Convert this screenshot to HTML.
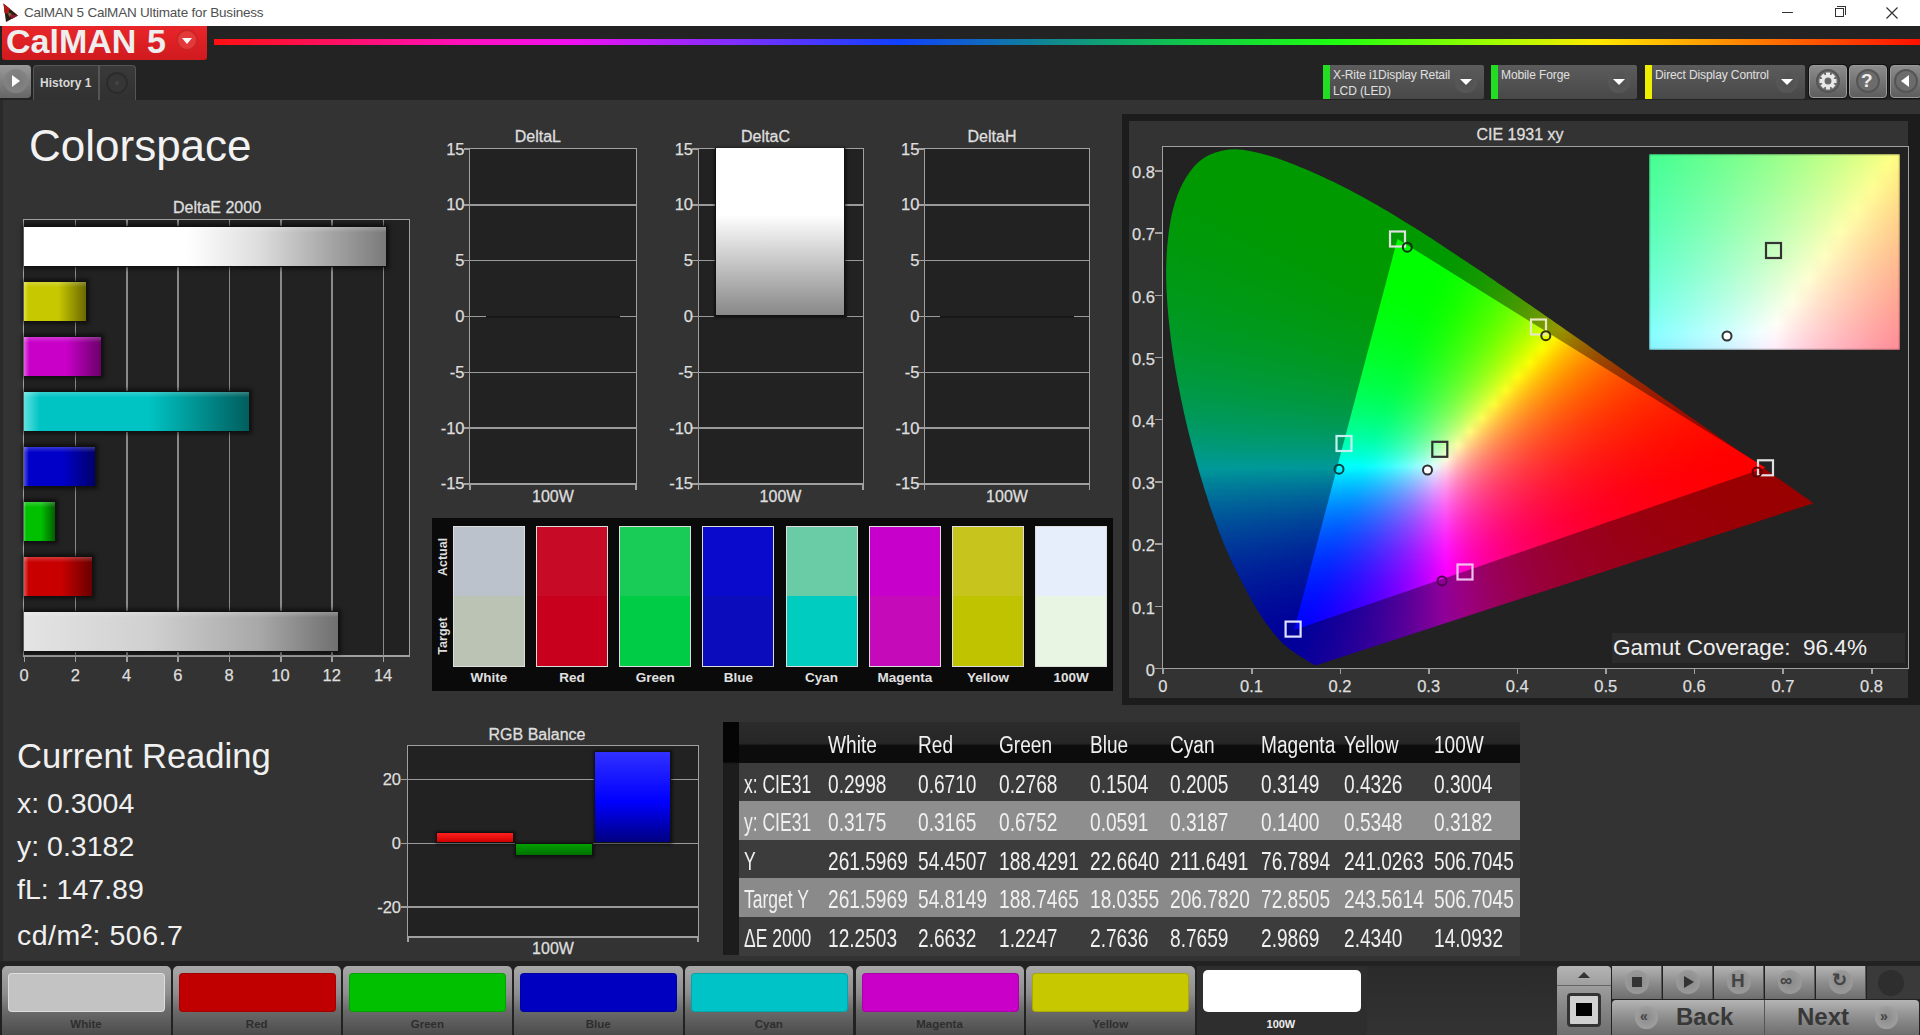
<!DOCTYPE html><html><head><meta charset="utf-8"><style>
*{margin:0;padding:0;box-sizing:border-box}
html,body{width:1920px;height:1035px;overflow:hidden;background:#333;font-family:"Liberation Sans", sans-serif}
.ab{position:absolute}
.t{position:absolute;white-space:nowrap;line-height:1}
.lb{font-size:16.5px;color:#dedede;-webkit-text-stroke:0.25px #dedede}
.tt{font-size:16px;color:#dedede;-webkit-text-stroke:0.3px #dedede}
#cie div,.cier div{position:absolute;left:0}
</style></head><body>

<div class="ab" style="left:0;top:0;width:1920px;height:26px;background:#fff"></div>
<svg class="ab" style="left:0;top:0" width="22" height="26"><path d="M3.5 3.5 L18 15.5 L6 22 Z" fill="#2a1c10"/><path d="M3.5 3.5 L10 9 L7.5 14 L4.5 13 Z" fill="#b01818"/><path d="M7.5 14 L18 15.5 L12 19 Z" fill="#8a1830"/><path d="M8 12 L12 14 L9 17 Z" fill="#7a6a40"/></svg>
<div class="t" style="left:24px;top:6px;font-size:13.5px;color:#505050;letter-spacing:-0.2px">CalMAN 5 CalMAN Ultimate for Business</div>
<div class="ab" style="left:1782px;top:12px;width:11px;height:1px;background:#333"></div>
<div class="ab" style="left:1835px;top:8px;width:9px;height:9px;border:1px solid #333"></div><div class="ab" style="left:1837px;top:6px;width:9px;height:9px;border-top:1px solid #333;border-right:1px solid #333"></div>
<svg class="ab" style="left:1886px;top:7px" width="12" height="12"><path d="M0.5 0.5 L11.5 11.5 M11.5 0.5 L0.5 11.5" stroke="#333" stroke-width="1.2"/></svg>
<div class="ab" style="left:0;top:26px;width:1920px;height:74px;background:#232323"></div>
<div class="ab" style="left:2px;top:26px;width:205px;height:34px;background:linear-gradient(#e8262a,#d01a1e);border-radius:0 0 3px 3px"></div>
<div class="t" style="left:6px;top:23.5px;font-size:34px;font-weight:bold;color:#eee;letter-spacing:0px">CalMAN</div><div class="t" style="left:147px;top:23.5px;font-size:34px;font-weight:bold;color:#eee">5</div>
<div class="ab" style="left:176px;top:29px;width:22px;height:22px;border-radius:50%;background:#e23a3a;border:2px solid #cf2424"></div>
<svg class="ab" style="left:182px;top:38px" width="10" height="7"><path d="M0 0 H10 L5 6 Z" fill="#fff"/></svg>
<div class="ab" style="left:214px;top:39px;width:1706px;height:6px;background:linear-gradient(90deg,#ff1010 0%,#ff10c0 15%,#f010f0 21%,#7a30ff 31%,#1040ff 40%,#108890 49%,#10d040 58%,#20ff10 66%,#a0ff00 75%,#ffe800 81%,#ff8000 90%,#ff1000 100%)"></div>
<div class="ab" style="left:0;top:65px;width:31px;height:33px;border-radius:0 4px 4px 0;background:linear-gradient(#9a9a9a,#666);"></div>
<div class="ab" style="left:4px;top:69px;width:24px;height:24px;border-radius:50%;background:radial-gradient(#777,#888)"></div>
<svg class="ab" style="left:11px;top:74px" width="10" height="14"><path d="M1 1 L9 7 L1 13 Z" fill="#fff"/></svg>
<div class="ab" style="left:33px;top:65px;width:103px;height:36px;border:1.5px solid #555;border-bottom:none;border-radius:4px 4px 0 0;background:linear-gradient(#3a3a3a,#303030)"></div>
<div class="ab" style="left:98px;top:66px;width:1.5px;height:34px;background:#555"></div>
<div class="t" style="left:40px;top:77px;font-size:12px;font-weight:bold;color:#d8d8d8">History 1</div>
<div class="ab" style="left:106px;top:72px;width:22px;height:22px;border-radius:50%;background:#363636;border:2px solid #2c2c2c"></div><div class="ab" style="left:115px;top:81px;width:4px;height:4px;border-radius:50%;background:#444"></div>
<div class="ab" style="left:1323px;top:65px;width:161px;height:34px;background:linear-gradient(#5c5c5c,#484848);border-radius:2px"></div>
<div class="ab" style="left:1323px;top:65px;width:7px;height:34px;background:#22dd22"></div>
<div class="t" style="left:1333px;top:69px;font-size:12px;color:#e0e0e0;letter-spacing:-0.1px">X-Rite i1Display Retail</div>
<div class="t" style="left:1333px;top:85px;font-size:12px;color:#e0e0e0;letter-spacing:-0.1px">LCD (LED)</div>
<div class="ab" style="left:1455px;top:71px;width:22px;height:22px;border-radius:50%;background:radial-gradient(#505050,#5a5a5a)"></div>
<svg class="ab" style="left:1460px;top:79px" width="12" height="8"><path d="M0 0 H12 L6 6 Z" fill="#fff"/></svg>
<div class="ab" style="left:1491px;top:65px;width:146px;height:34px;background:linear-gradient(#5c5c5c,#484848);border-radius:2px"></div>
<div class="ab" style="left:1491px;top:65px;width:7px;height:34px;background:#22dd22"></div>
<div class="t" style="left:1501px;top:69px;font-size:12px;color:#e0e0e0;letter-spacing:-0.1px">Mobile Forge</div>
<div class="ab" style="left:1608px;top:71px;width:22px;height:22px;border-radius:50%;background:radial-gradient(#505050,#5a5a5a)"></div>
<svg class="ab" style="left:1613px;top:79px" width="12" height="8"><path d="M0 0 H12 L6 6 Z" fill="#fff"/></svg>
<div class="ab" style="left:1645px;top:65px;width:160px;height:34px;background:linear-gradient(#5c5c5c,#484848);border-radius:2px"></div>
<div class="ab" style="left:1645px;top:65px;width:7px;height:34px;background:#eeee00"></div>
<div class="t" style="left:1655px;top:69px;font-size:12px;color:#e0e0e0;letter-spacing:-0.1px">Direct Display Control</div>
<div class="ab" style="left:1776px;top:71px;width:22px;height:22px;border-radius:50%;background:radial-gradient(#505050,#5a5a5a)"></div>
<svg class="ab" style="left:1781px;top:79px" width="12" height="8"><path d="M0 0 H12 L6 6 Z" fill="#fff"/></svg>
<div class="ab" style="left:1809px;top:65px;width:38px;height:33px;background:linear-gradient(#8c8c8c,#5e5e5e);border-radius:4px;border:1.5px solid #9a9a9a;box-shadow:0 0 0 1px #111"></div>
<div class="ab" style="left:1816px;top:69px;width:24px;height:24px;border-radius:50%;background:#6c6c6c;border:2px solid #555"></div>
<svg class="ab" style="left:1819px;top:72px" width="18" height="18" viewBox="-9 -9 18 18"><rect x="-2" y="-8.5" width="4" height="4" fill="#e8e8e8" transform="rotate(0)"/><rect x="-2" y="-8.5" width="4" height="4" fill="#e8e8e8" transform="rotate(45)"/><rect x="-2" y="-8.5" width="4" height="4" fill="#e8e8e8" transform="rotate(90)"/><rect x="-2" y="-8.5" width="4" height="4" fill="#e8e8e8" transform="rotate(135)"/><rect x="-2" y="-8.5" width="4" height="4" fill="#e8e8e8" transform="rotate(180)"/><rect x="-2" y="-8.5" width="4" height="4" fill="#e8e8e8" transform="rotate(225)"/><rect x="-2" y="-8.5" width="4" height="4" fill="#e8e8e8" transform="rotate(270)"/><rect x="-2" y="-8.5" width="4" height="4" fill="#e8e8e8" transform="rotate(315)"/><circle r="5" fill="none" stroke="#e8e8e8" stroke-width="3"/><circle r="2.2" fill="#666"/></svg>
<div class="ab" style="left:1849px;top:65px;width:38px;height:33px;background:linear-gradient(#8c8c8c,#5e5e5e);border-radius:4px;border:1.5px solid #9a9a9a;box-shadow:0 0 0 1px #111"></div>
<div class="ab" style="left:1856px;top:69px;width:24px;height:24px;border-radius:50%;background:#6c6c6c;border:2px solid #555"></div>
<div class="t" style="left:1861px;top:71px;font-size:19px;font-weight:bold;color:#eee">?</div>
<div class="ab" style="left:1890px;top:65px;width:32px;height:33px;background:linear-gradient(#8c8c8c,#5e5e5e);border-radius:4px;border:1.5px solid #9a9a9a;box-shadow:0 0 0 1px #111"></div>
<div class="ab" style="left:1894px;top:69px;width:24px;height:24px;border-radius:50%;background:#6c6c6c;border:2px solid #555"></div>
<svg class="ab" style="left:1900px;top:74px" width="10" height="14"><path d="M9 1 L1 7 L9 13 Z" fill="#fff"/></svg>
<div class="ab" style="left:0;top:100px;width:1920px;height:861px;background:#333"></div>
<div class="ab" style="left:0;top:100px;width:3px;height:861px;background:#2a2a2a"></div>
<div class="t" style="left:29px;top:124px;font-size:44px;color:#f2f2f2">Colorspace</div>
<div class="ab" style="left:1122px;top:114px;width:798px;height:591px;background:#1c1c1c"></div>
<div class="ab" style="left:1129px;top:121px;width:779px;height:577px;background:#333"></div>
<div class="t tt" style="left:1520px;top:127px;transform:translateX(-50%)">CIE 1931 xy</div>
<div class="ab" style="left:1162px;top:146px;width:747px;height:523px;border:1.5px solid #a0a0a0;border-right-width:1.5px;background:#222"></div>
<div class="ab" style="left:1163px;top:147px;width:745px;height:521px;clip-path:polygon(154.1px 518.1px,152.8px 518.2px,151.7px 518.0px,150.7px 517.6px,149.5px 516.9px,147.7px 515.9px,145.5px 514.4px,142.6px 512.6px,138.6px 510.2px,133.6px 507.1px,127.4px 502.7px,119.9px 496.4px,115.2px 491.5px,109.8px 485.2px,105.9px 480.1px,101.6px 474.3px,97.0px 467.2px,94.0px 462.4px,90.9px 457.2px,87.7px 451.6px,84.3px 445.4px,80.8px 438.7px,78.1px 433.5px,75.3px 428.1px,72.5px 422.4px,69.6px 416.4px,66.6px 410.0px,63.7px 403.4px,60.7px 396.4px,58.7px 391.2px,56.6px 385.9px,54.6px 380.4px,52.5px 374.8px,50.4px 369.0px,48.3px 363.0px,46.2px 356.9px,44.2px 350.6px,42.1px 344.2px,40.1px 337.7px,38.4px 332.1px,36.7px 326.4px,35.0px 320.5px,33.3px 314.6px,31.6px 308.5px,30.0px 302.3px,28.3px 296.1px,26.7px 289.8px,25.1px 283.5px,23.6px 277.2px,22.1px 270.8px,20.7px 264.5px,19.5px 258.6px,18.2px 252.7px,17.0px 246.7px,15.8px 240.6px,14.6px 234.5px,13.5px 228.4px,12.4px 222.3px,11.4px 216.2px,10.4px 210.1px,9.5px 204.1px,8.7px 198.1px,7.9px 192.2px,7.2px 186.3px,6.5px 180.0px,5.8px 173.8px,5.2px 167.5px,4.7px 161.3px,4.2px 155.1px,3.9px 148.9px,3.5px 142.9px,3.3px 136.9px,3.2px 131.0px,3.1px 125.2px,3.2px 119.5px,3.4px 113.9px,3.7px 106.6px,4.2px 99.4px,4.9px 92.4px,5.7px 85.5px,6.7px 78.8px,7.8px 72.3px,9.1px 66.1px,10.6px 60.2px,12.2px 54.6px,14.6px 47.8px,17.3px 41.3px,20.3px 35.3px,23.5px 29.8px,27.0px 24.7px,30.6px 20.1px,34.4px 16.1px,40.0px 11.5px,46.0px 8.0px,52.4px 5.5px,59.0px 3.7px,65.7px 2.6px,72.5px 2.2px,79.5px 2.8px,86.7px 4.0px,93.9px 5.6px,101.0px 7.3px,107.0px 8.9px,113.0px 10.8px,119.1px 13.0px,125.1px 15.2px,131.1px 17.6px,136.9px 19.9px,142.7px 22.3px,148.4px 24.7px,154.0px 27.2px,159.6px 29.8px,165.2px 32.4px,170.8px 35.0px,176.3px 37.7px,181.7px 40.5px,187.1px 43.3px,192.5px 46.2px,197.9px 49.1px,203.3px 52.0px,208.6px 55.0px,214.0px 58.1px,219.3px 61.2px,224.7px 64.3px,230.0px 67.5px,235.3px 70.7px,240.6px 73.9px,245.9px 77.2px,251.2px 80.5px,256.5px 83.8px,261.8px 87.2px,267.0px 90.6px,272.3px 94.0px,277.6px 97.4px,282.8px 100.9px,288.1px 104.4px,293.4px 107.9px,298.6px 111.4px,303.9px 114.9px,309.2px 118.4px,314.5px 122.0px,319.8px 125.6px,325.1px 129.2px,330.4px 132.8px,335.6px 136.4px,340.9px 140.0px,346.1px 143.6px,351.4px 147.2px,356.6px 150.8px,361.9px 154.5px,367.1px 158.1px,372.4px 161.7px,377.6px 165.3px,382.8px 169.0px,388.1px 172.6px,393.2px 176.2px,398.4px 179.8px,403.6px 183.4px,408.7px 187.0px,413.8px 190.5px,418.9px 194.1px,424.0px 197.6px,429.0px 201.2px,434.0px 204.7px,439.0px 208.2px,444.0px 211.7px,448.9px 215.1px,453.8px 218.5px,459.6px 222.6px,465.4px 226.7px,471.2px 230.7px,476.8px 234.7px,482.4px 238.6px,488.0px 242.4px,493.4px 246.2px,498.8px 250.0px,504.1px 253.7px,509.4px 257.3px,515.7px 261.8px,522.0px 266.2px,528.0px 270.5px,533.9px 274.6px,539.5px 278.5px,544.9px 282.3px,550.2px 286.0px,555.2px 289.5px,561.8px 294.1px,568.1px 298.5px,574.0px 302.6px,579.6px 306.5px,584.7px 310.1px,589.6px 313.5px,596.3px 318.1px,602.3px 322.3px,607.6px 326.1px,612.4px 329.4px,620.4px 335.0px,626.9px 339.6px,632.3px 343.4px,636.7px 346.5px,640.3px 348.9px,642.9px 350.8px,645.0px 352.2px,646.5px 353.3px,647.4px 353.9px,649.5px 355.4px,650.6px 356.2px)"><div id="cie" class="ab" style="left:0;top:0;width:745px;height:521px;filter:blur(1.5px)"><div style="top:0px;height:6px;width:660px;background:linear-gradient(90deg,#009900 0px,#009900 20px,#009900 40px,#009900 60px,#009900 80px,#009900 100px,#009900 120px,#009900 140px,#009900 160px,#009900 180px,#009900 200px,#009900 220px,#009900 240px,#009900 260px,#009900 280px,#009900 300px,#009900 320px,#049900 340px,#0b9900 360px,#139900 380px,#1e9900 400px,#299900 420px,#369900 440px,#449900 460px,#539900 480px,#649900 500px,#779900 520px,#8b9900 540px,#999200 560px,#997f00 580px,#996f00 600px,#996200 620px,#995700 640px,#994e00 660px)"></div><div style="top:6px;height:6px;width:660px;background:linear-gradient(90deg,#009900 0px,#009900 20px,#009900 40px,#009900 60px,#009900 80px,#009900 100px,#009900 120px,#009900 140px,#009900 160px,#009900 180px,#009900 200px,#009900 220px,#009900 240px,#009900 260px,#009900 280px,#009900 300px,#009900 320px,#059900 340px,#0c9900 360px,#159900 380px,#1f9900 400px,#2b9900 420px,#389900 440px,#479900 460px,#579900 480px,#689900 500px,#7c9900 520px,#909900 540px,#998c00 560px,#997a00 580px,#996b00 600px,#995f00 620px,#995400 640px,#994b00 660px)"></div><div style="top:12px;height:6px;width:660px;background:linear-gradient(90deg,#009901 0px,#009900 20px,#009900 40px,#009900 60px,#009900 80px,#009900 100px,#009900 120px,#009900 140px,#009900 160px,#009900 180px,#009900 200px,#009900 220px,#009900 240px,#009900 260px,#009900 280px,#009900 300px,#009900 320px,#069900 340px,#0d9900 360px,#179900 380px,#219900 400px,#2e9900 420px,#3b9900 440px,#4a9900 460px,#5b9900 480px,#6d9900 500px,#819900 520px,#969900 540px,#998700 560px,#997600 580px,#996700 600px,#995b00 620px,#995100 640px,#994800 660px)"></div><div style="top:18px;height:6px;width:660px;background:linear-gradient(90deg,#009901 0px,#009901 20px,#009900 40px,#009900 60px,#009900 80px,#009900 100px,#009900 120px,#009900 140px,#009900 160px,#009900 180px,#009900 200px,#009900 220px,#009900 240px,#009900 260px,#009900 280px,#009900 300px,#019900 320px,#069900 340px,#0e9900 360px,#189900 380px,#239900 400px,#309900 420px,#3e9900 440px,#4e9900 460px,#5f9900 480px,#719900 500px,#869900 520px,#999600 540px,#998200 560px,#997100 580px,#996300 600px,#995800 620px,#994e00 640px,#994500 660px)"></div><div style="top:24px;height:6px;width:660px;background:linear-gradient(90deg,#009902 0px,#009901 20px,#009900 40px,#009900 60px,#009900 80px,#009900 100px,#009900 120px,#009900 140px,#009900 160px,#009900 180px,#009900 200px,#009900 220px,#009900 240px,#009900 260px,#009900 280px,#009900 300px,#019900 320px,#079900 340px,#109900 360px,#1a9900 380px,#259900 400px,#329900 420px,#419900 440px,#519900 460px,#639900 480px,#769900 500px,#8b9900 520px,#999000 540px,#997d00 560px,#996d00 580px,#996000 600px,#995400 620px,#994b00 640px,#994300 660px)"></div><div style="top:30px;height:6px;width:660px;background:linear-gradient(90deg,#009903 0px,#009902 20px,#009901 40px,#009900 60px,#009900 80px,#009900 100px,#009900 120px,#009900 140px,#009900 160px,#009900 180px,#009900 200px,#009900 220px,#009900 240px,#009900 260px,#009900 280px,#009900 300px,#029900 320px,#089900 340px,#119900 360px,#1c9900 380px,#289900 400px,#359900 420px,#449900 440px,#559900 460px,#679900 480px,#7b9900 500px,#919900 520px,#998b00 540px,#997800 560px,#996900 580px,#995c00 600px,#995100 620px,#994800 640px,#994000 660px)"></div><div style="top:36px;height:6px;width:660px;background:linear-gradient(90deg,#009903 0px,#009902 20px,#009901 40px,#009900 60px,#009900 80px,#009900 100px,#009900 120px,#009900 140px,#009900 160px,#009900 180px,#009900 200px,#009900 220px,#009900 240px,#009900 260px,#009900 280px,#009900 300px,#029900 320px,#0a9900 340px,#139900 360px,#1e9900 380px,#2a9900 400px,#389900 420px,#479900 440px,#599900 460px,#6c9900 480px,#809900 500px,#979900 520px,#998500 540px,#997300 560px,#996500 580px,#995800 600px,#994e00 620px,#994500 640px,#993d00 660px)"></div><div style="top:42px;height:6px;width:660px;background:linear-gradient(90deg,#009904 0px,#009903 20px,#009902 40px,#009901 60px,#009900 80px,#009900 100px,#009900 120px,#009900 140px,#009900 160px,#009900 180px,#009900 200px,#009900 220px,#009900 240px,#009900 260px,#009900 280px,#009900 300px,#039900 320px,#0b9900 340px,#149900 360px,#209900 380px,#2c9900 400px,#3b9900 420px,#4b9900 440px,#5d9900 460px,#709900 480px,#869900 500px,#999500 520px,#998000 540px,#996f00 560px,#996100 580px,#995500 600px,#994b00 620px,#994200 640px,#993b00 660px)"></div><div style="top:48px;height:6px;width:660px;background:linear-gradient(90deg,#009905 0px,#009904 20px,#009902 40px,#009901 60px,#009900 80px,#009900 100px,#009900 120px,#009900 140px,#009900 160px,#009900 180px,#009900 200px,#009900 220px,#009900 240px,#009900 260px,#009900 280px,#009900 300px,#049900 320px,#0c9900 340px,#169900 360px,#229900 380px,#2f9900 400px,#3e9900 420px,#4f9900 440px,#619900 460px,#759900 480px,#8c9900 500px,#998f00 520px,#997b00 540px,#996a00 560px,#995d00 580px,#995100 600px,#994800 620px,#994000 640px,#993900 660px)"></div><div style="top:54px;height:6px;width:660px;background:linear-gradient(90deg,#009906 0px,#009904 20px,#009903 40px,#009902 60px,#009901 80px,#009900 100px,#009900 120px,#009900 140px,#009900 160px,#009900 180px,#009900 200px,#009900 220px,#009900 240px,#009900 260px,#009900 280px,#009900 300px,#059900 320px,#0d9900 340px,#189900 360px,#249900 380px,#329900 400px,#419900 420px,#529900 440px,#669900 460px,#7b9900 480px,#929900 500px,#998900 520px,#997600 540px,#996600 560px,#995900 580px,#994e00 600px,#994500 620px,#993d00 640px,#993600 660px)"></div><div style="top:60px;height:6px;width:660px;background:linear-gradient(90deg,#009907 0px,#009905 20px,#009904 40px,#009903 60px,#009901 80px,#009900 100px,#009900 120px,#009900 140px,#009900 160px,#009900 180px,#009900 200px,#009900 220px,#009900 240px,#009900 260px,#009900 280px,#009900 300px,#069900 320px,#0f9900 340px,#1a9900 360px,#269900 380px,#349900 400px,#459900 420px,#569900 440px,#6a9900 460px,#809900 480px,#989900 500px,#998300 520px,#997100 540px,#996200 560px,#995500 580px,#994b00 600px,#994200 620px,#993a00 640px,#993400 660px)"></div><div style="top:66px;height:6px;width:660px;background:linear-gradient(90deg,#009908 0px,#009906 20px,#009905 40px,#009903 60px,#009902 80px,#009901 100px,#009900 120px,#009900 140px,#009900 160px,#009900 180px,#009900 200px,#009900 220px,#009900 240px,#009900 260px,#009900 280px,#019900 300px,#079900 320px,#109900 340px,#1c9900 360px,#299900 380px,#379900 400px,#489900 420px,#5b9900 440px,#6f9900 460px,#869900 480px,#999300 500px,#997e00 520px,#996c00 540px,#995e00 560px,#995200 580px,#994800 600px,#993f00 620px,#993800 640px,#993200 660px)"></div><div style="top:72px;height:6px;width:660px;background:linear-gradient(90deg,#009909 0px,#009907 20px,#009906 40px,#009904 60px,#009903 80px,#009902 100px,#009901 120px,#009900 140px,#009900 160px,#009900 180px,#009900 200px,#009900 220px,#009900 240px,#009900 260px,#009900 280px,#019900 300px,#089900 320px,#129900 340px,#1e9900 360px,#2b9900 380px,#3b9900 400px,#4c9900 420px,#5f9900 440px,#759900 460px,#8c9900 480px,#998d00 500px,#997800 520px,#996700 540px,#995a00 560px,#994e00 580px,#994500 600px,#993c00 620px,#993500 640px,#992f00 660px)"></div><div style="top:78px;height:6px;width:660px;background:linear-gradient(90deg,#00990a 0px,#009908 20px,#009907 40px,#009905 60px,#009904 80px,#009902 100px,#009901 120px,#009900 140px,#009900 160px,#009900 180px,#009900 200px,#009900 220px,#009900 240px,#009900 260px,#009900 280px,#029900 300px,#099900 320px,#149900 340px,#209900 360px,#2e9900 380px,#3e9900 400px,#509900 420px,#649900 440px,#7a9900 460px,#939900 480px,#998700 500px,#997300 520px,#996300 540px,#995600 560px,#994b00 580px,#994200 600px,#993a00 620px,#993300 640px,#992d00 660px)"></div><div style="top:84px;height:6px;width:660px;background:linear-gradient(90deg,#00990b 0px,#009909 20px,#009908 40px,#009906 60px,#009905 80px,#009903 100px,#009902 120px,#009901 140px,#009900 160px,#009900 180px,#009900 200px,#009900 220px,#009900 240px,#009900 260px,#009900 280px,#039900 300px,#0b9900 320px,#159900 340px,#229900 360px,#319900 380px,#419900 400px,#549900 420px,#699900 440px,#809900 460px,#999900 480px,#998100 500px,#996e00 520px,#995f00 540px,#995200 560px,#994800 580px,#993f00 600px,#993700 620px,#993100 640px,#992b00 660px)"></div><div style="top:90px;height:6px;width:660px;background:linear-gradient(90deg,#00990c 0px,#00990a 20px,#009909 40px,#009907 60px,#009906 80px,#009904 100px,#009903 120px,#009901 140px,#009900 160px,#009900 180px,#009900 200px,#009900 220px,#009900 240px,#009900 260px,#009900 280px,#039900 300px,#0c9900 320px,#179900 340px,#249900 360px,#349900 380px,#459900 400px,#589900 420px,#6e9900 440px,#869900 460px,#999200 480px,#997b00 500px,#996900 520px,#995b00 540px,#994e00 560px,#994400 580px,#993c00 600px,#993500 620px,#992e00 640px,#992900 660px)"></div><div style="top:96px;height:6px;width:660px;background:linear-gradient(90deg,#00990d 0px,#00990b 20px,#00990a 40px,#009908 60px,#009907 80px,#009905 100px,#009904 120px,#009902 140px,#009901 160px,#009900 180px,#009900 200px,#009900 220px,#009900 240px,#009900 260px,#009900 280px,#049900 300px,#0e9900 320px,#199900 340px,#279900 360px,#379900 380px,#499900 400px,#5d9900 420px,#749900 440px,#8d9900 460px,#998b00 480px,#997600 500px,#996400 520px,#995600 540px,#994b00 560px,#994100 580px,#993900 600px,#993200 620px,#992c00 640px,#992700 660px)"></div><div style="top:102px;height:6px;width:660px;background:linear-gradient(90deg,#00990e 0px,#00990d 20px,#00990b 40px,#009909 60px,#009908 80px,#009906 100px,#009904 120px,#009903 140px,#009902 160px,#009900 180px,#009900 200px,#009900 220px,#009900 240px,#009900 260px,#009900 280px,#059900 300px,#0f9900 320px,#1b9900 340px,#2a9900 360px,#3a9900 380px,#4d9900 400px,#629900 420px,#799900 440px,#949900 460px,#998500 480px,#997000 500px,#996000 520px,#995200 540px,#994700 560px,#993e00 580px,#993600 600px,#993000 620px,#992a00 640px,#992500 660px)"></div><div style="top:108px;height:6px;width:660px;background:linear-gradient(90deg,#009910 0px,#00990e 20px,#00990c 40px,#00990b 60px,#009909 80px,#009907 100px,#009906 120px,#009904 140px,#009902 160px,#009901 180px,#009900 200px,#009900 220px,#009900 240px,#009900 260px,#009900 280px,#079900 300px,#119900 320px,#1e9900 340px,#2d9900 360px,#3e9900 380px,#519900 400px,#679900 420px,#809900 440px,#999700 460px,#997e00 480px,#996b00 500px,#995b00 520px,#994f00 540px,#994400 560px,#993b00 580px,#993400 600px,#992d00 620px,#992800 640px,#992300 660px)"></div><div style="top:114px;height:6px;width:660px;background:linear-gradient(90deg,#009911 0px,#00990f 20px,#00990e 40px,#00990c 60px,#00990a 80px,#009908 100px,#009907 120px,#009905 140px,#009903 160px,#009902 180px,#009900 200px,#009900 220px,#009900 240px,#009900 260px,#009900 280px,#089900 300px,#139900 320px,#209900 340px,#309900 360px,#429900 380px,#569900 400px,#6d9900 420px,#869900 440px,#999000 460px,#997800 480px,#996600 500px,#995700 520px,#994b00 540px,#994100 560px,#993800 580px,#993100 600px,#992b00 620px,#992600 640px,#992100 660px)"></div><div style="top:120px;height:6px;width:660px;background:linear-gradient(90deg,#009913 0px,#009911 20px,#00990f 40px,#00990d 60px,#00990c 80px,#00990a 100px,#009908 120px,#009906 140px,#009904 160px,#009903 180px,#009901 200px,#009900 220px,#009900 240px,#009900 260px,#019900 280px,#099900 300px,#159900 320px,#229900 340px,#339900 360px,#459900 380px,#5b9900 400px,#739900 420px,#8d9900 440px,#998900 460px,#997300 480px,#996100 500px,#995300 520px,#994700 540px,#993e00 560px,#993600 580px,#992f00 600px,#992900 620px,#992400 640px,#991f00 660px)"></div><div style="top:126px;height:6px;width:660px;background:linear-gradient(90deg,#009914 0px,#009912 20px,#009911 40px,#00990f 60px,#00990d 80px,#00990b 100px,#009909 120px,#009907 140px,#009905 160px,#009904 180px,#009902 200px,#009901 220px,#009900 240px,#009900 260px,#029900 280px,#0b9900 300px,#179900 320px,#259900 340px,#369900 360px,#4a9900 380px,#609900 400px,#799900 420px,#959900 440px,#998200 460px,#996d00 480px,#995c00 500px,#994f00 520px,#994400 540px,#993b00 560px,#993300 580px,#992c00 600px,#992700 620px,#992200 640px,#991e00 660px)"></div><div style="top:132px;height:6px;width:660px;background:linear-gradient(90deg,#009916 0px,#009914 20px,#009912 40px,#009910 60px,#00990e 80px,#00990d 100px,#00990b 120px,#009909 140px,#009907 160px,#009905 180px,#009903 200px,#009901 220px,#009900 240px,#009900 260px,#039900 280px,#0c9900 300px,#199900 320px,#289900 340px,#3a9900 360px,#4e9900 380px,#659900 400px,#7f9900 420px,#999600 440px,#997c00 460px,#996800 480px,#995800 500px,#994b00 520px,#994000 540px,#993800 560px,#993000 580px,#992a00 600px,#992400 620px,#992000 640px,#991c00 660px)"></div><div style="top:138px;height:6px;width:660px;background:linear-gradient(90deg,#009918 0px,#009916 20px,#009914 40px,#009912 60px,#009910 80px,#00990e 100px,#00990c 120px,#00990a 140px,#009908 160px,#009906 180px,#009904 200px,#009902 220px,#009901 240px,#009900 260px,#049900 280px,#0e9900 300px,#1b9900 320px,#2b9900 340px,#3e9900 360px,#539900 380px,#6b9900 400px,#869900 420px,#998e00 440px,#997500 460px,#996200 480px,#995300 500px,#994700 520px,#993d00 540px,#993500 560px,#992e00 580px,#992800 600px,#992200 620px,#991e00 640px,#991a00 660px)"></div><div style="top:144px;height:6px;width:660px;background:linear-gradient(90deg,#009919 0px,#009918 20px,#009916 40px,#009914 60px,#009912 80px,#009910 100px,#00990e 120px,#00990c 140px,#009909 160px,#009907 180px,#009905 200px,#009903 220px,#009902 240px,#009900 260px,#059900 280px,#109900 300px,#1e9900 320px,#2e9900 340px,#429900 360px,#589900 380px,#719900 400px,#8e9900 420px,#998700 440px,#996f00 460px,#995d00 480px,#994f00 500px,#994300 520px,#993a00 540px,#993200 560px,#992b00 580px,#992500 600px,#992000 620px,#991c00 640px,#991800 660px)"></div><div style="top:150px;height:6px;width:660px;background:linear-gradient(90deg,#00991b 0px,#009919 20px,#009918 40px,#009916 60px,#009914 80px,#009911 100px,#00990f 120px,#00990d 140px,#00990b 160px,#009909 180px,#009907 200px,#009905 220px,#009903 240px,#009901 260px,#069900 280px,#129900 300px,#209900 320px,#329900 340px,#469900 360px,#5d9900 380px,#789900 400px,#969900 420px,#998000 440px,#996a00 460px,#995900 480px,#994b00 500px,#994000 520px,#993700 540px,#992f00 560px,#992900 580px,#992300 600px,#991e00 620px,#991a00 640px,#991700 660px)"></div><div style="top:156px;height:6px;width:660px;background:linear-gradient(90deg,#00991d 0px,#00991b 20px,#009919 40px,#009917 60px,#009915 80px,#009913 100px,#009911 120px,#00990f 140px,#00990d 160px,#00990a 180px,#009908 200px,#009906 220px,#009904 240px,#009902 260px,#079900 280px,#149900 300px,#239900 320px,#359900 340px,#4b9900 360px,#639900 380px,#7f9900 400px,#999400 420px,#997900 440px,#996400 460px,#995400 480px,#994700 500px,#993c00 520px,#993400 540px,#992c00 560px,#992600 580px,#992100 600px,#991d00 620px,#991900 640px,#991500 660px)"></div><div style="top:162px;height:6px;width:660px;background:linear-gradient(90deg,#00991f 0px,#00991e 20px,#00991c 40px,#009919 60px,#009917 80px,#009915 100px,#009913 120px,#009911 140px,#00990f 160px,#00990c 180px,#00990a 200px,#009908 220px,#009905 240px,#009903 260px,#099901 280px,#169900 300px,#269900 320px,#399900 340px,#509900 360px,#699900 380px,#879900 400px,#998c00 420px,#997200 440px,#995f00 460px,#994f00 480px,#994300 500px,#993900 520px,#993100 540px,#992a00 560px,#992400 580px,#991f00 600px,#991b00 620px,#991700 640px,#991400 660px)"></div><div style="top:168px;height:6px;width:660px;background:linear-gradient(90deg,#009922 0px,#009920 20px,#00991e 40px,#00991c 60px,#00991a 80px,#009917 100px,#009915 120px,#009913 140px,#009910 160px,#00990e 180px,#00990c 200px,#009909 220px,#009907 240px,#019904 260px,#0a9902 280px,#189900 300px,#299900 320px,#3e9900 340px,#559900 360px,#709900 380px,#8f9900 400px,#998400 420px,#996c00 440px,#995900 460px,#994b00 480px,#993f00 500px,#993600 520px,#992e00 540px,#992700 560px,#992200 580px,#991d00 600px,#991900 620px,#991500 640px,#991200 660px)"></div><div style="top:174px;height:6px;width:660px;background:linear-gradient(90deg,#009924 0px,#009922 20px,#009920 40px,#00991e 60px,#00991c 80px,#00991a 100px,#009917 120px,#009915 140px,#009913 160px,#009910 180px,#00990e 200px,#00990b 220px,#009909 240px,#029906 260px,#0c9904 280px,#1b9901 300px,#2d9900 320px,#429900 340px,#5b9900 360px,#779900 380px,#979900 400px,#997c00 420px,#996600 440px,#995400 460px,#994700 480px,#993c00 500px,#993300 520px,#992b00 540px,#992500 560px,#992000 580px,#991b00 600px,#991700 620px,#991400 640px,#991100 660px)"></div><div style="top:180px;height:6px;width:660px;background:linear-gradient(90deg,#009926 0px,#009924 20px,#009922 40px,#009920 60px,#00991e 80px,#00991c 100px,#00991a 120px,#009917 140px,#009915 160px,#009912 180px,#009910 200px,#00990d 220px,#00990a 240px,#039908 260px,#0e9905 280px,#1e9903 300px,#309901 320px,#479900 340px,#619900 360px,#7f9900 380px,#999200 400px,#997500 420px,#996000 440px,#995000 460px,#994300 480px,#993800 500px,#993000 520px,#992800 540px,#992300 560px,#991d00 580px,#991900 600px,#991500 620px,#991200 640px,#990f00 660px)"></div><div style="top:186px;height:6px;width:660px;background:linear-gradient(90deg,#009929 0px,#009927 20px,#009925 40px,#009923 60px,#009921 80px,#00991e 100px,#00991c 120px,#00991a 140px,#009917 160px,#009915 180px,#009912 200px,#00990f 220px,#00990c 240px,#04990a 260px,#109907 280px,#219904 300px,#349902 320px,#4c9900 340px,#679900 360px,#879900 380px,#998900 400px,#996f00 420px,#995a00 440px,#994b00 460px,#993f00 480px,#993500 500px,#992d00 520px,#992600 540px,#992000 560px,#991b00 580px,#991700 600px,#991400 620px,#991100 640px,#990e00 660px)"></div><div style="top:192px;height:6px;width:660px;background:linear-gradient(90deg,#00992c 0px,#00992a 20px,#009928 40px,#009925 60px,#009923 80px,#009921 100px,#00991f 120px,#00991c 140px,#00991a 160px,#009917 180px,#009914 200px,#009911 220px,#00990f 240px,#05990c 260px,#129909 280px,#249906 300px,#399903 320px,#529901 340px,#6e9900 360px,#8f9900 380px,#998100 400px,#996800 420px,#995500 440px,#994600 460px,#993b00 480px,#993100 500px,#992a00 520px,#992300 540px,#991e00 560px,#991900 580px,#991600 600px,#991200 620px,#990f00 640px,#990d00 660px)"></div><div style="top:198px;height:6px;width:660px;background:linear-gradient(90deg,#00992e 0px,#00992c 20px,#00992a 40px,#009928 60px,#009926 80px,#009924 100px,#009921 120px,#00991f 140px,#00991c 160px,#00991a 180px,#009917 200px,#009914 220px,#009911 240px,#07990e 260px,#15990b 280px,#279908 300px,#3d9905 320px,#589902 340px,#769900 360px,#999900 380px,#997900 400px,#996200 420px,#995000 440px,#994200 460px,#993700 480px,#992e00 500px,#992700 520px,#992100 540px,#991c00 560px,#991800 580px,#991400 600px,#991100 620px,#990e00 640px,#990c00 660px)"></div><div style="top:204px;height:6px;width:660px;background:linear-gradient(90deg,#009931 0px,#00992f 20px,#00992d 40px,#00992b 60px,#009929 80px,#009927 100px,#009924 120px,#009922 140px,#00991f 160px,#00991c 180px,#00991a 200px,#009917 220px,#009914 240px,#089911 260px,#18990d 280px,#2b990a 300px,#429907 320px,#5e9904 340px,#7e9901 360px,#998f00 380px,#997200 400px,#995c00 420px,#994b00 440px,#993e00 460px,#993400 480px,#992b00 500px,#992400 520px,#991f00 540px,#991a00 560px,#991600 580px,#991200 600px,#990f00 620px,#990d00 640px,#990a00 660px)"></div><div style="top:210px;height:6px;width:660px;background:linear-gradient(90deg,#009935 0px,#009933 20px,#009930 40px,#00992e 60px,#00992c 80px,#00992a 100px,#009927 120px,#009925 140px,#009922 160px,#00991f 180px,#00991d 200px,#00991a 220px,#009917 240px,#0a9913 260px,#1a9910 280px,#2f990d 300px,#489909 320px,#659906 340px,#879903 360px,#998600 380px,#996a00 400px,#995600 420px,#994600 440px,#993a00 460px,#993000 480px,#992800 500px,#992200 520px,#991c00 540px,#991800 560px,#991400 580px,#991100 600px,#990e00 620px,#990b00 640px,#990900 660px)"></div><div style="top:216px;height:6px;width:660px;background:linear-gradient(90deg,#009938 0px,#009936 20px,#009934 40px,#009932 60px,#00992f 80px,#00992d 100px,#00992b 120px,#009928 140px,#009926 160px,#009923 180px,#009920 200px,#00991d 220px,#01991a 240px,#0c9916 260px,#1e9913 280px,#339910 300px,#4e990c 320px,#6c9908 340px,#919905 360px,#997e01 380px,#996400 400px,#995000 420px,#994200 440px,#993600 460px,#992d00 480px,#992500 500px,#991f00 520px,#991a00 540px,#991600 560px,#991200 580px,#990f00 600px,#990c00 620px,#990a00 640px,#990800 660px)"></div><div style="top:222px;height:6px;width:660px;background:linear-gradient(90deg,#00993b 0px,#009939 20px,#009937 40px,#009935 60px,#009933 80px,#009931 100px,#00992e 120px,#00992c 140px,#009929 160px,#009926 180px,#009923 200px,#009920 220px,#02991d 240px,#0f991a 260px,#219916 280px,#389913 300px,#54990f 320px,#75990b 340px,#999707 360px,#997503 380px,#995d00 400px,#994b00 420px,#993d00 440px,#993200 460px,#992a00 480px,#992300 500px,#991d00 520px,#991800 540px,#991400 560px,#991000 580px,#990e00 600px,#990b00 620px,#990900 640px,#990700 660px)"></div><div style="top:228px;height:6px;width:660px;background:linear-gradient(90deg,#00993f 0px,#00993d 20px,#00993b 40px,#009939 60px,#009937 80px,#009934 100px,#009932 120px,#00992f 140px,#00992d 160px,#00992a 180px,#009927 200px,#009924 220px,#039921 240px,#11991d 260px,#25991a 280px,#3d9916 300px,#5b9912 320px,#7e990e 340px,#998d09 360px,#996d04 380px,#995701 400px,#994600 420px,#993900 440px,#992f00 460px,#992700 480px,#992000 500px,#991a00 520px,#991600 540px,#991200 560px,#990f00 580px,#990c00 600px,#990a00 620px,#990800 640px,#990600 660px)"></div><div style="top:234px;height:6px;width:660px;background:linear-gradient(90deg,#009943 0px,#009941 20px,#00993f 40px,#00993d 60px,#00993b 80px,#009938 100px,#009936 120px,#009934 140px,#009931 160px,#00992e 180px,#00992b 200px,#009928 220px,#049925 240px,#149921 260px,#29991e 280px,#43991a 300px,#629916 320px,#879912 340px,#99830b 360px,#996606 380px,#995102 400px,#994100 420px,#993500 440px,#992b00 460px,#992400 480px,#991d00 500px,#991800 520px,#991400 540px,#991000 560px,#990d00 580px,#990b00 600px,#990900 620px,#990700 640px,#990500 660px)"></div><div style="top:240px;height:6px;width:660px;background:linear-gradient(90deg,#009947 0px,#009945 20px,#009943 40px,#009941 60px,#00993f 80px,#00993d 100px,#00993a 120px,#009938 140px,#009935 160px,#009932 180px,#009930 200px,#00992c 220px,#069929 240px,#179926 260px,#2d9922 280px,#49991e 300px,#6a991a 320px,#929916 340px,#997a0d 360px,#995f08 380px,#994b04 400px,#993c01 420px,#993100 440px,#992800 460px,#992100 480px,#991b00 500px,#991600 520px,#991200 540px,#990f00 560px,#990c00 580px,#990900 600px,#990700 620px,#990600 640px,#990400 660px)"></div><div style="top:246px;height:6px;width:660px;background:linear-gradient(90deg,#00994b 0px,#009949 20px,#009947 40px,#009945 60px,#009943 80px,#009941 100px,#00993f 120px,#00993c 140px,#00993a 160px,#009937 180px,#009934 200px,#009931 220px,#08992e 240px,#1a992a 260px,#329927 280px,#4f9923 300px,#73991e 320px,#999519 340px,#997110 360px,#995809 380px,#994605 400px,#993802 420px,#992d00 440px,#992500 460px,#991e00 480px,#991900 500px,#991400 520px,#991000 540px,#990d00 560px,#990a00 580px,#990800 600px,#990600 620px,#990500 640px,#990300 660px)"></div><div style="top:252px;height:6px;width:660px;background:linear-gradient(90deg,#009950 0px,#00994e 20px,#00994c 40px,#00994a 60px,#009948 80px,#009946 100px,#009944 120px,#009941 140px,#00993f 160px,#00993c 180px,#009939 200px,#009936 220px,#0a9933 240px,#1e9930 260px,#37992c 280px,#579928 300px,#7d9924 320px,#998a1c 340px,#996812 360px,#99510b 380px,#994006 400px,#993403 420px,#992a01 440px,#992200 460px,#991b00 480px,#991600 500px,#991200 520px,#990e00 540px,#990b00 560px,#990900 580px,#990700 600px,#990500 620px,#990400 640px,#990200 660px)"></div><div style="top:258px;height:6px;width:660px;background:linear-gradient(90deg,#009954 0px,#009953 20px,#009951 40px,#00994f 60px,#00994d 80px,#00994b 100px,#009949 120px,#009947 140px,#009944 160px,#009942 180px,#00993f 200px,#00993c 220px,#0c9939 240px,#229935 260px,#3d9932 280px,#5f992e 300px,#889929 320px,#997f1e 340px,#996114 360px,#994b0d 380px,#993b08 400px,#992f04 420px,#992602 440px,#991f00 460px,#991900 480px,#991400 500px,#991000 520px,#990d00 540px,#990a00 560px,#990800 580px,#990600 600px,#990400 620px,#990300 640px,#990200 660px)"></div><div style="top:264px;height:6px;width:660px;background:linear-gradient(90deg,#009959 0px,#009958 20px,#009956 40px,#009955 60px,#009953 80px,#009951 100px,#00994f 120px,#00994c 140px,#00994a 160px,#009948 180px,#009945 200px,#009942 220px,#0f993f 240px,#26993c 260px,#439938 280px,#689934 300px,#939930 320px,#997521 340px,#995916 360px,#99450f 380px,#993709 400px,#992b06 420px,#992303 440px,#991c01 460px,#991600 480px,#991200 500px,#990e00 520px,#990b00 540px,#990900 560px,#990600 580px,#990500 600px,#990300 620px,#990200 640px,#990100 660px)"></div><div style="top:270px;height:6px;width:660px;background:linear-gradient(90deg,#00995f 0px,#00995d 20px,#00995c 40px,#00995a 60px,#009958 80px,#009957 100px,#009955 120px,#009953 140px,#009950 160px,#00994e 180px,#00994b 200px,#029949 220px,#129946 240px,#2b9942 260px,#4a993f 280px,#71993b 300px,#999234 320px,#996c23 340px,#995218 360px,#994010 380px,#99320b 400px,#992807 420px,#992004 440px,#991902 460px,#991400 480px,#991000 500px,#990c00 520px,#990a00 540px,#990700 560px,#990500 580px,#990400 600px,#990200 620px,#990100 640px,#990000 660px)"></div><div style="top:276px;height:6px;width:660px;background:linear-gradient(90deg,#009964 0px,#009963 20px,#009962 40px,#009960 60px,#00995f 80px,#00995d 100px,#00995b 120px,#009959 140px,#009957 160px,#009955 180px,#009953 200px,#039950 220px,#16994d 240px,#30994a 260px,#529947 280px,#7c9943 300px,#998637 320px,#996326 340px,#994b1a 360px,#993a12 380px,#992e0c 400px,#992408 420px,#991d05 440px,#991703 460px,#991201 480px,#990e00 500px,#990b00 520px,#990800 540px,#990600 560px,#990400 580px,#990300 600px,#990200 620px,#990100 640px,#990000 660px)"></div><div style="top:282px;height:6px;width:660px;background:linear-gradient(90deg,#00996b 0px,#009969 20px,#009968 40px,#009967 60px,#009965 80px,#009964 100px,#009962 120px,#009960 140px,#00995f 160px,#00995d 180px,#00995a 200px,#059958 220px,#199955 240px,#369953 260px,#5b994f 280px,#88994c 300px,#997a3a 320px,#995a28 340px,#99451c 360px,#993514 380px,#99290e 400px,#992109 420px,#991a06 440px,#991404 460px,#991002 480px,#990c00 500px,#990900 520px,#990700 540px,#990500 560px,#990300 580px,#990200 600px,#990100 620px,#990000 640px,#990000 660px)"></div><div style="top:288px;height:6px;width:660px;background:linear-gradient(90deg,#009971 0px,#009970 20px,#00996f 40px,#00996e 60px,#00996c 80px,#00996b 100px,#00996a 120px,#009968 140px,#009967 160px,#009965 180px,#009963 200px,#079961 220px,#1e995e 240px,#3d995c 260px,#649959 280px,#959956 300px,#99703c 320px,#99532a 340px,#993f1e 360px,#993016 380px,#99250f 400px,#991d0b 420px,#991707 440px,#991204 460px,#990e02 480px,#990a01 500px,#990800 520px,#990500 540px,#990400 560px,#990200 580px,#990100 600px,#990000 620px,#990000 640px,#990000 660px)"></div><div style="top:294px;height:6px;width:660px;background:linear-gradient(90deg,#009978 0px,#009977 20px,#009976 40px,#009975 60px,#009974 80px,#009973 100px,#009972 120px,#009971 140px,#00996f 160px,#00996e 180px,#00996c 200px,#0a996a 220px,#229969 240px,#449966 260px,#6f9964 280px,#998e5b 300px,#99663f 320px,#994b2d 340px,#993920 360px,#992c17 380px,#992211 400px,#991a0c 420px,#991408 440px,#991005 460px,#990c03 480px,#990902 500px,#990600 520px,#990400 540px,#990300 560px,#990100 580px,#990000 600px,#990000 620px,#990000 640px,#990000 660px)"></div><div style="top:300px;height:6px;width:660px;background:linear-gradient(90deg,#00997f 0px,#00997e 20px,#00997e 40px,#00997d 60px,#00997c 80px,#00997c 100px,#00997b 120px,#00997a 140px,#009979 160px,#009978 180px,#009977 200px,#0d9975 220px,#289974 240px,#4c9972 260px,#7b9970 280px,#99815d 300px,#995c41 320px,#99442f 340px,#993322 360px,#992719 380px,#991e12 400px,#99170d 420px,#991209 440px,#990d06 460px,#990a04 480px,#990702 500px,#990501 520px,#990300 540px,#990200 560px,#990100 580px,#990000 600px,#990000 620px,#990000 640px,#990000 660px)"></div><div style="top:306px;height:6px;width:660px;background:linear-gradient(90deg,#009987 0px,#009987 20px,#009986 40px,#009986 60px,#009985 80px,#009985 100px,#009984 120px,#009984 140px,#009983 160px,#009983 180px,#009982 200px,#109981 220px,#2e9980 240px,#56997f 260px,#88997e 280px,#99755f 300px,#995343 320px,#993d31 340px,#992e24 360px,#99231b 380px,#991b14 400px,#99140f 420px,#990f0b 440px,#990b07 460px,#990805 480px,#990603 500px,#990402 520px,#990200 540px,#990100 560px,#990000 580px,#990000 600px,#990000 620px,#990000 640px,#990000 660px)"></div><div style="top:312px;height:6px;width:660px;background:linear-gradient(90deg,#00998f 0px,#00998f 20px,#00998f 40px,#00998f 60px,#00998f 80px,#00998f 100px,#00998f 120px,#00998f 140px,#00998f 160px,#00998f 180px,#00998e 200px,#14998e 220px,#34998e 240px,#60998e 260px,#98998e 280px,#996961 300px,#994b45 320px,#993733 340px,#992926 360px,#991f1d 380px,#991715 400px,#991210 420px,#990d0c 440px,#990908 460px,#990706 480px,#990404 500px,#990302 520px,#990101 540px,#990000 560px,#990000 580px,#990000 600px,#990000 620px,#990000 640px,#990000 660px)"></div><div style="top:318px;height:6px;width:660px;background:linear-gradient(90deg,#009998 0px,#009998 20px,#009999 40px,#009999 60px,#009999 80px,#009899 100px,#009899 120px,#009799 140px,#009799 160px,#009699 180px,#019699 200px,#189599 220px,#3a9499 240px,#689399 260px,#998a90 280px,#995f64 300px,#994348 320px,#993135 340px,#992528 360px,#991b1e 380px,#991417 400px,#990f11 420px,#990b0d 440px,#99080a 460px,#990507 480px,#990305 500px,#990203 520px,#990001 540px,#990000 560px,#990000 580px,#990000 600px,#990000 620px,#990000 640px,#990000 660px)"></div><div style="top:324px;height:6px;width:660px;background:linear-gradient(90deg,#009199 0px,#009099 20px,#009099 40px,#008f99 60px,#008e99 80px,#008d99 100px,#008c99 120px,#008c99 140px,#008a99 160px,#008999 180px,#038899 200px,#1a8799 220px,#3c8599 240px,#688399 260px,#997b92 280px,#995566 300px,#993c4a 320px,#992c37 340px,#99202a 360px,#991820 380px,#991118 400px,#990d13 420px,#99090e 440px,#99060b 460px,#990408 480px,#990205 500px,#990104 520px,#990002 540px,#990001 560px,#990000 580px,#990000 600px,#990000 620px,#990000 640px,#990000 660px)"></div><div style="top:330px;height:6px;width:660px;background:linear-gradient(90deg,#008899 0px,#008799 20px,#008699 40px,#008599 60px,#008499 80px,#008399 100px,#008299 120px,#008099 140px,#007f99 160px,#007d99 180px,#057c99 200px,#1c7a99 220px,#3e7799 240px,#697599 260px,#996e93 280px,#994b68 300px,#99354c 320px,#992739 340px,#991c2b 360px,#991421 380px,#990f1a 400px,#990a14 420px,#99070f 440px,#99040c 460px,#990209 480px,#990106 500px,#990004 520px,#990003 540px,#990001 560px,#990000 580px,#990000 600px,#990000 620px,#990000 640px,#990000 660px)"></div><div style="top:336px;height:6px;width:660px;background:linear-gradient(90deg,#008099 0px,#007f99 20px,#007e99 40px,#007c99 60px,#007b99 80px,#007999 100px,#007899 120px,#007699 140px,#007499 160px,#007299 180px,#077099 200px,#1e6d99 220px,#3f6b99 240px,#696899 260px,#996194 280px,#994369 300px,#992f4e 320px,#99223b 340px,#99182d 360px,#991123 380px,#990c1b 400px,#990815 420px,#990510 440px,#99030d 460px,#99010a 480px,#990007 500px,#990005 520px,#990003 540px,#990002 560px,#990001 580px,#990000 600px,#990000 620px,#990000 640px,#990000 660px)"></div><div style="top:342px;height:6px;width:660px;background:linear-gradient(90deg,#007899 0px,#007799 20px,#007599 40px,#007499 60px,#007299 80px,#007099 100px,#006e99 120px,#006c99 140px,#006a99 160px,#006899 180px,#096599 200px,#206299 220px,#415f99 240px,#6a5c99 260px,#995696 280px,#993b6b 300px,#992950 320px,#991d3d 340px,#99152f 360px,#990e25 380px,#990a1d 400px,#990617 420px,#990412 440px,#99020e 460px,#99000a 480px,#990008 500px,#990006 520px,#990004 540px,#990003 560px,#990001 580px,#990001 600px,#990000 620px,#990000 640px,#990000 660px)"></div><div style="top:348px;height:6px;width:660px;background:linear-gradient(90deg,#007199 0px,#006f99 20px,#006d99 40px,#006c99 60px,#006a99 80px,#006899 100px,#006699 120px,#006399 140px,#006199 160px,#005e99 180px,#0b5b99 200px,#225899 220px,#425499 240px,#6a5199 260px,#994b97 280px,#99336d 300px,#992351 320px,#99193e 340px,#991131 360px,#990c26 380px,#99081e 400px,#990518 420px,#990213 440px,#99010f 460px,#99000b 480px,#990009 500px,#990006 520px,#990005 540px,#990003 560px,#990002 580px,#990001 600px,#990000 620px,#990000 640px,#990000 660px)"></div><div style="top:354px;height:6px;width:660px;background:linear-gradient(90deg,#006a99 0px,#006899 20px,#006699 40px,#006499 60px,#006299 80px,#006099 100px,#005d99 120px,#005b99 140px,#005899 160px,#005599 180px,#0c5299 200px,#244e99 220px,#434b99 240px,#6a4799 260px,#994298 280px,#992c6f 300px,#991e53 320px,#991540 340px,#990e32 360px,#990928 380px,#990620 400px,#990319 420px,#990114 440px,#990010 460px,#99000c 480px,#99000a 500px,#990007 520px,#990005 540px,#990004 560px,#990002 580px,#990001 600px,#990001 620px,#990000 640px,#990000 660px)"></div><div style="top:360px;height:6px;width:660px;background:linear-gradient(90deg,#006399 0px,#006199 20px,#005f99 40px,#005d99 60px,#005b99 80px,#005899 100px,#005699 120px,#005399 140px,#005099 160px,#004d99 180px,#0e4999 200px,#264699 220px,#454299 240px,#6b3d99 260px,#993999 280px,#992670 300px,#991955 320px,#991142 340px,#990b34 360px,#990729 380px,#990421 400px,#99021a 420px,#990015 440px,#990011 460px,#99000d 480px,#99000a 500px,#990008 520px,#990006 540px,#990004 560px,#990003 580px,#990002 600px,#990001 620px,#990000 640px,#990000 660px)"></div><div style="top:366px;height:6px;width:660px;background:linear-gradient(90deg,#005c99 0px,#005a99 20px,#005899 40px,#005699 60px,#005499 80px,#005199 100px,#004e99 120px,#004b99 140px,#004899 160px,#014599 180px,#104199 200px,#283d99 220px,#463999 240px,#6b3599 260px,#983099 280px,#992072 300px,#991557 320px,#990e43 340px,#990835 360px,#99052b 380px,#990222 400px,#99001c 420px,#990016 440px,#990012 460px,#99000e 480px,#99000b 500px,#990009 520px,#990007 540px,#990005 560px,#990003 580px,#990002 600px,#990001 620px,#990001 640px,#990000 660px)"></div><div style="top:372px;height:6px;width:660px;background:linear-gradient(90deg,#005699 0px,#005499 20px,#005299 40px,#004f99 60px,#004d99 80px,#004a99 100px,#004799 120px,#004499 140px,#004199 160px,#023e99 180px,#123a99 200px,#293699 220px,#473299 240px,#6b2d99 260px,#972899 280px,#991a73 300px,#991158 320px,#990a45 340px,#990637 360px,#99032c 380px,#990124 400px,#99001d 420px,#990017 440px,#990013 460px,#99000f 480px,#99000c 500px,#99000a 520px,#990007 540px,#990006 560px,#990004 580px,#990003 600px,#990002 620px,#990001 640px,#990000 660px)"></div><div style="top:378px;height:6px;width:660px;background:linear-gradient(90deg,#005099 0px,#004e99 20px,#004c99 40px,#004999 60px,#004799 80px,#004499 100px,#004199 120px,#003e99 140px,#003a99 160px,#033799 180px,#143399 200px,#2b2f99 220px,#482b99 240px,#6c2699 260px,#962199 280px,#991575 300px,#990d5a 320px,#990847 340px,#990438 360px,#99012d 380px,#990025 400px,#99001e 420px,#990019 440px,#990014 460px,#990010 480px,#99000d 500px,#99000a 520px,#990008 540px,#990006 560px,#990005 580px,#990003 600px,#990002 620px,#990001 640px,#990001 660px)"></div><div style="top:384px;height:6px;width:660px;background:linear-gradient(90deg,#004b99 0px,#004899 20px,#004699 40px,#004399 60px,#004199 80px,#003e99 100px,#003b99 120px,#003799 140px,#003499 160px,#043099 180px,#152d99 200px,#2c2899 220px,#492499 240px,#6c1f99 260px,#951b99 280px,#991176 300px,#990a5b 320px,#990548 340px,#99023a 360px,#99002f 380px,#990026 400px,#99001f 420px,#99001a 440px,#990015 460px,#990011 480px,#99000e 500px,#99000b 520px,#990009 540px,#990007 560px,#990005 580px,#990004 600px,#990003 620px,#990002 640px,#990001 660px)"></div><div style="top:390px;height:6px;width:660px;background:linear-gradient(90deg,#004599 0px,#004399 20px,#004199 40px,#003e99 60px,#003b99 80px,#003899 100px,#003599 120px,#003299 140px,#002e99 160px,#062b99 180px,#172799 200px,#2e2399 220px,#4a1e99 240px,#6c1a99 260px,#951599 280px,#990c77 300px,#99075d 320px,#99034a 340px,#99003b 360px,#990030 380px,#990028 400px,#990020 420px,#99001b 440px,#990016 460px,#990012 480px,#99000f 500px,#99000c 520px,#99000a 540px,#990008 560px,#990006 580px,#990004 600px,#990003 620px,#990002 640px,#990001 660px)"></div><div style="top:396px;height:6px;width:660px;background:linear-gradient(90deg,#004099 0px,#003e99 20px,#003b99 40px,#003999 60px,#003699 80px,#003399 100px,#003099 120px,#002c99 140px,#002999 160px,#072599 180px,#182199 200px,#2f1d99 220px,#4b1999 240px,#6c1499 260px,#941099 280px,#990979 300px,#99045e 320px,#99014b 340px,#99003d 360px,#990032 380px,#990029 400px,#990022 420px,#99001c 440px,#990017 460px,#990013 480px,#990010 500px,#99000d 520px,#99000a 540px,#990008 560px,#990006 580px,#990005 600px,#990004 620px,#990003 640px,#990002 660px)"></div><div style="top:402px;height:6px;width:660px;background:linear-gradient(90deg,#003c99 0px,#003999 20px,#003699 40px,#003499 60px,#003199 80px,#002e99 100px,#002a99 120px,#002799 140px,#002499 160px,#092099 180px,#1a1c99 200px,#301899 220px,#4c1499 240px,#6d0f99 260px,#930b99 280px,#99057a 300px,#990260 320px,#99004d 340px,#99003e 360px,#990033 380px,#99002a 400px,#990023 420px,#99001d 440px,#990018 460px,#990014 480px,#990011 500px,#99000e 520px,#99000b 540px,#990009 560px,#990007 580px,#990006 600px,#990004 620px,#990003 640px,#990002 660px)"></div><div style="top:408px;height:6px;width:660px;background:linear-gradient(90deg,#003799 0px,#003499 20px,#003299 40px,#002f99 60px,#002c99 80px,#002999 100px,#002699 120px,#002299 140px,#001f99 160px,#0a1b99 180px,#1b1799 200px,#321399 220px,#4d0f99 240px,#6d0b99 260px,#920799 280px,#99037b 300px,#990061 320px,#99004e 340px,#990040 360px,#990034 380px,#99002b 400px,#990024 420px,#99001e 440px,#990019 460px,#990015 480px,#990011 500px,#99000e 520px,#99000c 540px,#99000a 560px,#990008 580px,#990006 600px,#990005 620px,#990003 640px,#990002 660px)"></div><div style="top:414px;height:6px;width:660px;background:linear-gradient(90deg,#003399 0px,#003099 20px,#002d99 40px,#002a99 60px,#002799 80px,#002499 100px,#002199 120px,#001e99 140px,#001a99 160px,#0c1799 180px,#1d1399 200px,#330f99 220px,#4e0b99 240px,#6d0799 260px,#920499 280px,#99007c 300px,#990063 320px,#990050 340px,#990041 360px,#990036 380px,#99002d 400px,#990025 420px,#99001f 440px,#99001a 460px,#990016 480px,#990012 500px,#99000f 520px,#99000d 540px,#99000a 560px,#990008 580px,#990007 600px,#990005 620px,#990004 640px,#990003 660px)"></div><div style="top:420px;height:6px;width:660px;background:linear-gradient(90deg,#002e99 0px,#002c99 20px,#002999 40px,#002699 60px,#002399 80px,#002099 100px,#001d99 120px,#001a99 140px,#011699 160px,#0d1399 180px,#1e0f99 200px,#340b99 220px,#4f0899 240px,#6d0499 260px,#910199 280px,#99007d 300px,#990064 320px,#990051 340px,#990042 360px,#990037 380px,#99002e 400px,#990026 420px,#990020 440px,#99001b 460px,#990017 480px,#990013 500px,#990010 520px,#99000d 540px,#99000b 560px,#990009 580px,#990007 600px,#990006 620px,#990004 640px,#990003 660px)"></div><div style="top:426px;height:6px;width:660px;background:linear-gradient(90deg,#002a99 0px,#002899 20px,#002599 40px,#002299 60px,#001f99 80px,#001c99 100px,#001999 120px,#001699 140px,#021299 160px,#0e0f99 180px,#200c99 200px,#350899 220px,#4f0599 240px,#6e0299 260px,#910099 280px,#99007f 300px,#990065 320px,#990052 340px,#990044 360px,#990038 380px,#99002f 400px,#990027 420px,#990021 440px,#99001c 460px,#990018 480px,#990014 500px,#990011 520px,#99000e 540px,#99000c 560px,#99000a 580px,#990008 600px,#990006 620px,#990005 640px,#990004 660px)"></div><div style="top:432px;height:6px;width:660px;background:linear-gradient(90deg,#002799 0px,#002499 20px,#002199 40px,#001e99 60px,#001c99 80px,#001899 100px,#001599 120px,#001299 140px,#030f99 160px,#100c99 180px,#210899 200px,#370599 220px,#500299 240px,#6e0099 260px,#900099 280px,#990080 300px,#990066 320px,#990053 340px,#990045 360px,#990039 380px,#990030 400px,#990029 420px,#990022 440px,#99001d 460px,#990019 480px,#990015 500px,#990012 520px,#99000f 540px,#99000c 560px,#99000a 580px,#990008 600px,#990007 620px,#990005 640px,#990004 660px)"></div><div style="top:438px;height:6px;width:660px;background:linear-gradient(90deg,#002399 0px,#002099 20px,#001e99 40px,#001b99 60px,#001899 80px,#001599 100px,#001299 120px,#000f99 140px,#040c99 160px,#110999 180px,#220599 200px,#380399 220px,#510099 240px,#6e0099 260px,#900099 280px,#990081 300px,#990068 320px,#990055 340px,#990046 360px,#99003b 380px,#990031 400px,#99002a 420px,#990023 440px,#99001e 460px,#99001a 480px,#990016 500px,#990012 520px,#990010 540px,#99000d 560px,#99000b 580px,#990009 600px,#990007 620px,#990006 640px,#990005 660px)"></div><div style="top:444px;height:6px;width:660px;background:linear-gradient(90deg,#002099 0px,#001d99 20px,#001a99 40px,#001799 60px,#001599 80px,#001299 100px,#000f99 120px,#000c99 140px,#050999 160px,#120699 180px,#240399 200px,#390199 220px,#510099 240px,#6e0099 260px,#8f0099 280px,#990082 300px,#990069 320px,#990056 340px,#990047 360px,#99003c 380px,#990032 400px,#99002b 420px,#990024 440px,#99001f 460px,#99001a 480px,#990017 500px,#990013 520px,#990010 540px,#99000e 560px,#99000c 580px,#99000a 600px,#990008 620px,#990006 640px,#990005 660px)"></div><div style="top:450px;height:6px;width:660px;background:linear-gradient(90deg,#001c99 0px,#001a99 20px,#001799 40px,#001499 60px,#001299 80px,#000f99 100px,#000c99 120px,#000999 140px,#060699 160px,#140399 180px,#250199 200px,#3a0099 220px,#520099 240px,#6e0099 260px,#8e0099 280px,#990083 300px,#99006a 320px,#990057 340px,#990049 360px,#99003d 380px,#990034 400px,#99002c 420px,#990025 440px,#990020 460px,#99001b 480px,#990017 500px,#990014 520px,#990011 540px,#99000e 560px,#99000c 580px,#99000a 600px,#990009 620px,#990007 640px,#990006 660px)"></div><div style="top:456px;height:6px;width:660px;background:linear-gradient(90deg,#001999 0px,#001799 20px,#001499 40px,#001199 60px,#000f99 80px,#000c99 100px,#000999 120px,#000699 140px,#070499 160px,#150199 180px,#260099 200px,#3b0099 220px,#530099 240px,#6e0099 260px,#8e0099 280px,#990084 300px,#99006b 320px,#990058 340px,#99004a 360px,#99003e 380px,#990035 400px,#99002d 420px,#990026 440px,#990021 460px,#99001c 480px,#990018 500px,#990015 520px,#990012 540px,#99000f 560px,#99000d 580px,#99000b 600px,#990009 620px,#990008 640px,#990006 660px)"></div><div style="top:462px;height:6px;width:660px;background:linear-gradient(90deg,#001699 0px,#001499 20px,#001199 40px,#000f99 60px,#000c99 80px,#000999 100px,#000799 120px,#000499 140px,#090299 160px,#160099 180px,#270099 200px,#3c0099 220px,#530099 240px,#6f0099 260px,#8e0099 280px,#990084 300px,#99006c 320px,#99005a 340px,#99004b 360px,#99003f 380px,#990036 400px,#99002e 420px,#990027 440px,#990022 460px,#99001d 480px,#990019 500px,#990016 520px,#990013 540px,#990010 560px,#99000e 580px,#99000b 600px,#99000a 620px,#990008 640px,#990007 660px)"></div><div style="top:468px;height:6px;width:660px;background:linear-gradient(90deg,#001499 0px,#001199 20px,#000f99 40px,#000c99 60px,#000999 80px,#000799 100px,#000499 120px,#000299 140px,#0a0099 160px,#180099 180px,#290099 200px,#3d0099 220px,#540099 240px,#6f0099 260px,#8d0099 280px,#990085 300px,#99006d 320px,#99005b 340px,#99004c 360px,#990040 380px,#990037 400px,#99002f 420px,#990028 440px,#990023 460px,#99001e 480px,#99001a 500px,#990016 520px,#990013 540px,#990011 560px,#99000e 580px,#99000c 600px,#99000a 620px,#990009 640px,#990007 660px)"></div><div style="top:474px;height:6px;width:660px;background:linear-gradient(90deg,#001199 0px,#000e99 20px,#000c99 40px,#000a99 60px,#000799 80px,#000599 100px,#000399 120px,#010199 140px,#0b0099 160px,#190099 180px,#2a0099 200px,#3e0099 220px,#550099 240px,#6f0099 260px,#8d0099 280px,#990086 300px,#99006e 320px,#99005c 340px,#99004d 360px,#990042 380px,#990038 400px,#990030 420px,#990029 440px,#990024 460px,#99001f 480px,#99001b 500px,#990017 520px,#990014 540px,#990011 560px,#99000f 580px,#99000d 600px,#99000b 620px,#990009 640px,#990008 660px)"></div><div style="top:480px;height:6px;width:660px;background:linear-gradient(90deg,#000e99 0px,#000c99 20px,#000a99 40px,#000799 60px,#000599 80px,#000399 100px,#000199 120px,#020099 140px,#0c0099 160px,#1a0099 180px,#2b0099 200px,#3e0099 220px,#550099 240px,#6f0099 260px,#8c0099 280px,#990087 300px,#99006f 320px,#99005d 340px,#99004e 360px,#990043 380px,#990039 400px,#990031 420px,#99002a 440px,#990025 460px,#990020 480px,#99001c 500px,#990018 520px,#990015 540px,#990012 560px,#99000f 580px,#99000d 600px,#99000b 620px,#99000a 640px,#990008 660px)"></div><div style="top:486px;height:6px;width:660px;background:linear-gradient(90deg,#000c99 0px,#000a99 20px,#000899 40px,#000599 60px,#000399 80px,#000199 100px,#000099 120px,#030099 140px,#0d0099 160px,#1b0099 180px,#2c0099 200px,#3f0099 220px,#560099 240px,#6f0099 260px,#8c0099 280px,#990088 300px,#990070 320px,#99005e 340px,#99004f 360px,#990044 380px,#99003a 400px,#990032 420px,#99002b 440px,#990026 460px,#990021 480px,#99001c 500px,#990019 520px,#990015 540px,#990013 560px,#990010 580px,#99000e 600px,#99000c 620px,#99000a 640px,#990009 660px)"></div><div style="top:492px;height:6px;width:660px;background:linear-gradient(90deg,#000a99 0px,#000899 20px,#000699 40px,#000499 60px,#000299 80px,#000099 100px,#000099 120px,#040099 140px,#0e0099 160px,#1c0099 180px,#2d0099 200px,#400099 220px,#560099 240px,#6f0099 260px,#8c0099 280px,#990089 300px,#990071 320px,#99005f 340px,#990051 360px,#990045 380px,#99003b 400px,#990033 420px,#99002c 440px,#990026 460px,#990021 480px,#99001d 500px,#990019 520px,#990016 540px,#990013 560px,#990011 580px,#99000f 600px,#99000d 620px,#99000b 640px,#990009 660px)"></div><div style="top:498px;height:6px;width:660px;background:linear-gradient(90deg,#000899 0px,#000699 20px,#000499 40px,#000299 60px,#000099 80px,#000099 100px,#000099 120px,#050099 140px,#100099 160px,#1d0099 180px,#2e0099 200px,#410099 220px,#570099 240px,#6f0099 260px,#8b0099 280px,#99008a 300px,#990072 320px,#990060 340px,#990052 360px,#990046 380px,#99003c 400px,#990034 420px,#99002d 440px,#990027 460px,#990022 480px,#99001e 500px,#99001a 520px,#990017 540px,#990014 560px,#990011 580px,#99000f 600px,#99000d 620px,#99000b 640px,#99000a 660px)"></div><div style="top:504px;height:6px;width:660px;background:linear-gradient(90deg,#000699 0px,#000499 20px,#000299 40px,#000199 60px,#000099 80px,#000099 100px,#000099 120px,#060099 140px,#110099 160px,#1e0099 180px,#2f0099 200px,#420099 220px,#570099 240px,#700099 260px,#8b0099 280px,#99008a 300px,#990073 320px,#990061 340px,#990053 360px,#990047 380px,#99003d 400px,#990035 420px,#99002e 440px,#990028 460px,#990023 480px,#99001f 500px,#99001b 520px,#990018 540px,#990015 560px,#990012 580px,#990010 600px,#99000e 620px,#99000c 640px,#99000a 660px)"></div><div style="top:510px;height:6px;width:660px;background:linear-gradient(90deg,#000499 0px,#000399 20px,#000199 40px,#000099 60px,#000099 80px,#000099 100px,#000099 120px,#070099 140px,#120099 160px,#1f0099 180px,#300099 200px,#420099 220px,#580099 240px,#700099 260px,#8a0099 280px,#99008b 300px,#990074 320px,#990062 340px,#990054 360px,#990048 380px,#99003e 400px,#990036 420px,#99002f 440px,#990029 460px,#990024 480px,#990020 500px,#99001c 520px,#990018 540px,#990015 560px,#990013 580px,#990010 600px,#99000e 620px,#99000c 640px,#99000b 660px)"></div><div style="top:516px;height:5px;width:660px;background:linear-gradient(90deg,#000399 0px,#000199 20px,#000099 40px,#000099 60px,#000099 80px,#000099 100px,#000099 120px,#080099 140px,#130099 160px,#200099 180px,#310099 200px,#430099 220px,#580099 240px,#700099 260px,#8a0099 280px,#99008c 300px,#990075 320px,#990063 340px,#990055 360px,#990049 380px,#99003f 400px,#990037 420px,#990030 440px,#99002a 460px,#990025 480px,#990020 500px,#99001c 520px,#990019 540px,#990016 560px,#990013 580px,#990011 600px,#99000f 620px,#99000d 640px,#99000b 660px)"></div></div></div>
<div class="ab" style="left:1290px;top:235px;width:480px;height:400px;clip-path:polygon(107.5px 4.0px,475.5px 232.8px,4.1px 395.1px)"><div class="ab cier" style="left:0;top:0;width:480px;height:400px;filter:blur(1px)"><div style="top:0px;height:3px;width:480px;background:linear-gradient(90deg,#00ff03 0px,#00ff02 12px,#00ff01 24px,#00ff00 36px,#00ff00 48px,#00ff00 60px,#00ff00 72px,#00ff00 84px,#00ff00 96px,#00ff00 108px,#00ff00 120px,#00ff00 132px,#00ff00 144px,#00ff00 156px,#02ff00 168px,#09ff00 180px,#12ff00 192px,#1cff00 204px,#28ff00 216px,#35ff00 228px,#43ff00 240px,#52ff00 252px,#62ff00 264px,#74ff00 276px,#87ff00 288px,#9bff00 300px,#b0ff00 312px,#c7ff00 324px,#e0ff00 336px,#f9ff00 348px,#ffeb00 360px,#ffd400 372px,#ffc100 384px,#ffb000 396px,#ffa100 408px,#ff9300 420px,#ff8700 432px,#ff7c00 444px,#ff7300 456px,#ff6a00 468px,#ff6200 480px)"></div><div style="top:3px;height:3px;width:480px;background:linear-gradient(90deg,#00ff03 0px,#00ff02 12px,#00ff01 24px,#00ff00 36px,#00ff00 48px,#00ff00 60px,#00ff00 72px,#00ff00 84px,#00ff00 96px,#00ff00 108px,#00ff00 120px,#00ff00 132px,#00ff00 144px,#00ff00 156px,#03ff00 168px,#0aff00 180px,#13ff00 192px,#1eff00 204px,#29ff00 216px,#37ff00 228px,#45ff00 240px,#54ff00 252px,#65ff00 264px,#77ff00 276px,#8aff00 288px,#9fff00 300px,#b5ff00 312px,#ccff00 324px,#e5ff00 336px,#ffff00 348px,#ffe500 360px,#ffd000 372px,#ffbd00 384px,#ffac00 396px,#ff9d00 408px,#ff9000 420px,#ff8400 432px,#ff7a00 444px,#ff7000 456px,#ff6800 468px,#ff6000 480px)"></div><div style="top:6px;height:3px;width:480px;background:linear-gradient(90deg,#00ff04 0px,#00ff03 12px,#00ff02 24px,#00ff01 36px,#00ff00 48px,#00ff00 60px,#00ff00 72px,#00ff00 84px,#00ff00 96px,#00ff00 108px,#00ff00 120px,#00ff00 132px,#00ff00 144px,#00ff00 156px,#03ff00 168px,#0bff00 180px,#14ff00 192px,#1fff00 204px,#2bff00 216px,#39ff00 228px,#47ff00 240px,#57ff00 252px,#68ff00 264px,#7aff00 276px,#8eff00 288px,#a3ff00 300px,#b9ff00 312px,#d1ff00 324px,#eaff00 336px,#fff900 348px,#ffe000 360px,#ffcb00 372px,#ffb800 384px,#ffa800 396px,#ff9a00 408px,#ff8d00 420px,#ff8100 432px,#ff7700 444px,#ff6e00 456px,#ff6500 468px,#ff5d00 480px)"></div><div style="top:9px;height:3px;width:480px;background:linear-gradient(90deg,#00ff05 0px,#00ff03 12px,#00ff02 24px,#00ff01 36px,#00ff00 48px,#00ff00 60px,#00ff00 72px,#00ff00 84px,#00ff00 96px,#00ff00 108px,#00ff00 120px,#00ff00 132px,#00ff00 144px,#00ff00 156px,#04ff00 168px,#0cff00 180px,#16ff00 192px,#21ff00 204px,#2dff00 216px,#3bff00 228px,#49ff00 240px,#5aff00 252px,#6bff00 264px,#7eff00 276px,#92ff00 288px,#a7ff00 300px,#beff00 312px,#d6ff00 324px,#f0ff00 336px,#fff300 348px,#ffdb00 360px,#ffc600 372px,#ffb400 384px,#ffa400 396px,#ff9600 408px,#ff8900 420px,#ff7e00 432px,#ff7400 444px,#ff6b00 456px,#ff6300 468px,#ff5b00 480px)"></div><div style="top:12px;height:3px;width:480px;background:linear-gradient(90deg,#00ff06 0px,#00ff04 12px,#00ff03 24px,#00ff01 36px,#00ff00 48px,#00ff00 60px,#00ff00 72px,#00ff00 84px,#00ff00 96px,#00ff00 108px,#00ff00 120px,#00ff00 132px,#00ff00 144px,#00ff00 156px,#05ff00 168px,#0dff00 180px,#17ff00 192px,#22ff00 204px,#2fff00 216px,#3dff00 228px,#4cff00 240px,#5cff00 252px,#6eff00 264px,#81ff00 276px,#96ff00 288px,#abff00 300px,#c3ff00 312px,#dbff00 324px,#f6ff00 336px,#ffed00 348px,#ffd600 360px,#ffc200 372px,#ffb000 384px,#ffa000 396px,#ff9300 408px,#ff8600 420px,#ff7b00 432px,#ff7100 444px,#ff6800 456px,#ff6000 468px,#ff5900 480px)"></div><div style="top:15px;height:3px;width:480px;background:linear-gradient(90deg,#00ff06 0px,#00ff05 12px,#00ff03 24px,#00ff02 36px,#00ff01 48px,#00ff00 60px,#00ff00 72px,#00ff00 84px,#00ff00 96px,#00ff00 108px,#00ff00 120px,#00ff00 132px,#00ff00 144px,#00ff00 156px,#06ff00 168px,#0eff00 180px,#18ff00 192px,#24ff00 204px,#31ff00 216px,#3fff00 228px,#4eff00 240px,#5fff00 252px,#71ff00 264px,#85ff00 276px,#99ff00 288px,#b0ff00 300px,#c8ff00 312px,#e1ff00 324px,#fcff00 336px,#ffe800 348px,#ffd100 360px,#ffbd00 372px,#ffac00 384px,#ff9d00 396px,#ff8f00 408px,#ff8300 420px,#ff7800 432px,#ff6f00 444px,#ff6600 456px,#ff5e00 468px,#ff5700 480px)"></div><div style="top:18px;height:3px;width:480px;background:linear-gradient(90deg,#00ff07 0px,#00ff06 12px,#00ff04 24px,#00ff03 36px,#00ff01 48px,#00ff00 60px,#00ff00 72px,#00ff00 84px,#00ff00 96px,#00ff00 108px,#00ff00 120px,#00ff00 132px,#00ff00 144px,#00ff00 156px,#06ff00 168px,#0fff00 180px,#19ff00 192px,#25ff00 204px,#32ff00 216px,#41ff00 228px,#51ff00 240px,#62ff00 252px,#74ff00 264px,#88ff00 276px,#9eff00 288px,#b4ff00 300px,#cdff00 312px,#e6ff00 324px,#fffc00 336px,#ffe200 348px,#ffcc00 360px,#ffb900 372px,#ffa800 384px,#ff9900 396px,#ff8c00 408px,#ff8000 420px,#ff7600 432px,#ff6c00 444px,#ff6400 456px,#ff5c00 468px,#ff5500 480px)"></div><div style="top:21px;height:3px;width:480px;background:linear-gradient(90deg,#00ff08 0px,#00ff06 12px,#00ff05 24px,#00ff03 36px,#00ff02 48px,#00ff01 60px,#00ff00 72px,#00ff00 84px,#00ff00 96px,#00ff00 108px,#00ff00 120px,#00ff00 132px,#00ff00 144px,#01ff00 156px,#07ff00 168px,#10ff00 180px,#1bff00 192px,#27ff00 204px,#34ff00 216px,#43ff00 228px,#53ff00 240px,#65ff00 252px,#78ff00 264px,#8cff00 276px,#a2ff00 288px,#b9ff00 300px,#d2ff00 312px,#ecff00 324px,#fff600 336px,#ffdd00 348px,#ffc700 360px,#ffb400 372px,#ffa400 384px,#ff9500 396px,#ff8900 408px,#ff7d00 420px,#ff7300 432px,#ff6a00 444px,#ff6100 456px,#ff5a00 468px,#ff5300 480px)"></div><div style="top:24px;height:3px;width:480px;background:linear-gradient(90deg,#00ff09 0px,#00ff07 12px,#00ff06 24px,#00ff04 36px,#00ff03 48px,#00ff01 60px,#00ff00 72px,#00ff00 84px,#00ff00 96px,#00ff00 108px,#00ff00 120px,#00ff00 132px,#00ff00 144px,#01ff00 156px,#08ff00 168px,#11ff00 180px,#1cff00 192px,#29ff00 204px,#36ff00 216px,#46ff00 228px,#56ff00 240px,#68ff00 252px,#7bff00 264px,#90ff00 276px,#a6ff00 288px,#beff00 300px,#d7ff00 312px,#f2ff00 324px,#fff000 336px,#ffd800 348px,#ffc300 360px,#ffb000 372px,#ffa000 384px,#ff9200 396px,#ff8500 408px,#ff7a00 420px,#ff7000 432px,#ff6700 444px,#ff5f00 456px,#ff5700 468px,#ff5100 480px)"></div><div style="top:27px;height:3px;width:480px;background:linear-gradient(90deg,#00ff0a 0px,#00ff08 12px,#00ff07 24px,#00ff05 36px,#00ff03 48px,#00ff02 60px,#00ff01 72px,#00ff00 84px,#00ff00 96px,#00ff00 108px,#00ff00 120px,#00ff00 132px,#00ff00 144px,#02ff00 156px,#09ff00 168px,#13ff00 180px,#1eff00 192px,#2aff00 204px,#39ff00 216px,#48ff00 228px,#59ff00 240px,#6bff00 252px,#7fff00 264px,#94ff00 276px,#aaff00 288px,#c3ff00 300px,#ddff00 312px,#f8ff00 324px,#ffea00 336px,#ffd200 348px,#ffbe00 360px,#ffac00 372px,#ff9c00 384px,#ff8e00 396px,#ff8200 408px,#ff7700 420px,#ff6d00 432px,#ff6400 444px,#ff5c00 456px,#ff5500 468px,#ff4f00 480px)"></div><div style="top:30px;height:3px;width:480px;background:linear-gradient(90deg,#00ff0b 0px,#00ff09 12px,#00ff07 24px,#00ff06 36px,#00ff04 48px,#00ff03 60px,#00ff01 72px,#00ff00 84px,#00ff00 96px,#00ff00 108px,#00ff00 120px,#00ff00 132px,#00ff00 144px,#02ff00 156px,#0aff00 168px,#14ff00 180px,#1fff00 192px,#2cff00 204px,#3bff00 216px,#4bff00 228px,#5cff00 240px,#6eff00 252px,#82ff00 264px,#98ff00 276px,#afff00 288px,#c8ff00 300px,#e2ff00 312px,#feff00 324px,#ffe500 336px,#ffcd00 348px,#ffb900 360px,#ffa800 372px,#ff9900 384px,#ff8b00 396px,#ff7f00 408px,#ff7400 420px,#ff6b00 432px,#ff6200 444px,#ff5a00 456px,#ff5300 468px,#ff4d00 480px)"></div><div style="top:33px;height:3px;width:480px;background:linear-gradient(90deg,#00ff0c 0px,#00ff0a 12px,#00ff08 24px,#00ff07 36px,#00ff05 48px,#00ff03 60px,#00ff02 72px,#00ff01 84px,#00ff00 96px,#00ff00 108px,#00ff00 120px,#00ff00 132px,#00ff00 144px,#03ff00 156px,#0bff00 168px,#15ff00 180px,#21ff00 192px,#2eff00 204px,#3dff00 216px,#4dff00 228px,#5fff00 240px,#72ff00 252px,#86ff00 264px,#9cff00 276px,#b4ff00 288px,#cdff00 300px,#e8ff00 312px,#fff900 324px,#ffdf00 336px,#ffc800 348px,#ffb500 360px,#ffa400 372px,#ff9500 384px,#ff8800 396px,#ff7c00 408px,#ff7100 420px,#ff6800 432px,#ff5f00 444px,#ff5800 456px,#ff5100 468px,#ff4b00 480px)"></div><div style="top:36px;height:3px;width:480px;background:linear-gradient(90deg,#00ff0d 0px,#00ff0b 12px,#00ff09 24px,#00ff08 36px,#00ff06 48px,#00ff04 60px,#00ff03 72px,#00ff01 84px,#00ff00 96px,#00ff00 108px,#00ff00 120px,#00ff00 132px,#00ff00 144px,#04ff00 156px,#0cff00 168px,#16ff00 180px,#23ff00 192px,#30ff00 204px,#3fff00 216px,#50ff00 228px,#62ff00 240px,#75ff00 252px,#8aff00 264px,#a0ff00 276px,#b9ff00 288px,#d2ff00 300px,#eeff00 312px,#fff300 324px,#ffd900 336px,#ffc300 348px,#ffb000 360px,#ffa000 372px,#ff9100 384px,#ff8400 396px,#ff7900 408px,#ff6f00 420px,#ff6500 432px,#ff5d00 444px,#ff5600 456px,#ff4f00 468px,#ff4900 480px)"></div><div style="top:39px;height:3px;width:480px;background:linear-gradient(90deg,#00ff0e 0px,#00ff0c 12px,#00ff0a 24px,#00ff08 36px,#00ff07 48px,#00ff05 60px,#00ff03 72px,#00ff02 84px,#00ff01 96px,#00ff00 108px,#00ff00 120px,#00ff00 132px,#00ff00 144px,#05ff00 156px,#0dff00 168px,#18ff00 180px,#24ff00 192px,#32ff00 204px,#42ff00 216px,#52ff00 228px,#65ff00 240px,#79ff00 252px,#8eff00 264px,#a5ff00 276px,#beff00 288px,#d8ff00 300px,#f4ff00 312px,#ffed00 324px,#ffd400 336px,#ffbf00 348px,#ffac00 360px,#ff9c00 372px,#ff8e00 384px,#ff8100 396px,#ff7600 408px,#ff6c00 420px,#ff6300 432px,#ff5b00 444px,#ff5300 456px,#ff4d00 468px,#ff4700 480px)"></div><div style="top:42px;height:3px;width:480px;background:linear-gradient(90deg,#00ff0f 0px,#00ff0d 12px,#00ff0b 24px,#00ff09 36px,#00ff08 48px,#00ff06 60px,#00ff04 72px,#00ff03 84px,#00ff01 96px,#00ff00 108px,#00ff00 120px,#00ff00 132px,#00ff00 144px,#05ff00 156px,#0eff00 168px,#19ff00 180px,#26ff00 192px,#34ff00 204px,#44ff00 216px,#55ff00 228px,#68ff00 240px,#7cff00 252px,#92ff00 264px,#a9ff00 276px,#c3ff00 288px,#deff00 300px,#fbff00 312px,#ffe700 324px,#ffcf00 336px,#ffba00 348px,#ffa800 360px,#ff9800 372px,#ff8a00 384px,#ff7e00 396px,#ff7300 408px,#ff6900 420px,#ff6000 432px,#ff5800 444px,#ff5100 456px,#ff4b00 468px,#ff4500 480px)"></div><div style="top:45px;height:3px;width:480px;background:linear-gradient(90deg,#00ff10 0px,#00ff0e 12px,#00ff0c 24px,#00ff0b 36px,#00ff09 48px,#00ff07 60px,#00ff05 72px,#00ff03 84px,#00ff02 96px,#00ff00 108px,#00ff00 120px,#00ff00 132px,#00ff00 144px,#06ff00 156px,#10ff00 168px,#1bff00 180px,#28ff00 192px,#36ff00 204px,#46ff00 216px,#58ff00 228px,#6bff00 240px,#80ff00 252px,#96ff00 264px,#aeff00 276px,#c8ff00 288px,#e4ff00 300px,#fffd00 312px,#ffe100 324px,#ffca00 336px,#ffb500 348px,#ffa400 360px,#ff9400 372px,#ff8700 384px,#ff7b00 396px,#ff7000 408px,#ff6600 420px,#ff5e00 432px,#ff5600 444px,#ff4f00 456px,#ff4900 468px,#ff4300 480px)"></div><div style="top:48px;height:3px;width:480px;background:linear-gradient(90deg,#00ff11 0px,#00ff10 12px,#00ff0e 24px,#00ff0c 36px,#00ff0a 48px,#00ff08 60px,#00ff06 72px,#00ff04 84px,#00ff02 96px,#00ff01 108px,#00ff00 120px,#00ff00 132px,#00ff00 144px,#07ff00 156px,#11ff00 168px,#1cff00 180px,#2aff00 192px,#39ff00 204px,#49ff00 216px,#5bff00 228px,#6fff00 240px,#84ff00 252px,#9bff00 264px,#b3ff00 276px,#cdff00 288px,#eaff00 300px,#fff600 312px,#ffdb00 324px,#ffc400 336px,#ffb100 348px,#ff9f00 360px,#ff9000 372px,#ff8300 384px,#ff7700 396px,#ff6d00 408px,#ff6400 420px,#ff5b00 432px,#ff5400 444px,#ff4d00 456px,#ff4700 468px,#ff4100 480px)"></div><div style="top:51px;height:3px;width:480px;background:linear-gradient(90deg,#00ff13 0px,#00ff11 12px,#00ff0f 24px,#00ff0d 36px,#00ff0b 48px,#00ff09 60px,#00ff07 72px,#00ff05 84px,#00ff03 96px,#00ff02 108px,#00ff00 120px,#00ff00 132px,#01ff00 144px,#08ff00 156px,#12ff00 168px,#1eff00 180px,#2cff00 192px,#3bff00 204px,#4cff00 216px,#5eff00 228px,#72ff00 240px,#88ff00 252px,#9fff00 264px,#b8ff00 276px,#d3ff00 288px,#f0ff00 300px,#fff000 312px,#ffd600 324px,#ffbf00 336px,#ffac00 348px,#ff9b00 360px,#ff8d00 372px,#ff8000 384px,#ff7400 396px,#ff6a00 408px,#ff6100 420px,#ff5900 432px,#ff5100 444px,#ff4b00 456px,#ff4500 468px,#ff3f00 480px)"></div><div style="top:54px;height:3px;width:480px;background:linear-gradient(90deg,#00ff14 0px,#00ff12 12px,#00ff10 24px,#00ff0e 36px,#00ff0c 48px,#00ff0a 60px,#00ff08 72px,#00ff06 84px,#00ff04 96px,#00ff02 108px,#00ff01 120px,#00ff00 132px,#01ff00 144px,#09ff00 156px,#13ff00 168px,#20ff00 180px,#2eff00 192px,#3dff00 204px,#4eff00 216px,#61ff00 228px,#76ff00 240px,#8cff00 252px,#a4ff00 264px,#bdff00 276px,#d9ff00 288px,#f7ff00 300px,#ffea00 312px,#ffd000 324px,#ffba00 336px,#ffa800 348px,#ff9700 360px,#ff8900 372px,#ff7c00 384px,#ff7100 396px,#ff6700 408px,#ff5e00 420px,#ff5600 432px,#ff4f00 444px,#ff4900 456px,#ff4300 468px,#ff3d00 480px)"></div><div style="top:57px;height:3px;width:480px;background:linear-gradient(90deg,#00ff15 0px,#00ff13 12px,#00ff11 24px,#00ff0f 36px,#00ff0d 48px,#00ff0b 60px,#00ff09 72px,#00ff07 84px,#00ff05 96px,#00ff03 108px,#00ff02 120px,#00ff00 132px,#02ff00 144px,#0aff00 156px,#15ff00 168px,#21ff00 180px,#30ff00 192px,#40ff00 204px,#51ff00 216px,#64ff00 228px,#79ff00 240px,#90ff00 252px,#a8ff00 264px,#c3ff00 276px,#dfff00 288px,#fdff00 300px,#ffe300 312px,#ffcb00 324px,#ffb600 336px,#ffa300 348px,#ff9300 360px,#ff8500 372px,#ff7900 384px,#ff6e00 396px,#ff6500 408px,#ff5c00 420px,#ff5400 432px,#ff4d00 444px,#ff4700 456px,#ff4100 468px,#ff3c00 480px)"></div><div style="top:60px;height:3px;width:480px;background:linear-gradient(90deg,#00ff17 0px,#00ff15 12px,#00ff12 24px,#00ff10 36px,#00ff0e 48px,#00ff0c 60px,#00ff0a 72px,#00ff08 84px,#00ff06 96px,#00ff04 108px,#00ff02 120px,#00ff01 132px,#03ff00 144px,#0bff00 156px,#16ff00 168px,#23ff00 180px,#32ff00 192px,#42ff00 204px,#54ff00 216px,#68ff00 228px,#7dff00 240px,#94ff00 252px,#adff00 264px,#c8ff00 276px,#e5ff00 288px,#fffa00 300px,#ffdd00 312px,#ffc500 324px,#ffb100 336px,#ff9f00 348px,#ff9000 360px,#ff8200 372px,#ff7600 384px,#ff6b00 396px,#ff6200 408px,#ff5900 420px,#ff5200 432px,#ff4b00 444px,#ff4500 456px,#ff3f00 468px,#ff3a00 480px)"></div><div style="top:63px;height:3px;width:480px;background:linear-gradient(90deg,#00ff18 0px,#00ff16 12px,#00ff14 24px,#00ff12 36px,#00ff10 48px,#00ff0d 60px,#00ff0b 72px,#00ff09 84px,#00ff07 96px,#00ff05 108px,#00ff03 120px,#00ff02 132px,#03ff00 144px,#0cff00 156px,#18ff00 168px,#25ff00 180px,#34ff00 192px,#45ff00 204px,#57ff00 216px,#6bff00 228px,#81ff00 240px,#99ff00 252px,#b2ff00 264px,#ceff00 276px,#ecff00 288px,#fff300 300px,#ffd800 312px,#ffc000 324px,#ffac00 336px,#ff9b00 348px,#ff8c00 360px,#ff7f00 372px,#ff7300 384px,#ff6800 396px,#ff5f00 408px,#ff5700 420px,#ff4f00 432px,#ff4900 444px,#ff4300 456px,#ff3d00 468px,#ff3800 480px)"></div><div style="top:66px;height:3px;width:480px;background:linear-gradient(90deg,#00ff1a 0px,#00ff17 12px,#00ff15 24px,#00ff13 36px,#00ff11 48px,#00ff0f 60px,#00ff0c 72px,#00ff0a 84px,#00ff08 96px,#00ff06 108px,#00ff04 120px,#00ff02 132px,#04ff01 144px,#0dff00 156px,#19ff00 168px,#27ff00 180px,#36ff00 192px,#47ff00 204px,#5aff00 216px,#6fff00 228px,#85ff00 240px,#9eff00 252px,#b8ff00 264px,#d4ff00 276px,#f2ff00 288px,#ffed00 300px,#ffd200 312px,#ffbb00 324px,#ffa800 336px,#ff9700 348px,#ff8800 360px,#ff7b00 372px,#ff7000 384px,#ff6600 396px,#ff5d00 408px,#ff5400 420px,#ff4d00 432px,#ff4700 444px,#ff4100 456px,#ff3b00 468px,#ff3600 480px)"></div><div style="top:69px;height:3px;width:480px;background:linear-gradient(90deg,#00ff1b 0px,#00ff19 12px,#00ff17 24px,#00ff14 36px,#00ff12 48px,#00ff10 60px,#00ff0e 72px,#00ff0b 84px,#00ff09 96px,#00ff07 108px,#00ff05 120px,#00ff03 132px,#05ff01 144px,#0fff00 156px,#1bff00 168px,#29ff00 180px,#39ff00 192px,#4aff00 204px,#5dff00 216px,#73ff00 228px,#8aff00 240px,#a2ff00 252px,#bdff00 264px,#daff00 276px,#f9ff00 288px,#ffe600 300px,#ffcc00 312px,#ffb600 324px,#ffa300 336px,#ff9300 348px,#ff8400 360px,#ff7800 372px,#ff6d00 384px,#ff6300 396px,#ff5a00 408px,#ff5200 420px,#ff4b00 432px,#ff4500 444px,#ff3f00 456px,#ff3900 468px,#ff3500 480px)"></div><div style="top:72px;height:3px;width:480px;background:linear-gradient(90deg,#00ff1d 0px,#00ff1a 12px,#00ff18 24px,#00ff16 36px,#00ff14 48px,#00ff11 60px,#00ff0f 72px,#00ff0d 84px,#00ff0b 96px,#00ff08 108px,#00ff06 120px,#00ff04 132px,#06ff02 144px,#10ff01 156px,#1cff00 168px,#2bff00 180px,#3bff00 192px,#4dff00 204px,#61ff00 216px,#76ff00 228px,#8eff00 240px,#a7ff00 252px,#c3ff00 264px,#e0ff00 276px,#fffe00 288px,#ffe000 300px,#ffc700 312px,#ffb100 324px,#ff9f00 336px,#ff8f00 348px,#ff8100 360px,#ff7400 372px,#ff6a00 384px,#ff6000 396px,#ff5700 408px,#ff5000 420px,#ff4900 432px,#ff4300 444px,#ff3d00 456px,#ff3800 468px,#ff3300 480px)"></div><div style="top:75px;height:3px;width:480px;background:linear-gradient(90deg,#00ff1e 0px,#00ff1c 12px,#00ff1a 24px,#00ff17 36px,#00ff15 48px,#00ff13 60px,#00ff10 72px,#00ff0e 84px,#00ff0c 96px,#00ff0a 108px,#00ff07 120px,#00ff05 132px,#07ff03 144px,#11ff01 156px,#1eff00 168px,#2dff00 180px,#3eff00 192px,#50ff00 204px,#64ff00 216px,#7aff00 228px,#92ff00 240px,#acff00 252px,#c9ff00 264px,#e7ff00 276px,#fff700 288px,#ffda00 300px,#ffc100 312px,#ffac00 324px,#ff9a00 336px,#ff8b00 348px,#ff7d00 360px,#ff7100 372px,#ff6700 384px,#ff5d00 396px,#ff5500 408px,#ff4d00 420px,#ff4700 432px,#ff4000 444px,#ff3b00 456px,#ff3600 468px,#ff3100 480px)"></div><div style="top:78px;height:3px;width:480px;background:linear-gradient(90deg,#00ff20 0px,#00ff1e 12px,#00ff1b 24px,#00ff19 36px,#00ff17 48px,#00ff14 60px,#00ff12 72px,#00ff0f 84px,#00ff0d 96px,#00ff0b 108px,#00ff08 120px,#00ff06 132px,#08ff04 144px,#13ff02 156px,#20ff00 168px,#2fff00 180px,#40ff00 192px,#53ff00 204px,#68ff00 216px,#7eff00 228px,#97ff00 240px,#b2ff00 252px,#cfff00 264px,#eeff00 276px,#fff000 288px,#ffd400 300px,#ffbc00 312px,#ffa700 324px,#ff9600 336px,#ff8700 348px,#ff7a00 360px,#ff6e00 372px,#ff6400 384px,#ff5b00 396px,#ff5200 408px,#ff4b00 420px,#ff4400 432px,#ff3f00 444px,#ff3900 456px,#ff3400 468px,#ff3000 480px)"></div><div style="top:81px;height:3px;width:480px;background:linear-gradient(90deg,#00ff22 0px,#00ff1f 12px,#00ff1d 24px,#00ff1b 36px,#00ff18 48px,#00ff16 60px,#00ff13 72px,#00ff11 84px,#00ff0f 96px,#00ff0c 108px,#00ff0a 120px,#01ff07 132px,#09ff05 144px,#14ff03 156px,#22ff01 168px,#31ff00 180px,#43ff00 192px,#56ff00 204px,#6bff00 216px,#83ff00 228px,#9cff00 240px,#b7ff00 252px,#d5ff00 264px,#f5ff00 276px,#ffe900 288px,#ffce00 300px,#ffb600 312px,#ffa300 324px,#ff9200 336px,#ff8300 348px,#ff7600 360px,#ff6b00 372px,#ff6100 384px,#ff5800 396px,#ff5000 408px,#ff4900 420px,#ff4200 432px,#ff3d00 444px,#ff3700 456px,#ff3200 468px,#ff2e00 480px)"></div><div style="top:84px;height:3px;width:480px;background:linear-gradient(90deg,#00ff23 0px,#00ff21 12px,#00ff1f 24px,#00ff1c 36px,#00ff1a 48px,#00ff17 60px,#00ff15 72px,#00ff12 84px,#00ff10 96px,#00ff0e 108px,#00ff0b 120px,#01ff09 132px,#0aff06 144px,#16ff04 156px,#24ff02 168px,#34ff00 180px,#46ff00 192px,#59ff00 204px,#6fff00 216px,#87ff00 228px,#a1ff00 240px,#bdff00 252px,#dbff00 264px,#fcff00 276px,#ffe200 288px,#ffc800 300px,#ffb100 312px,#ff9e00 324px,#ff8e00 336px,#ff7f00 348px,#ff7300 360px,#ff6800 372px,#ff5e00 384px,#ff5500 396px,#ff4e00 408px,#ff4700 420px,#ff4000 432px,#ff3b00 444px,#ff3500 456px,#ff3100 468px,#ff2c00 480px)"></div><div style="top:87px;height:3px;width:480px;background:linear-gradient(90deg,#00ff25 0px,#00ff23 12px,#00ff20 24px,#00ff1e 36px,#00ff1c 48px,#00ff19 60px,#00ff17 72px,#00ff14 84px,#00ff12 96px,#00ff0f 108px,#00ff0c 120px,#02ff0a 132px,#0bff08 144px,#17ff05 156px,#26ff03 168px,#36ff01 180px,#48ff00 192px,#5dff00 204px,#73ff00 216px,#8cff00 228px,#a6ff00 240px,#c3ff00 252px,#e2ff00 264px,#fffb00 276px,#ffdc00 288px,#ffc200 300px,#ffac00 312px,#ff9a00 324px,#ff8a00 336px,#ff7c00 348px,#ff7000 360px,#ff6500 372px,#ff5b00 384px,#ff5300 396px,#ff4b00 408px,#ff4400 420px,#ff3e00 432px,#ff3900 444px,#ff3400 456px,#ff2f00 468px,#ff2b00 480px)"></div><div style="top:90px;height:3px;width:480px;background:linear-gradient(90deg,#00ff27 0px,#00ff25 12px,#00ff22 24px,#00ff20 36px,#00ff1d 48px,#00ff1b 60px,#00ff18 72px,#00ff16 84px,#00ff13 96px,#00ff11 108px,#00ff0e 120px,#03ff0b 132px,#0dff09 144px,#19ff06 156px,#28ff04 168px,#39ff02 180px,#4bff00 192px,#60ff00 204px,#77ff00 216px,#90ff00 228px,#abff00 240px,#c9ff00 252px,#e9ff00 264px,#fff300 276px,#ffd500 288px,#ffbc00 300px,#ffa700 312px,#ff9500 324px,#ff8600 336px,#ff7800 348px,#ff6c00 360px,#ff6200 372px,#ff5900 384px,#ff5000 396px,#ff4900 408px,#ff4200 420px,#ff3c00 432px,#ff3700 444px,#ff3200 456px,#ff2d00 468px,#ff2900 480px)"></div><div style="top:93px;height:3px;width:480px;background:linear-gradient(90deg,#00ff29 0px,#00ff26 12px,#00ff24 24px,#00ff22 36px,#00ff1f 48px,#00ff1d 60px,#00ff1a 72px,#00ff17 84px,#00ff15 96px,#00ff12 108px,#00ff0f 120px,#04ff0d 132px,#0eff0a 144px,#1bff08 156px,#2aff05 168px,#3bff03 180px,#4fff01 192px,#64ff00 204px,#7bff00 216px,#95ff00 228px,#b1ff00 240px,#cfff00 252px,#f0ff00 264px,#ffec00 276px,#ffcf00 288px,#ffb700 300px,#ffa200 312px,#ff9100 324px,#ff8200 336px,#ff7500 348px,#ff6900 360px,#ff5f00 372px,#ff5600 384px,#ff4e00 396px,#ff4700 408px,#ff4000 420px,#ff3a00 432px,#ff3500 444px,#ff3000 456px,#ff2c00 468px,#ff2800 480px)"></div><div style="top:96px;height:3px;width:480px;background:linear-gradient(90deg,#00ff2b 0px,#00ff28 12px,#00ff26 24px,#00ff24 36px,#00ff21 48px,#00ff1e 60px,#00ff1c 72px,#00ff19 84px,#00ff16 96px,#00ff14 108px,#00ff11 120px,#05ff0e 132px,#0fff0c 144px,#1dff09 156px,#2cff07 168px,#3eff04 180px,#52ff02 192px,#68ff00 204px,#80ff00 216px,#9aff00 228px,#b7ff00 240px,#d6ff00 252px,#f7ff00 264px,#ffe500 276px,#ffc900 288px,#ffb200 300px,#ff9e00 312px,#ff8d00 324px,#ff7e00 336px,#ff7100 348px,#ff6600 360px,#ff5c00 372px,#ff5300 384px,#ff4b00 396px,#ff4400 408px,#ff3e00 420px,#ff3800 432px,#ff3300 444px,#ff2f00 456px,#ff2a00 468px,#ff2600 480px)"></div><div style="top:99px;height:3px;width:480px;background:linear-gradient(90deg,#00ff2d 0px,#00ff2a 12px,#00ff28 24px,#00ff25 36px,#00ff23 48px,#00ff20 60px,#00ff1e 72px,#00ff1b 84px,#00ff18 96px,#00ff16 108px,#00ff13 120px,#06ff10 132px,#11ff0d 144px,#1eff0b 156px,#2eff08 168px,#41ff05 180px,#55ff03 192px,#6cff01 204px,#84ff00 216px,#9fff00 228px,#bdff00 240px,#ddff00 252px,#ffff00 264px,#ffde00 276px,#ffc300 288px,#ffac00 300px,#ff9900 312px,#ff8900 324px,#ff7a00 336px,#ff6e00 348px,#ff6300 360px,#ff5900 372px,#ff5100 384px,#ff4900 396px,#ff4200 408px,#ff3c00 420px,#ff3600 432px,#ff3100 444px,#ff2d00 456px,#ff2900 468px,#ff2500 480px)"></div><div style="top:102px;height:3px;width:480px;background:linear-gradient(90deg,#00ff2f 0px,#00ff2d 12px,#00ff2a 24px,#00ff28 36px,#00ff25 48px,#00ff22 60px,#00ff20 72px,#00ff1d 84px,#00ff1a 96px,#00ff17 108px,#00ff15 120px,#07ff12 132px,#12ff0f 144px,#20ff0c 156px,#31ff09 168px,#44ff07 180px,#59ff04 192px,#70ff02 204px,#89ff00 216px,#a5ff00 228px,#c3ff00 240px,#e4ff00 252px,#fff700 264px,#ffd700 276px,#ffbd00 288px,#ffa700 300px,#ff9400 312px,#ff8400 324px,#ff7700 336px,#ff6a00 348px,#ff6000 360px,#ff5600 372px,#ff4e00 384px,#ff4700 396px,#ff4000 408px,#ff3a00 420px,#ff3500 432px,#ff3000 444px,#ff2b00 456px,#ff2700 468px,#ff2400 480px)"></div><div style="top:105px;height:3px;width:480px;background:linear-gradient(90deg,#00ff31 0px,#00ff2f 12px,#00ff2c 24px,#00ff2a 36px,#00ff27 48px,#00ff24 60px,#00ff22 72px,#00ff1f 84px,#00ff1c 96px,#00ff19 108px,#00ff16 120px,#08ff14 132px,#14ff11 144px,#22ff0e 156px,#33ff0b 168px,#47ff08 180px,#5cff05 192px,#74ff03 204px,#8eff01 216px,#aaff00 228px,#c9ff00 240px,#ebff00 252px,#ffef00 264px,#ffd100 276px,#ffb800 288px,#ffa200 300px,#ff9000 312px,#ff8000 324px,#ff7300 336px,#ff6700 348px,#ff5d00 360px,#ff5400 372px,#ff4c00 384px,#ff4400 396px,#ff3e00 408px,#ff3800 420px,#ff3300 432px,#ff2e00 444px,#ff2a00 456px,#ff2600 468px,#ff2200 480px)"></div><div style="top:108px;height:3px;width:480px;background:linear-gradient(90deg,#00ff33 0px,#00ff31 12px,#00ff2e 24px,#00ff2c 36px,#00ff29 48px,#00ff27 60px,#00ff24 72px,#00ff21 84px,#00ff1e 96px,#00ff1b 108px,#00ff18 120px,#09ff15 132px,#15ff12 144px,#24ff0f 156px,#36ff0d 168px,#4aff0a 180px,#60ff07 192px,#78ff04 204px,#93ff02 216px,#b0ff00 228px,#d0ff00 240px,#f3ff00 252px,#ffe800 264px,#ffcb00 276px,#ffb200 288px,#ff9d00 300px,#ff8c00 312px,#ff7c00 324px,#ff6f00 336px,#ff6400 348px,#ff5a00 360px,#ff5100 372px,#ff4900 384px,#ff4200 396px,#ff3c00 408px,#ff3600 420px,#ff3100 432px,#ff2c00 444px,#ff2800 456px,#ff2400 468px,#ff2100 480px)"></div><div style="top:111px;height:3px;width:480px;background:linear-gradient(90deg,#00ff36 0px,#00ff33 12px,#00ff31 24px,#00ff2e 36px,#00ff2b 48px,#00ff29 60px,#00ff26 72px,#00ff23 84px,#00ff20 96px,#00ff1d 108px,#01ff1a 120px,#0aff17 132px,#17ff14 144px,#27ff11 156px,#39ff0e 168px,#4dff0b 180px,#64ff08 192px,#7dff05 204px,#98ff03 216px,#b6ff01 228px,#d7ff00 240px,#faff00 252px,#ffe100 264px,#ffc400 276px,#ffac00 288px,#ff9800 300px,#ff8700 312px,#ff7900 324px,#ff6c00 336px,#ff6100 348px,#ff5700 360px,#ff4e00 372px,#ff4700 384px,#ff4000 396px,#ff3a00 408px,#ff3400 420px,#ff2f00 432px,#ff2b00 444px,#ff2600 456px,#ff2300 468px,#ff1f00 480px)"></div><div style="top:114px;height:3px;width:480px;background:linear-gradient(90deg,#00ff38 0px,#00ff36 12px,#00ff33 24px,#00ff30 36px,#00ff2e 48px,#00ff2b 60px,#00ff28 72px,#00ff25 84px,#00ff22 96px,#00ff20 108px,#02ff1c 120px,#0bff19 132px,#19ff16 144px,#29ff13 156px,#3bff10 168px,#50ff0d 180px,#68ff0a 192px,#81ff07 204px,#9eff04 216px,#bcff02 228px,#deff00 240px,#fffb00 252px,#ffda00 264px,#ffbe00 276px,#ffa700 288px,#ff9400 300px,#ff8300 312px,#ff7500 324px,#ff6800 336px,#ff5e00 348px,#ff5400 360px,#ff4c00 372px,#ff4400 384px,#ff3e00 396px,#ff3800 408px,#ff3200 420px,#ff2d00 432px,#ff2900 444px,#ff2500 456px,#ff2100 468px,#ff1e00 480px)"></div><div style="top:117px;height:3px;width:480px;background:linear-gradient(90deg,#00ff3b 0px,#00ff38 12px,#00ff35 24px,#00ff33 36px,#00ff30 48px,#00ff2d 60px,#00ff2b 72px,#00ff28 84px,#00ff25 96px,#00ff22 108px,#02ff1f 120px,#0dff1c 132px,#1bff18 144px,#2bff15 156px,#3eff12 168px,#54ff0f 180px,#6cff0c 192px,#86ff08 204px,#a3ff05 216px,#c3ff03 228px,#e6ff00 240px,#fff300 252px,#ffd300 264px,#ffb800 276px,#ffa200 288px,#ff8f00 300px,#ff7f00 312px,#ff7100 324px,#ff6500 336px,#ff5b00 348px,#ff5100 360px,#ff4900 372px,#ff4200 384px,#ff3b00 396px,#ff3600 408px,#ff3000 420px,#ff2c00 432px,#ff2700 444px,#ff2300 456px,#ff2000 468px,#ff1d00 480px)"></div><div style="top:120px;height:3px;width:480px;background:linear-gradient(90deg,#00ff3d 0px,#00ff3b 12px,#00ff38 24px,#00ff35 36px,#00ff33 48px,#00ff30 60px,#00ff2d 72px,#00ff2a 84px,#00ff27 96px,#00ff24 108px,#03ff21 120px,#0eff1e 132px,#1dff1b 144px,#2eff17 156px,#41ff14 168px,#57ff11 180px,#70ff0d 192px,#8bff0a 204px,#a9ff07 216px,#caff04 228px,#edff01 240px,#ffeb00 252px,#ffcc00 264px,#ffb200 276px,#ff9d00 288px,#ff8a00 300px,#ff7b00 312px,#ff6d00 324px,#ff6200 336px,#ff5800 348px,#ff4f00 360px,#ff4700 372px,#ff4000 384px,#ff3900 396px,#ff3400 408px,#ff2e00 420px,#ff2a00 432px,#ff2600 444px,#ff2200 456px,#ff1f00 468px,#ff1b00 480px)"></div><div style="top:123px;height:3px;width:480px;background:linear-gradient(90deg,#00ff40 0px,#00ff3d 12px,#00ff3b 24px,#00ff38 36px,#00ff35 48px,#00ff32 60px,#00ff30 72px,#00ff2d 84px,#00ff2a 96px,#00ff27 108px,#04ff23 120px,#10ff20 132px,#1fff1d 144px,#30ff1a 156px,#45ff16 168px,#5bff13 180px,#75ff0f 192px,#90ff0c 204px,#afff09 216px,#d1ff06 228px,#f5ff03 240px,#ffe400 252px,#ffc600 264px,#ffad00 276px,#ff9800 288px,#ff8600 300px,#ff7700 312px,#ff6a00 324px,#ff5e00 336px,#ff5500 348px,#ff4c00 360px,#ff4400 372px,#ff3d00 384px,#ff3700 396px,#ff3200 408px,#ff2d00 420px,#ff2800 432px,#ff2400 444px,#ff2000 456px,#ff1d00 468px,#ff1a00 480px)"></div><div style="top:126px;height:3px;width:480px;background:linear-gradient(90deg,#00ff42 0px,#00ff40 12px,#00ff3d 24px,#00ff3b 36px,#00ff38 48px,#00ff35 60px,#00ff32 72px,#00ff2f 84px,#00ff2c 96px,#00ff29 108px,#05ff26 120px,#11ff23 132px,#21ff1f 144px,#33ff1c 156px,#48ff19 168px,#5fff15 180px,#79ff12 192px,#96ff0e 204px,#b5ff0b 216px,#d8ff07 228px,#feff04 240px,#ffdc01 252px,#ffbf00 264px,#ffa700 276px,#ff9300 288px,#ff8200 300px,#ff7300 312px,#ff6600 324px,#ff5b00 336px,#ff5200 348px,#ff4900 360px,#ff4200 372px,#ff3b00 384px,#ff3500 396px,#ff3000 408px,#ff2b00 420px,#ff2700 432px,#ff2300 444px,#ff1f00 456px,#ff1c00 468px,#ff1900 480px)"></div><div style="top:129px;height:3px;width:480px;background:linear-gradient(90deg,#00ff45 0px,#00ff43 12px,#00ff40 24px,#00ff3d 36px,#00ff3b 48px,#00ff38 60px,#00ff35 72px,#00ff32 84px,#00ff2f 96px,#00ff2c 108px,#06ff29 120px,#13ff25 132px,#23ff22 144px,#36ff1e 156px,#4bff1b 168px,#63ff17 180px,#7eff14 192px,#9cff10 204px,#bcff0d 216px,#e0ff09 228px,#fff805 240px,#ffd502 252px,#ffb900 264px,#ffa100 276px,#ff8e00 288px,#ff7d00 300px,#ff6f00 312px,#ff6300 324px,#ff5800 336px,#ff4f00 348px,#ff4700 360px,#ff3f00 372px,#ff3900 384px,#ff3300 396px,#ff2e00 408px,#ff2900 420px,#ff2500 432px,#ff2100 444px,#ff1e00 456px,#ff1a00 468px,#ff1800 480px)"></div><div style="top:132px;height:3px;width:480px;background:linear-gradient(90deg,#00ff48 0px,#00ff46 12px,#00ff43 24px,#00ff40 36px,#00ff3d 48px,#00ff3b 60px,#00ff38 72px,#00ff35 84px,#00ff32 96px,#00ff2e 108px,#07ff2b 120px,#15ff28 132px,#25ff24 144px,#39ff21 156px,#4fff1d 168px,#68ff1a 180px,#83ff16 192px,#a1ff12 204px,#c3ff0f 216px,#e8ff0b 228px,#ffef07 240px,#ffce03 252px,#ffb301 264px,#ff9c00 276px,#ff8900 288px,#ff7900 300px,#ff6b00 312px,#ff5f00 324px,#ff5500 336px,#ff4c00 348px,#ff4400 360px,#ff3d00 372px,#ff3700 384px,#ff3100 396px,#ff2c00 408px,#ff2700 420px,#ff2300 432px,#ff2000 444px,#ff1c00 456px,#ff1900 468px,#ff1600 480px)"></div><div style="top:135px;height:3px;width:480px;background:linear-gradient(90deg,#00ff4b 0px,#00ff49 12px,#00ff46 24px,#00ff43 36px,#00ff40 48px,#00ff3e 60px,#00ff3b 72px,#00ff38 84px,#00ff35 96px,#00ff31 108px,#09ff2e 120px,#17ff2b 132px,#28ff27 144px,#3cff24 156px,#52ff20 168px,#6cff1c 180px,#88ff19 192px,#a8ff15 204px,#caff11 216px,#f0ff0d 228px,#ffe708 240px,#ffc704 252px,#ffad02 264px,#ff9700 276px,#ff8500 288px,#ff7500 300px,#ff6800 312px,#ff5c00 324px,#ff5200 336px,#ff4900 348px,#ff4100 360px,#ff3b00 372px,#ff3500 384px,#ff2f00 396px,#ff2a00 408px,#ff2600 420px,#ff2200 432px,#ff1e00 444px,#ff1b00 456px,#ff1800 468px,#ff1500 480px)"></div><div style="top:138px;height:3px;width:480px;background:linear-gradient(90deg,#00ff4e 0px,#00ff4c 12px,#00ff49 24px,#00ff46 36px,#00ff44 48px,#00ff41 60px,#00ff3e 72px,#00ff3b 84px,#00ff38 96px,#00ff34 108px,#0aff31 120px,#19ff2e 132px,#2aff2a 144px,#3fff27 156px,#56ff23 168px,#71ff1f 180px,#8eff1b 192px,#aeff17 204px,#d2ff13 216px,#f9ff0f 228px,#ffdf0a 240px,#ffc006 252px,#ffa703 264px,#ff9200 276px,#ff8000 288px,#ff7100 300px,#ff6400 312px,#ff5900 324px,#ff4f00 336px,#ff4700 348px,#ff3f00 360px,#ff3800 372px,#ff3200 384px,#ff2d00 396px,#ff2800 408px,#ff2400 420px,#ff2000 432px,#ff1d00 444px,#ff1a00 456px,#ff1700 468px,#ff1400 480px)"></div><div style="top:141px;height:3px;width:480px;background:linear-gradient(90deg,#00ff51 0px,#00ff4f 12px,#00ff4c 24px,#00ff49 36px,#00ff47 48px,#00ff44 60px,#00ff41 72px,#00ff3e 84px,#00ff3b 96px,#01ff37 108px,#0cff34 120px,#1bff31 132px,#2dff2d 144px,#42ff2a 156px,#5aff26 168px,#75ff22 180px,#93ff1e 192px,#b5ff1a 204px,#d9ff16 216px,#fffc12 228px,#ffd70c 240px,#ffba07 252px,#ffa104 264px,#ff8d01 276px,#ff7c00 288px,#ff6d00 300px,#ff6000 312px,#ff5600 324px,#ff4c00 336px,#ff4400 348px,#ff3d00 360px,#ff3600 372px,#ff3000 384px,#ff2b00 396px,#ff2700 408px,#ff2200 420px,#ff1f00 432px,#ff1b00 444px,#ff1800 456px,#ff1500 468px,#ff1300 480px)"></div><div style="top:144px;height:3px;width:480px;background:linear-gradient(90deg,#00ff55 0px,#00ff52 12px,#00ff4f 24px,#00ff4d 36px,#00ff4a 48px,#00ff47 60px,#00ff44 72px,#00ff41 84px,#00ff3e 96px,#02ff3b 108px,#0dff37 120px,#1dff34 132px,#30ff30 144px,#46ff2d 156px,#5eff29 168px,#7aff25 180px,#99ff21 192px,#bcff1d 204px,#e2ff19 216px,#fff314 228px,#ffd00d 240px,#ffb308 252px,#ff9b05 264px,#ff8802 276px,#ff7700 288px,#ff6900 300px,#ff5d00 312px,#ff5200 324px,#ff4900 336px,#ff4100 348px,#ff3a00 360px,#ff3400 372px,#ff2e00 384px,#ff2900 396px,#ff2500 408px,#ff2100 420px,#ff1d00 432px,#ff1a00 444px,#ff1700 456px,#ff1400 468px,#ff1200 480px)"></div><div style="top:147px;height:3px;width:480px;background:linear-gradient(90deg,#00ff58 0px,#00ff55 12px,#00ff53 24px,#00ff50 36px,#00ff4d 48px,#00ff4b 60px,#00ff48 72px,#00ff45 84px,#00ff41 96px,#03ff3e 108px,#0fff3b 120px,#1fff37 132px,#33ff34 144px,#49ff30 156px,#63ff2c 168px,#80ff28 180px,#a0ff24 192px,#c3ff20 204px,#eaff1c 216px,#ffeb16 228px,#ffc80f 240px,#ffad0a 252px,#ff9606 264px,#ff8303 276px,#ff7301 288px,#ff6500 300px,#ff5a00 312px,#ff4f00 324px,#ff4700 336px,#ff3f00 348px,#ff3800 360px,#ff3200 372px,#ff2c00 384px,#ff2800 396px,#ff2300 408px,#ff1f00 420px,#ff1c00 432px,#ff1900 444px,#ff1600 456px,#ff1300 468px,#ff1100 480px)"></div><div style="top:150px;height:3px;width:480px;background:linear-gradient(90deg,#00ff5c 0px,#00ff59 12px,#00ff56 24px,#00ff54 36px,#00ff51 48px,#00ff4e 60px,#00ff4b 72px,#00ff48 84px,#00ff45 96px,#04ff42 108px,#10ff3e 120px,#21ff3b 132px,#36ff37 144px,#4dff33 156px,#67ff30 168px,#85ff2c 180px,#a6ff27 192px,#cbff23 204px,#f3ff1f 216px,#ffe217 228px,#ffc111 240px,#ffa70b 252px,#ff9107 264px,#ff7e04 276px,#ff6f02 288px,#ff6200 300px,#ff5600 312px,#ff4c00 324px,#ff4400 336px,#ff3c00 348px,#ff3600 360px,#ff3000 372px,#ff2a00 384px,#ff2600 396px,#ff2200 408px,#ff1e00 420px,#ff1a00 432px,#ff1700 444px,#ff1400 456px,#ff1200 468px,#ff1000 480px)"></div><div style="top:153px;height:3px;width:480px;background:linear-gradient(90deg,#00ff5f 0px,#00ff5d 12px,#00ff5a 24px,#00ff57 36px,#00ff55 48px,#00ff52 60px,#00ff4f 72px,#00ff4c 84px,#00ff49 96px,#05ff45 108px,#12ff42 120px,#24ff3e 132px,#39ff3b 144px,#51ff37 156px,#6cff33 168px,#8bff2f 180px,#adff2b 192px,#d3ff27 204px,#fcff22 216px,#ffda19 228px,#ffba12 240px,#ffa10d 252px,#ff8b08 264px,#ff7a05 276px,#ff6b03 288px,#ff5e01 300px,#ff5300 312px,#ff4900 324px,#ff4100 336px,#ff3a00 348px,#ff3300 360px,#ff2e00 372px,#ff2900 384px,#ff2400 396px,#ff2000 408px,#ff1c00 420px,#ff1900 432px,#ff1600 444px,#ff1300 456px,#ff1100 468px,#ff0f00 480px)"></div><div style="top:156px;height:3px;width:480px;background:linear-gradient(90deg,#00ff63 0px,#00ff60 12px,#00ff5e 24px,#00ff5b 36px,#00ff58 48px,#00ff56 60px,#00ff53 72px,#00ff50 84px,#00ff4c 96px,#06ff49 108px,#14ff46 120px,#26ff42 132px,#3cff3f 144px,#55ff3b 156px,#71ff37 168px,#91ff33 180px,#b4ff2f 192px,#dbff2a 204px,#fff825 216px,#ffd21b 228px,#ffb414 240px,#ff9b0e 252px,#ff860a 264px,#ff7506 276px,#ff6703 288px,#ff5a01 300px,#ff5000 312px,#ff4700 324px,#ff3e00 336px,#ff3700 348px,#ff3100 360px,#ff2c00 372px,#ff2700 384px,#ff2200 396px,#ff1e00 408px,#ff1b00 420px,#ff1800 432px,#ff1500 444px,#ff1200 456px,#ff1000 468px,#ff0e00 480px)"></div><div style="top:159px;height:3px;width:480px;background:linear-gradient(90deg,#00ff67 0px,#00ff64 12px,#00ff62 24px,#00ff5f 36px,#00ff5c 48px,#00ff5a 60px,#00ff57 72px,#00ff54 84px,#00ff50 96px,#07ff4d 108px,#16ff4a 120px,#29ff46 132px,#40ff43 144px,#59ff3f 156px,#76ff3b 168px,#97ff37 180px,#bbff32 192px,#e4ff2e 204px,#ffef27 216px,#ffca1d 228px,#ffad16 240px,#ff9510 252px,#ff810b 264px,#ff7107 276px,#ff6304 288px,#ff5702 300px,#ff4d01 312px,#ff4400 324px,#ff3c00 336px,#ff3500 348px,#ff2f00 360px,#ff2a00 372px,#ff2500 384px,#ff2100 396px,#ff1d00 408px,#ff1900 420px,#ff1600 432px,#ff1300 444px,#ff1100 456px,#ff0f00 468px,#ff0d00 480px)"></div><div style="top:162px;height:3px;width:480px;background:linear-gradient(90deg,#00ff6b 0px,#00ff68 12px,#00ff66 24px,#00ff63 36px,#00ff61 48px,#00ff5e 60px,#00ff5b 72px,#00ff58 84px,#00ff55 96px,#09ff51 108px,#18ff4e 120px,#2cff4a 132px,#43ff47 144px,#5eff43 156px,#7cff3f 168px,#9dff3b 180px,#c3ff37 192px,#edff32 204px,#ffe629 216px,#ffc31f 228px,#ffa617 240px,#ff8f11 252px,#ff7c0c 264px,#ff6d08 276px,#ff5f05 288px,#ff5303 300px,#ff4a01 312px,#ff4100 324px,#ff3900 336px,#ff3300 348px,#ff2d00 360px,#ff2800 372px,#ff2300 384px,#ff1f00 396px,#ff1b00 408px,#ff1800 420px,#ff1500 432px,#ff1200 444px,#ff1000 456px,#ff0e00 468px,#ff0c00 480px)"></div><div style="top:165px;height:3px;width:480px;background:linear-gradient(90deg,#00ff6f 0px,#00ff6d 12px,#00ff6a 24px,#00ff67 36px,#00ff65 48px,#00ff62 60px,#00ff5f 72px,#00ff5c 84px,#00ff59 96px,#0aff56 108px,#1bff52 120px,#2fff4f 132px,#47ff4b 144px,#62ff47 156px,#81ff43 168px,#a4ff3f 180px,#cbff3b 192px,#f6ff36 204px,#ffdd2b 216px,#ffbb21 228px,#ffa019 240px,#ff8a13 252px,#ff780e 264px,#ff680a 276px,#ff5b06 288px,#ff5004 300px,#ff4702 312px,#ff3e00 324px,#ff3700 336px,#ff3000 348px,#ff2b00 360px,#ff2600 372px,#ff2100 384px,#ff1d00 396px,#ff1a00 408px,#ff1600 420px,#ff1400 432px,#ff1100 444px,#ff0f00 456px,#ff0d00 468px,#ff0b00 480px)"></div><div style="top:168px;height:3px;width:480px;background:linear-gradient(90deg,#00ff73 0px,#00ff71 12px,#00ff6e 24px,#00ff6c 36px,#00ff69 48px,#00ff66 60px,#00ff64 72px,#00ff61 84px,#00ff5e 96px,#0cff5a 108px,#1dff57 120px,#32ff53 132px,#4bff50 144px,#67ff4c 156px,#87ff48 168px,#abff44 180px,#d4ff3f 192px,#fffe3b 204px,#ffd42d 216px,#ffb423 228px,#ff9a1b 240px,#ff8514 252px,#ff730f 264px,#ff640b 276px,#ff5807 288px,#ff4d05 300px,#ff4402 312px,#ff3c01 324px,#ff3400 336px,#ff2e00 348px,#ff2900 360px,#ff2400 372px,#ff2000 384px,#ff1c00 396px,#ff1800 408px,#ff1500 420px,#ff1200 432px,#ff1000 444px,#ff0e00 456px,#ff0c00 468px,#ff0a00 480px)"></div><div style="top:171px;height:3px;width:480px;background:linear-gradient(90deg,#00ff78 0px,#00ff75 12px,#00ff73 24px,#00ff70 36px,#00ff6e 48px,#00ff6b 60px,#00ff68 72px,#00ff65 84px,#01ff62 96px,#0eff5f 108px,#1fff5c 120px,#35ff58 132px,#4fff55 144px,#6cff51 156px,#8eff4d 168px,#b3ff49 180px,#ddff44 192px,#fff43d 204px,#ffcc2f 216px,#ffad25 228px,#ff941c 240px,#ff7f16 252px,#ff6e10 264px,#ff600c 276px,#ff5408 288px,#ff4a06 300px,#ff4103 312px,#ff3901 324px,#ff3200 336px,#ff2c00 348px,#ff2700 360px,#ff2200 372px,#ff1e00 384px,#ff1a00 396px,#ff1700 408px,#ff1400 420px,#ff1100 432px,#ff0f00 444px,#ff0d00 456px,#ff0b00 468px,#ff0900 480px)"></div><div style="top:174px;height:3px;width:480px;background:linear-gradient(90deg,#00ff7c 0px,#00ff7a 12px,#00ff78 24px,#00ff75 36px,#00ff73 48px,#00ff70 60px,#00ff6d 72px,#00ff6a 84px,#02ff67 96px,#0fff64 108px,#22ff61 120px,#39ff5d 132px,#53ff5a 144px,#72ff56 156px,#94ff52 168px,#bbff4e 180px,#e6ff49 192px,#ffea3f 204px,#ffc431 216px,#ffa626 228px,#ff8e1e 240px,#ff7a17 252px,#ff6a12 264px,#ff5c0d 276px,#ff5109 288px,#ff4706 300px,#ff3e04 312px,#ff3602 324px,#ff3001 336px,#ff2a00 348px,#ff2500 360px,#ff2000 372px,#ff1c00 384px,#ff1900 396px,#ff1500 408px,#ff1300 420px,#ff1000 432px,#ff0e00 444px,#ff0b00 456px,#ff0a00 468px,#ff0800 480px)"></div><div style="top:177px;height:3px;width:480px;background:linear-gradient(90deg,#00ff81 0px,#00ff7f 12px,#00ff7c 24px,#00ff7a 36px,#00ff78 48px,#00ff75 60px,#00ff72 72px,#00ff6f 84px,#03ff6c 96px,#11ff69 108px,#25ff66 120px,#3cff63 132px,#58ff5f 144px,#77ff5b 156px,#9bff57 168px,#c3ff53 180px,#f0ff4f 192px,#ffe041 204px,#ffbc33 216px,#ffa028 228px,#ff8820 240px,#ff7519 252px,#ff6613 264px,#ff580e 276px,#ff4d0b 288px,#ff4307 300px,#ff3b05 312px,#ff3403 324px,#ff2d01 336px,#ff2800 348px,#ff2300 360px,#ff1f00 372px,#ff1b00 384px,#ff1700 396px,#ff1400 408px,#ff1100 420px,#ff0f00 432px,#ff0c00 444px,#ff0a00 456px,#ff0900 468px,#ff0700 480px)"></div><div style="top:180px;height:3px;width:480px;background:linear-gradient(90deg,#00ff86 0px,#00ff84 12px,#00ff82 24px,#00ff7f 36px,#00ff7d 48px,#00ff7a 60px,#00ff78 72px,#00ff75 84px,#04ff72 96px,#13ff6f 108px,#28ff6c 120px,#40ff68 132px,#5dff65 144px,#7dff61 156px,#a2ff5d 168px,#ccff59 180px,#faff55 192px,#ffd744 204px,#ffb535 216px,#ff992a 228px,#ff8321 240px,#ff711a 252px,#ff6114 264px,#ff5510 276px,#ff4a0c 288px,#ff4008 300px,#ff3806 312px,#ff3104 324px,#ff2b02 336px,#ff2601 348px,#ff2100 360px,#ff1d00 372px,#ff1900 384px,#ff1600 396px,#ff1300 408px,#ff1000 420px,#ff0e00 432px,#ff0b00 444px,#ff0900 456px,#ff0800 468px,#ff0600 480px)"></div><div style="top:183px;height:3px;width:480px;background:linear-gradient(90deg,#00ff8b 0px,#00ff89 12px,#00ff87 24px,#00ff85 36px,#00ff82 48px,#00ff80 60px,#00ff7d 72px,#00ff7a 84px,#05ff77 96px,#16ff74 108px,#2bff71 120px,#44ff6e 132px,#62ff6b 144px,#84ff67 156px,#aaff63 168px,#d5ff5f 180px,#fff959 192px,#ffce46 204px,#ffad37 216px,#ff932c 228px,#ff7d23 240px,#ff6c1c 252px,#ff5d16 264px,#ff5111 276px,#ff470d 288px,#ff3d09 300px,#ff3607 312px,#ff2f04 324px,#ff2902 336px,#ff2401 348px,#ff1f00 360px,#ff1b00 372px,#ff1700 384px,#ff1400 396px,#ff1100 408px,#ff0f00 420px,#ff0c00 432px,#ff0a00 444px,#ff0900 456px,#ff0700 468px,#ff0500 480px)"></div><div style="top:186px;height:3px;width:480px;background:linear-gradient(90deg,#00ff90 0px,#00ff8e 12px,#00ff8c 24px,#00ff8a 36px,#00ff88 48px,#00ff85 60px,#00ff83 72px,#00ff80 84px,#07ff7d 96px,#18ff7a 108px,#2eff77 120px,#48ff74 132px,#67ff71 144px,#8aff6d 156px,#b2ff69 168px,#dfff65 180px,#ffee5b 192px,#ffc648 204px,#ffa639 216px,#ff8d2e 228px,#ff7825 240px,#ff671d 252px,#ff5917 264px,#ff4d12 276px,#ff430e 288px,#ff3b0a 300px,#ff3307 312px,#ff2d05 324px,#ff2703 336px,#ff2202 348px,#ff1d00 360px,#ff1900 372px,#ff1600 384px,#ff1300 396px,#ff1000 408px,#ff0e00 420px,#ff0b00 432px,#ff0900 444px,#ff0800 456px,#ff0600 468px,#ff0500 480px)"></div><div style="top:189px;height:3px;width:480px;background:linear-gradient(90deg,#00ff96 0px,#00ff94 12px,#00ff92 24px,#00ff90 36px,#00ff8e 48px,#00ff8b 60px,#00ff89 72px,#00ff86 84px,#08ff84 96px,#1aff81 108px,#31ff7e 120px,#4dff7b 132px,#6dff77 144px,#91ff74 156px,#baff70 168px,#e9ff6c 180px,#ffe45d 192px,#ffbd4a 204px,#ff9f3b 216px,#ff8730 228px,#ff7326 240px,#ff631f 252px,#ff5518 264px,#ff4a13 276px,#ff400f 288px,#ff380b 300px,#ff3108 312px,#ff2a06 324px,#ff2504 336px,#ff2002 348px,#ff1c01 360px,#ff1800 372px,#ff1400 384px,#ff1100 396px,#ff0f00 408px,#ff0c00 420px,#ff0a00 432px,#ff0800 444px,#ff0700 456px,#ff0500 468px,#ff0400 480px)"></div><div style="top:192px;height:3px;width:480px;background:linear-gradient(90deg,#00ff9c 0px,#00ff9a 12px,#00ff98 24px,#00ff96 36px,#00ff94 48px,#00ff91 60px,#00ff8f 72px,#00ff8d 84px,#0aff8a 96px,#1dff87 108px,#35ff84 120px,#52ff81 132px,#73ff7e 144px,#98ff7b 156px,#c3ff77 168px,#f4ff73 180px,#ffda5f 192px,#ffb54c 204px,#ff983d 216px,#ff8131 228px,#ff6e28 240px,#ff5f20 252px,#ff511a 264px,#ff4614 276px,#ff3d10 288px,#ff350c 300px,#ff2e09 312px,#ff2807 324px,#ff2305 336px,#ff1e03 348px,#ff1a01 360px,#ff1600 372px,#ff1300 384px,#ff1000 396px,#ff0e00 408px,#ff0b00 420px,#ff0900 432px,#ff0700 444px,#ff0600 456px,#ff0400 468px,#ff0300 480px)"></div><div style="top:195px;height:3px;width:480px;background:linear-gradient(90deg,#00ffa2 0px,#00ffa0 12px,#00ff9e 24px,#00ff9c 36px,#00ff9a 48px,#00ff98 60px,#00ff96 72px,#00ff93 84px,#0cff91 96px,#20ff8e 108px,#39ff8b 120px,#56ff89 132px,#79ff85 144px,#a0ff82 156px,#cdff7f 168px,#ffff7b 180px,#ffd161 192px,#ffad4e 204px,#ff923f 216px,#ff7b33 228px,#ff6929 240px,#ff5a22 252px,#ff4e1b 264px,#ff4316 276px,#ff3a11 288px,#ff320d 300px,#ff2c0a 312px,#ff2608 324px,#ff2105 336px,#ff1c03 348px,#ff1802 360px,#ff1501 372px,#ff1200 384px,#ff0f00 396px,#ff0c00 408px,#ff0a00 420px,#ff0800 432px,#ff0700 444px,#ff0500 456px,#ff0400 468px,#ff0300 480px)"></div><div style="top:198px;height:3px;width:480px;background:linear-gradient(90deg,#00ffa8 0px,#00ffa6 12px,#00ffa4 24px,#00ffa3 36px,#00ffa1 48px,#00ff9f 60px,#00ff9d 72px,#00ff9a 84px,#0eff98 96px,#23ff95 108px,#3dff93 120px,#5cff90 132px,#7fff8d 144px,#a8ff8a 156px,#d6ff87 168px,#fff47d 180px,#ffc864 192px,#ffa650 204px,#ff8b41 216px,#ff7635 228px,#ff642b 240px,#ff5623 252px,#ff4a1c 264px,#ff4017 276px,#ff3712 288px,#ff300e 300px,#ff290b 312px,#ff2408 324px,#ff1f06 336px,#ff1a04 348px,#ff1702 360px,#ff1301 372px,#ff1000 384px,#ff0e00 396px,#ff0b00 408px,#ff0900 420px,#ff0700 432px,#ff0600 444px,#ff0400 456px,#ff0300 468px,#ff0200 480px)"></div><div style="top:201px;height:3px;width:480px;background:linear-gradient(90deg,#00ffae 0px,#00ffad 12px,#00ffab 24px,#00ffa9 36px,#00ffa8 48px,#00ffa6 60px,#00ffa4 72px,#01ffa2 84px,#10ff9f 96px,#26ff9d 108px,#41ff9b 120px,#61ff98 132px,#86ff95 144px,#b1ff92 156px,#e1ff8f 168px,#ffe97f 180px,#ffbf66 192px,#ff9e52 204px,#ff8543 216px,#ff7037 228px,#ff602d 240px,#ff5225 252px,#ff461e 264px,#ff3d18 276px,#ff3413 288px,#ff2d0f 300px,#ff270c 312px,#ff2209 324px,#ff1d07 336px,#ff1905 348px,#ff1503 360px,#ff1202 372px,#ff0f01 384px,#ff0c00 396px,#ff0a00 408px,#ff0800 420px,#ff0600 432px,#ff0500 444px,#ff0400 456px,#ff0200 468px,#ff0100 480px)"></div><div style="top:204px;height:3px;width:480px;background:linear-gradient(90deg,#00ffb5 0px,#00ffb4 12px,#00ffb2 24px,#00ffb1 36px,#00ffaf 48px,#00ffad 60px,#00ffab 72px,#02ffa9 84px,#12ffa7 96px,#29ffa5 108px,#46ffa3 120px,#67ffa0 132px,#8eff9e 144px,#baff9b 156px,#ecff98 168px,#ffde82 180px,#ffb668 192px,#ff9754 204px,#ff7f45 216px,#ff6b38 228px,#ff5b2e 240px,#ff4e26 252px,#ff431f 264px,#ff3a19 276px,#ff3215 288px,#ff2b11 300px,#ff250d 312px,#ff200a 324px,#ff1b08 336px,#ff1705 348px,#ff1304 360px,#ff1002 372px,#ff0e01 384px,#ff0b00 396px,#ff0900 408px,#ff0700 420px,#ff0600 432px,#ff0400 444px,#ff0300 456px,#ff0200 468px,#ff0100 480px)"></div><div style="top:207px;height:3px;width:480px;background:linear-gradient(90deg,#00ffbc 0px,#00ffbb 12px,#00ffb9 24px,#00ffb8 36px,#00ffb6 48px,#00ffb5 60px,#00ffb3 72px,#03ffb1 84px,#15ffb0 96px,#2dffae 108px,#4affac 120px,#6dffa9 132px,#95ffa7 144px,#c3ffa4 156px,#f8ffa2 168px,#ffd484 180px,#ffae6a 192px,#ff9056 204px,#ff7946 216px,#ff663a 228px,#ff5730 240px,#ff4a27 252px,#ff4020 264px,#ff371b 276px,#ff2f16 288px,#ff2812 300px,#ff220e 312px,#ff1e0b 324px,#ff1908 336px,#ff1506 348px,#ff1204 360px,#ff0f03 372px,#ff0c01 384px,#ff0a00 396px,#ff0800 408px,#ff0600 420px,#ff0500 432px,#ff0300 444px,#ff0200 456px,#ff0100 468px,#ff0000 480px)"></div><div style="top:210px;height:3px;width:480px;background:linear-gradient(90deg,#00ffc3 0px,#00ffc2 12px,#00ffc1 24px,#00ffc0 36px,#00ffbe 48px,#00ffbd 60px,#00ffbb 72px,#05ffba 84px,#18ffb8 96px,#31ffb6 108px,#4fffb5 120px,#74ffb3 132px,#9dffb1 144px,#cdffae 156px,#fffaa8 168px,#ffca86 180px,#ffa56c 192px,#ff8958 204px,#ff7348 216px,#ff613c 228px,#ff5331 240px,#ff4629 252px,#ff3c22 264px,#ff341c 276px,#ff2c17 288px,#ff2613 300px,#ff200f 312px,#ff1c0c 324px,#ff1709 336px,#ff1407 348px,#ff1005 360px,#ff0e03 372px,#ff0b02 384px,#ff0901 396px,#ff0700 408px,#ff0500 420px,#ff0400 432px,#ff0300 444px,#ff0200 456px,#ff0100 468px,#ff0000 480px)"></div><div style="top:213px;height:3px;width:480px;background:linear-gradient(90deg,#00ffcb 0px,#00ffca 12px,#00ffc9 24px,#00ffc8 36px,#00ffc7 48px,#00ffc5 60px,#00ffc4 72px,#07ffc3 84px,#1affc1 96px,#35ffc0 108px,#55ffbe 120px,#7affbd 132px,#a6ffbb 144px,#d8ffb9 156px,#ffeeaa 168px,#ffc088 180px,#ff9e6e 192px,#ff835a 204px,#ff6e4a 216px,#ff5c3d 228px,#ff4e33 240px,#ff432a 252px,#ff3923 264px,#ff311d 276px,#ff2a18 288px,#ff2414 300px,#ff1e10 312px,#ff1a0d 324px,#ff160a 336px,#ff1208 348px,#ff0f06 360px,#ff0c04 372px,#ff0a02 384px,#ff0801 396px,#ff0600 408px,#ff0400 420px,#ff0300 432px,#ff0200 444px,#ff0100 456px,#ff0000 468px,#ff0000 480px)"></div><div style="top:216px;height:3px;width:480px;background:linear-gradient(90deg,#00ffd3 0px,#00ffd2 12px,#00ffd1 24px,#00ffd0 36px,#00ffcf 48px,#00ffce 60px,#00ffcd 72px,#08ffcc 84px,#1dffcb 96px,#39ffca 108px,#5affc8 120px,#82ffc7 132px,#afffc6 144px,#e4ffc4 156px,#ffe2ac 168px,#ffb78a 180px,#ff9670 192px,#ff7c5c 204px,#ff684c 216px,#ff583f 228px,#ff4a34 240px,#ff3f2c 252px,#ff3624 264px,#ff2e1e 276px,#ff2719 288px,#ff2115 300px,#ff1c11 312px,#ff180e 324px,#ff140b 336px,#ff1108 348px,#ff0e06 360px,#ff0b04 372px,#ff0903 384px,#ff0702 396px,#ff0501 408px,#ff0400 420px,#ff0200 432px,#ff0100 444px,#ff0000 456px,#ff0000 468px,#ff0000 480px)"></div><div style="top:219px;height:3px;width:480px;background:linear-gradient(90deg,#00ffdb 0px,#00ffda 12px,#00ffda 24px,#00ffd9 36px,#00ffd8 48px,#00ffd8 60px,#00ffd7 72px,#0affd6 84px,#21ffd5 96px,#3dffd4 108px,#60ffd3 120px,#89ffd2 132px,#b9ffd1 144px,#f0ffd0 156px,#ffd7ae 168px,#ffae8c 180px,#ff8f72 192px,#ff765e 204px,#ff634d 216px,#ff5341 228px,#ff4636 240px,#ff3c2d 252px,#ff3326 264px,#ff2b20 276px,#ff251a 288px,#ff1f16 300px,#ff1a12 312px,#ff160f 324px,#ff120c 336px,#ff0f09 348px,#ff0c07 360px,#ff0a05 372px,#ff0803 384px,#ff0602 396px,#ff0401 408px,#ff0300 420px,#ff0200 432px,#ff0100 444px,#ff0000 456px,#ff0000 468px,#ff0000 480px)"></div><div style="top:222px;height:3px;width:480px;background:linear-gradient(90deg,#00ffe4 0px,#00ffe3 12px,#00ffe3 24px,#00ffe2 36px,#00ffe2 48px,#00ffe1 60px,#00ffe1 72px,#0cffe0 84px,#24ffe0 96px,#42ffdf 108px,#67ffdf 120px,#92ffde 132px,#c3ffdd 144px,#fdffdc 156px,#ffccb0 168px,#ffa58e 180px,#ff8774 192px,#ff705f 204px,#ff5e4f 216px,#ff4f42 228px,#ff4337 240px,#ff382f 252px,#ff3027 264px,#ff2821 276px,#ff221b 288px,#ff1d17 300px,#ff1813 312px,#ff140f 324px,#ff110c 336px,#ff0e0a 348px,#ff0b08 360px,#ff0906 372px,#ff0704 384px,#ff0503 396px,#ff0301 408px,#ff0201 420px,#ff0100 432px,#ff0000 444px,#ff0000 456px,#ff0000 468px,#ff0000 480px)"></div><div style="top:225px;height:3px;width:480px;background:linear-gradient(90deg,#00ffec 0px,#00ffec 12px,#00ffec 24px,#00ffec 36px,#00ffec 48px,#00ffec 60px,#00ffec 72px,#0fffeb 84px,#28ffeb 96px,#47ffeb 108px,#6effeb 120px,#9affeb 132px,#cfffea 144px,#fff4e0 156px,#ffc2b2 168px,#ff9d8f 180px,#ff8075 192px,#ff6a61 204px,#ff5951 216px,#ff4b44 228px,#ff3f39 240px,#ff3530 252px,#ff2d28 264px,#ff2622 276px,#ff201d 288px,#ff1b18 300px,#ff1614 312px,#ff1310 324px,#ff0f0d 336px,#ff0c0b 348px,#ff0a08 360px,#ff0806 372px,#ff0605 384px,#ff0403 396px,#ff0302 408px,#ff0101 420px,#ff0100 432px,#ff0000 444px,#ff0000 456px,#ff0000 468px,#ff0000 480px)"></div><div style="top:228px;height:3px;width:480px;background:linear-gradient(90deg,#00fff6 0px,#00fff6 12px,#00fff6 24px,#00fff6 36px,#00fff6 48px,#00fff7 60px,#00fff7 72px,#11fff7 84px,#2cfff7 96px,#4dfff7 108px,#75fff8 120px,#a4fff8 132px,#dafff8 144px,#ffe7e1 156px,#ffb8b3 168px,#ff9591 180px,#ff7a77 192px,#ff6563 204px,#ff5453 216px,#ff4645 228px,#ff3b3a 240px,#ff3231 252px,#ff2a2a 264px,#ff2323 276px,#ff1e1e 288px,#ff1919 300px,#ff1515 312px,#ff1111 324px,#ff0e0e 336px,#ff0b0b 348px,#ff0909 360px,#ff0607 372px,#ff0505 384px,#ff0304 396px,#ff0202 408px,#ff0101 420px,#ff0000 432px,#ff0000 444px,#ff0000 456px,#ff0000 468px,#ff0000 480px)"></div><div style="top:231px;height:3px;width:480px;background:linear-gradient(90deg,#00feff 0px,#00feff 12px,#00feff 24px,#00fdff 36px,#00fdff 48px,#00fcff 60px,#01fbff 72px,#14fbff 84px,#2ffaff 96px,#51faff 108px,#79f9ff 120px,#a9f8ff 132px,#e0f7ff 144px,#ffdbe3 156px,#ffaeb5 168px,#ff8d93 180px,#ff7379 192px,#ff5f65 204px,#ff4f54 216px,#ff4247 228px,#ff383c 240px,#ff2f33 252px,#ff272b 264px,#ff2124 276px,#ff1b1f 288px,#ff171a 300px,#ff1316 312px,#ff0f12 324px,#ff0c0f 336px,#ff0a0c 348px,#ff070a 360px,#ff0508 372px,#ff0406 384px,#ff0204 396px,#ff0103 408px,#ff0002 420px,#ff0001 432px,#ff0000 444px,#ff0000 456px,#ff0000 468px,#ff0000 480px)"></div><div style="top:234px;height:3px;width:480px;background:linear-gradient(90deg,#00f5ff 0px,#00f4ff 12px,#00f3ff 24px,#00f2ff 36px,#00f2ff 48px,#00f1ff 60px,#02f0ff 72px,#16efff 84px,#31eeff 96px,#52edff 108px,#7becff 120px,#a9eaff 132px,#dfe9ff 144px,#ffcfe4 156px,#ffa5b7 168px,#ff8595 180px,#ff6d7b 192px,#ff5a66 204px,#ff4b56 216px,#ff3e48 228px,#ff343d 240px,#ff2c34 252px,#ff252c 264px,#ff1e26 276px,#ff1920 288px,#ff151b 300px,#ff1117 312px,#ff0e13 324px,#ff0b10 336px,#ff080d 348px,#ff060a 360px,#ff0408 372px,#ff0306 384px,#ff0205 396px,#ff0103 408px,#ff0002 420px,#ff0001 432px,#ff0000 444px,#ff0000 456px,#ff0000 468px,#ff0000 480px)"></div><div style="top:237px;height:3px;width:480px;background:linear-gradient(90deg,#00ebff 0px,#00eaff 12px,#00e9ff 24px,#00e8ff 36px,#00e7ff 48px,#00e6ff 60px,#04e5ff 72px,#17e3ff 84px,#33e2ff 96px,#54e1ff 108px,#7cdfff 120px,#aaddff 132px,#dfdcff 144px,#ffc4e5 156px,#ff9cb8 168px,#ff7e96 180px,#ff677c 192px,#ff5568 204px,#ff4657 216px,#ff3b4a 228px,#ff313f 240px,#ff2936 252px,#ff222e 264px,#ff1c27 276px,#ff1721 288px,#ff131c 300px,#ff0f18 312px,#ff0c14 324px,#ff0a11 336px,#ff070e 348px,#ff050b 360px,#ff0409 372px,#ff0207 384px,#ff0105 396px,#ff0004 408px,#ff0003 420px,#ff0002 432px,#ff0001 444px,#ff0000 456px,#ff0000 468px,#ff0000 480px)"></div><div style="top:240px;height:3px;width:480px;background:linear-gradient(90deg,#00e2ff 0px,#00e1ff 12px,#00e0ff 24px,#00deff 36px,#00ddff 48px,#00dcff 60px,#05daff 72px,#19d8ff 84px,#34d7ff 96px,#56d5ff 108px,#7dd3ff 120px,#aad1ff 132px,#decfff 144px,#ffb9e6 156px,#ff93ba 168px,#ff7798 180px,#ff617e 192px,#ff506a 204px,#ff4259 216px,#ff374c 228px,#ff2e40 240px,#ff2637 252px,#ff1f2f 264px,#ff1a28 276px,#ff1522 288px,#ff111d 300px,#ff0e19 312px,#ff0b15 324px,#ff0812 336px,#ff060f 348px,#ff040c 360px,#ff030a 372px,#ff0108 384px,#ff0006 396px,#ff0004 408px,#ff0003 420px,#ff0002 432px,#ff0001 444px,#ff0000 456px,#ff0000 468px,#ff0000 480px)"></div><div style="top:243px;height:3px;width:480px;background:linear-gradient(90deg,#00d9ff 0px,#00d8ff 12px,#00d6ff 24px,#00d5ff 36px,#00d3ff 48px,#00d2ff 60px,#07d0ff 72px,#1bceff 84px,#36ccff 96px,#57caff 108px,#7ec8ff 120px,#abc5ff 132px,#dec3ff 144px,#ffaee8 156px,#ff8bbb 168px,#ff709a 180px,#ff5b80 192px,#ff4b6b 204px,#ff3e5b 216px,#ff334d 228px,#ff2a42 240px,#ff2338 252px,#ff1d30 264px,#ff1829 276px,#ff1323 288px,#ff0f1e 300px,#ff0c1a 312px,#ff0916 324px,#ff0712 336px,#ff050f 348px,#ff030d 360px,#ff020a 372px,#ff0108 384px,#ff0007 396px,#ff0005 408px,#ff0004 420px,#ff0002 432px,#ff0001 444px,#ff0001 456px,#ff0000 468px,#ff0000 480px)"></div><div style="top:246px;height:3px;width:480px;background:linear-gradient(90deg,#00d0ff 0px,#00cfff 12px,#00cdff 24px,#00ccff 36px,#00caff 48px,#00c8ff 60px,#08c6ff 72px,#1dc4ff 84px,#38c1ff 96px,#59bfff 108px,#7fbdff 120px,#abbaff 132px,#deb7ff 144px,#ffa4e9 156px,#ff83bd 168px,#ff699b 180px,#ff5682 192px,#ff466d 204px,#ff3a5c 216px,#ff304f 228px,#ff2743 240px,#ff203a 252px,#ff1b31 264px,#ff162a 276px,#ff1124 288px,#ff0e1f 300px,#ff0b1b 312px,#ff0817 324px,#ff0613 336px,#ff0410 348px,#ff020d 360px,#ff010b 372px,#ff0009 384px,#ff0007 396px,#ff0005 408px,#ff0004 420px,#ff0003 432px,#ff0002 444px,#ff0001 456px,#ff0000 468px,#ff0000 480px)"></div><div style="top:249px;height:3px;width:480px;background:linear-gradient(90deg,#00c8ff 0px,#00c6ff 12px,#00c5ff 24px,#00c3ff 36px,#00c1ff 48px,#00bfff 60px,#0abcff 72px,#1fbaff 84px,#3ab7ff 96px,#5ab5ff 108px,#80b2ff 120px,#acafff 132px,#ddacff 144px,#ff9bea 156px,#ff7bbe 168px,#ff639d 180px,#ff5083 192px,#ff426f 204px,#ff365e 216px,#ff2c50 228px,#ff2445 240px,#ff1e3b 252px,#ff1833 264px,#ff142c 276px,#ff1026 288px,#ff0c20 300px,#ff091c 312px,#ff0718 324px,#ff0514 336px,#ff0311 348px,#ff020e 360px,#ff010c 372px,#ff000a 384px,#ff0008 396px,#ff0006 408px,#ff0005 420px,#ff0003 432px,#ff0002 444px,#ff0001 456px,#ff0000 468px,#ff0000 480px)"></div><div style="top:252px;height:3px;width:480px;background:linear-gradient(90deg,#00c0ff 0px,#00beff 12px,#00bcff 24px,#00baff 36px,#00b8ff 48px,#00b6ff 60px,#0bb3ff 72px,#20b1ff 84px,#3baeff 96px,#5babff 108px,#81a8ff 120px,#aca5ff 132px,#dda1ff 144px,#ff91eb 156px,#ff73c0 168px,#ff5d9f 180px,#ff4b85 192px,#ff3d70 204px,#ff325f 216px,#ff2951 228px,#ff2246 240px,#ff1b3c 252px,#ff1634 264px,#ff122d 276px,#ff0e27 288px,#ff0b21 300px,#ff081d 312px,#ff0619 324px,#ff0415 336px,#ff0212 348px,#ff010f 360px,#ff000c 372px,#ff000a 384px,#ff0008 396px,#ff0007 408px,#ff0005 420px,#ff0004 432px,#ff0003 444px,#ff0002 456px,#ff0001 468px,#ff0000 480px)"></div><div style="top:255px;height:3px;width:480px;background:linear-gradient(90deg,#00b8ff 0px,#00b6ff 12px,#00b4ff 24px,#00b2ff 36px,#00afff 48px,#00adff 60px,#0daaff 72px,#22a8ff 84px,#3da5ff 96px,#5da1ff 108px,#829eff 120px,#ac9bff 132px,#dd97ff 144px,#ff88ec 156px,#ff6cc1 168px,#ff57a0 180px,#ff4686 192px,#ff3972 204px,#ff2f61 216px,#ff2653 228px,#ff1f47 240px,#ff193e 252px,#ff1435 264px,#ff102e 276px,#ff0c28 288px,#ff0922 300px,#ff071e 312px,#ff0419 324px,#ff0316 336px,#ff0113 348px,#ff0010 360px,#ff000d 372px,#ff000b 384px,#ff0009 396px,#ff0007 408px,#ff0006 420px,#ff0004 432px,#ff0003 444px,#ff0002 456px,#ff0001 468px,#ff0000 480px)"></div><div style="top:258px;height:3px;width:480px;background:linear-gradient(90deg,#00b1ff 0px,#00aeff 12px,#00acff 24px,#00aaff 36px,#00a7ff 48px,#00a5ff 60px,#0ea2ff 72px,#249fff 84px,#3e9cff 96px,#5e98ff 108px,#8395ff 120px,#ad91ff 132px,#dc8dff 144px,#ff80ed 156px,#ff65c3 168px,#ff51a2 180px,#ff4288 192px,#ff3573 204px,#ff2b62 216px,#ff2354 228px,#ff1c49 240px,#ff173f 252px,#ff1236 264px,#ff0e2f 276px,#ff0b29 288px,#ff0823 300px,#ff051f 312px,#ff031a 324px,#ff0217 336px,#ff0113 348px,#ff0010 360px,#ff000e 372px,#ff000c 384px,#ff000a 396px,#ff0008 408px,#ff0006 420px,#ff0005 432px,#ff0003 444px,#ff0002 456px,#ff0001 468px,#ff0001 480px)"></div><div style="top:261px;height:3px;width:480px;background:linear-gradient(90deg,#00a9ff 0px,#00a7ff 12px,#00a5ff 24px,#00a2ff 36px,#009fff 48px,#019dff 60px,#109aff 72px,#2596ff 84px,#4093ff 96px,#5f90ff 108px,#848cff 120px,#ad88ff 132px,#dc84ff 144px,#ff77ee 156px,#ff5fc4 168px,#ff4ca3 180px,#ff3d89 192px,#ff3175 204px,#ff2864 216px,#ff2056 228px,#ff1a4a 240px,#ff1440 252px,#ff1038 264px,#ff0c30 276px,#ff092a 288px,#ff0624 300px,#ff0420 312px,#ff021b 324px,#ff0118 336px,#ff0014 348px,#ff0011 360px,#ff000f 372px,#ff000c 384px,#ff000a 396px,#ff0008 408px,#ff0007 420px,#ff0005 432px,#ff0004 444px,#ff0003 456px,#ff0002 468px,#ff0001 480px)"></div><div style="top:264px;height:3px;width:480px;background:linear-gradient(90deg,#00a2ff 0px,#00a0ff 12px,#009dff 24px,#009aff 36px,#0098ff 48px,#0295ff 60px,#1192ff 72px,#278eff 84px,#418bff 96px,#6187ff 108px,#8584ff 120px,#ad80ff 132px,#dc7bff 144px,#ff70f0 156px,#ff58c5 168px,#ff46a5 180px,#ff388b 192px,#ff2d76 204px,#ff2465 216px,#ff1d57 228px,#ff174b 240px,#ff1241 252px,#ff0e39 264px,#ff0a31 276px,#ff082b 288px,#ff0525 300px,#ff0321 312px,#ff021c 324px,#ff0018 336px,#ff0015 348px,#ff0012 360px,#ff000f 372px,#ff000d 384px,#ff000b 396px,#ff0009 408px,#ff0007 420px,#ff0006 432px,#ff0004 444px,#ff0003 456px,#ff0002 468px,#ff0001 480px)"></div><div style="top:267px;height:3px;width:480px;background:linear-gradient(90deg,#009bff 0px,#0099ff 12px,#0096ff 24px,#0093ff 36px,#0090ff 48px,#038dff 60px,#138aff 72px,#2887ff 84px,#4383ff 96px,#627fff 108px,#857bff 120px,#ae77ff 132px,#db73ff 144px,#ff68f1 156px,#ff52c7 168px,#ff41a6 180px,#ff348c 192px,#ff2a78 204px,#ff2167 216px,#ff1a59 228px,#ff154d 240px,#ff1043 252px,#ff0c3a 264px,#ff0933 276px,#ff062c 288px,#ff0426 300px,#ff0222 312px,#ff011d 324px,#ff0019 336px,#ff0016 348px,#ff0013 360px,#ff0010 372px,#ff000e 384px,#ff000b 396px,#ff0009 408px,#ff0008 420px,#ff0006 432px,#ff0005 444px,#ff0004 456px,#ff0003 468px,#ff0002 480px)"></div><div style="top:270px;height:3px;width:480px;background:linear-gradient(90deg,#0095ff 0px,#0092ff 12px,#008fff 24px,#008cff 36px,#0089ff 48px,#0486ff 60px,#1483ff 72px,#2a7fff 84px,#447cff 96px,#6378ff 108px,#8674ff 120px,#ae6fff 132px,#db6bff 144px,#ff61f2 156px,#ff4cc8 168px,#ff3ca7 180px,#ff308e 192px,#ff2679 204px,#ff1e68 216px,#ff185a 228px,#ff124e 240px,#ff0e44 252px,#ff0a3b 264px,#ff0734 276px,#ff052d 288px,#ff0327 300px,#ff0122 312px,#ff001e 324px,#ff001a 336px,#ff0017 348px,#ff0014 360px,#ff0011 372px,#ff000e 384px,#ff000c 396px,#ff000a 408px,#ff0008 420px,#ff0007 432px,#ff0005 444px,#ff0004 456px,#ff0003 468px,#ff0002 480px)"></div><div style="top:273px;height:3px;width:480px;background:linear-gradient(90deg,#008eff 0px,#008bff 12px,#0088ff 24px,#0085ff 36px,#0082ff 48px,#057fff 60px,#167cff 72px,#2c78ff 84px,#4674ff 96px,#6470ff 108px,#876cff 120px,#ae68ff 132px,#db63ff 144px,#ff5af2 156px,#ff46c9 168px,#ff37a9 180px,#ff2c8f 192px,#ff237b 204px,#ff1b6a 216px,#ff155b 228px,#ff104f 240px,#ff0c45 252px,#ff093c 264px,#ff0635 276px,#ff042e 288px,#ff0228 300px,#ff0023 312px,#ff001f 324px,#ff001b 336px,#ff0017 348px,#ff0014 360px,#ff0011 372px,#ff000f 384px,#ff000d 396px,#ff000b 408px,#ff0009 420px,#ff0007 432px,#ff0006 444px,#ff0004 456px,#ff0003 468px,#ff0002 480px)"></div><div style="top:276px;height:3px;width:480px;background:linear-gradient(90deg,#0088ff 0px,#0085ff 12px,#0082ff 24px,#007fff 36px,#007cff 48px,#0678ff 60px,#1775ff 72px,#2d71ff 84px,#476dff 96px,#6569ff 108px,#8865ff 120px,#af60ff 132px,#da5cff 144px,#ff53f3 156px,#ff41ca 168px,#ff33aa 180px,#ff2891 192px,#ff1f7c 204px,#ff186b 216px,#ff135d 228px,#ff0e51 240px,#ff0a46 252px,#ff073e 264px,#ff0436 276px,#ff022f 288px,#ff012a 300px,#ff0024 312px,#ff0020 324px,#ff001c 336px,#ff0018 348px,#ff0015 360px,#ff0012 372px,#ff0010 384px,#ff000d 396px,#ff000b 408px,#ff0009 420px,#ff0008 432px,#ff0006 444px,#ff0005 456px,#ff0004 468px,#ff0003 480px)"></div><div style="top:279px;height:3px;width:480px;background:linear-gradient(90deg,#0082ff 0px,#007fff 12px,#007cff 24px,#0079ff 36px,#0075ff 48px,#0872ff 60px,#196eff 72px,#2f6aff 84px,#4966ff 96px,#6762ff 108px,#895eff 120px,#af59ff 132px,#da55ff 144px,#ff4cf4 156px,#ff3bcb 168px,#ff2eac 180px,#ff2492 192px,#ff1c7d 204px,#ff166c 216px,#ff105e 228px,#ff0c52 240px,#ff0848 252px,#ff063f 264px,#ff0337 276px,#ff0130 288px,#ff002b 300px,#ff0025 312px,#ff0021 324px,#ff001d 336px,#ff0019 348px,#ff0016 360px,#ff0013 372px,#ff0010 384px,#ff000e 396px,#ff000c 408px,#ff000a 420px,#ff0008 432px,#ff0007 444px,#ff0005 456px,#ff0004 468px,#ff0003 480px)"></div><div style="top:282px;height:3px;width:480px;background:linear-gradient(90deg,#007cff 0px,#0079ff 12px,#0076ff 24px,#0072ff 36px,#006fff 48px,#096cff 60px,#1a68ff 72px,#3064ff 84px,#4a60ff 96px,#685cff 108px,#8957ff 120px,#af53ff 132px,#da4eff 144px,#ff46f5 156px,#ff36cd 168px,#ff2aad 180px,#ff2193 192px,#ff197f 204px,#ff136e 216px,#ff0e5f 228px,#ff0a53 240px,#ff0749 252px,#ff0440 264px,#ff0238 276px,#ff0131 288px,#ff002c 300px,#ff0026 312px,#ff0022 324px,#ff001e 336px,#ff001a 348px,#ff0017 360px,#ff0014 372px,#ff0011 384px,#ff000f 396px,#ff000d 408px,#ff000b 420px,#ff0009 432px,#ff0007 444px,#ff0006 456px,#ff0005 468px,#ff0004 480px)"></div><div style="top:285px;height:3px;width:480px;background:linear-gradient(90deg,#0076ff 0px,#0073ff 12px,#0070ff 24px,#006dff 36px,#0069ff 48px,#0a65ff 60px,#1c62ff 72px,#325eff 84px,#4b5aff 96px,#6956ff 108px,#8a51ff 120px,#b04cff 132px,#da48ff 144px,#ff40f6 156px,#ff31ce 168px,#ff26ae 180px,#ff1d95 192px,#ff1680 204px,#ff106f 216px,#ff0c61 228px,#ff0854 240px,#ff054a 252px,#ff0341 264px,#ff0139 276px,#ff0032 288px,#ff002d 300px,#ff0027 312px,#ff0023 324px,#ff001e 336px,#ff001b 348px,#ff0017 360px,#ff0014 372px,#ff0012 384px,#ff000f 396px,#ff000d 408px,#ff000b 420px,#ff0009 432px,#ff0008 444px,#ff0006 456px,#ff0005 468px,#ff0004 480px)"></div><div style="top:288px;height:3px;width:480px;background:linear-gradient(90deg,#0071ff 0px,#006dff 12px,#006aff 24px,#0067ff 36px,#0063ff 48px,#0c60ff 60px,#1d5cff 72px,#3358ff 84px,#4c54ff 96px,#6a50ff 108px,#8b4bff 120px,#b046ff 132px,#d942ff 144px,#ff3bf7 156px,#ff2dcf 168px,#ff22af 180px,#ff1a96 192px,#ff1381 204px,#ff0e70 216px,#ff0a62 228px,#ff0656 240px,#ff044b 252px,#ff0242 264px,#ff003a 276px,#ff0034 288px,#ff002e 300px,#ff0028 312px,#ff0023 324px,#ff001f 336px,#ff001c 348px,#ff0018 360px,#ff0015 372px,#ff0012 384px,#ff0010 396px,#ff000e 408px,#ff000c 420px,#ff000a 432px,#ff0008 444px,#ff0007 456px,#ff0006 468px,#ff0004 480px)"></div><div style="top:291px;height:3px;width:480px;background:linear-gradient(90deg,#006bff 0px,#0068ff 12px,#0065ff 24px,#0061ff 36px,#015eff 48px,#0d5aff 60px,#1f56ff 72px,#3452ff 84px,#4e4eff 96px,#6b4aff 108px,#8c45ff 120px,#b041ff 132px,#d93cff 144px,#ff35f8 156px,#ff28d0 168px,#ff1eb1 180px,#ff1797 192px,#ff1183 204px,#ff0c72 216px,#ff0863 228px,#ff0557 240px,#ff034c 252px,#ff0143 264px,#ff003b 276px,#ff0035 288px,#ff002f 300px,#ff0029 312px,#ff0024 324px,#ff0020 336px,#ff001c 348px,#ff0019 360px,#ff0016 372px,#ff0013 384px,#ff0011 396px,#ff000e 408px,#ff000c 420px,#ff000a 432px,#ff0009 444px,#ff0007 456px,#ff0006 468px,#ff0005 480px)"></div><div style="top:294px;height:3px;width:480px;background:linear-gradient(90deg,#0066ff 0px,#0063ff 12px,#005fff 24px,#005cff 36px,#0158ff 48px,#0e55ff 60px,#2051ff 72px,#364dff 84px,#4f49ff 96px,#6c44ff 108px,#8c40ff 120px,#b03bff 132px,#d936ff 144px,#ff30f9 156px,#ff24d1 168px,#ff1bb2 180px,#ff1499 192px,#ff0e84 204px,#ff0a73 216px,#ff0664 228px,#ff0358 240px,#ff014e 252px,#ff0045 264px,#ff003d 276px,#ff0036 288px,#ff002f 300px,#ff002a 312px,#ff0025 324px,#ff0021 336px,#ff001d 348px,#ff001a 360px,#ff0017 372px,#ff0014 384px,#ff0011 396px,#ff000f 408px,#ff000d 420px,#ff000b 432px,#ff0009 444px,#ff0008 456px,#ff0006 468px,#ff0005 480px)"></div><div style="top:297px;height:3px;width:480px;background:linear-gradient(90deg,#0061ff 0px,#005eff 12px,#005aff 24px,#0057ff 36px,#0253ff 48px,#0f4fff 60px,#214bff 72px,#3747ff 84px,#5043ff 96px,#6d3fff 108px,#8d3aff 120px,#b136ff 132px,#d931ff 144px,#ff2bfa 156px,#ff20d2 168px,#ff17b3 180px,#ff119a 192px,#ff0c85 204px,#ff0874 216px,#ff0566 228px,#ff0259 240px,#ff004f 252px,#ff0046 264px,#ff003e 276px,#ff0037 288px,#ff0030 300px,#ff002b 312px,#ff0026 324px,#ff0022 336px,#ff001e 348px,#ff001a 360px,#ff0017 372px,#ff0014 384px,#ff0012 396px,#ff0010 408px,#ff000d 420px,#ff000c 432px,#ff000a 444px,#ff0008 456px,#ff0007 468px,#ff0006 480px)"></div><div style="top:300px;height:3px;width:480px;background:linear-gradient(90deg,#005cff 0px,#0059ff 12px,#0055ff 24px,#0052ff 36px,#034eff 48px,#114aff 60px,#2346ff 72px,#3842ff 84px,#513eff 96px,#6e3aff 108px,#8e35ff 120px,#b131ff 132px,#d82cff 144px,#ff26fa 156px,#ff1cd3 168px,#ff14b4 180px,#ff0e9b 192px,#ff0987 204px,#ff0675 216px,#ff0367 228px,#ff015b 240px,#ff0050 252px,#ff0047 264px,#ff003f 276px,#ff0038 288px,#ff0031 300px,#ff002c 312px,#ff0027 324px,#ff0023 336px,#ff001f 348px,#ff001b 360px,#ff0018 372px,#ff0015 384px,#ff0013 396px,#ff0010 408px,#ff000e 420px,#ff000c 432px,#ff000a 444px,#ff0009 456px,#ff0007 468px,#ff0006 480px)"></div><div style="top:303px;height:3px;width:480px;background:linear-gradient(90deg,#0057ff 0px,#0054ff 12px,#0050ff 24px,#004dff 36px,#0449ff 48px,#1245ff 60px,#2441ff 72px,#3a3dff 84px,#5339ff 96px,#6f35ff 108px,#8e30ff 120px,#b12cff 132px,#d827ff 144px,#ff22fb 156px,#ff18d4 168px,#ff11b6 180px,#ff0c9d 192px,#ff0788 204px,#ff0477 216px,#ff0268 228px,#ff005c 240px,#ff0051 252px,#ff0048 264px,#ff0040 276px,#ff0039 288px,#ff0032 300px,#ff002d 312px,#ff0028 324px,#ff0024 336px,#ff0020 348px,#ff001c 360px,#ff0019 372px,#ff0016 384px,#ff0013 396px,#ff0011 408px,#ff000f 420px,#ff000d 432px,#ff000b 444px,#ff0009 456px,#ff0008 468px,#ff0006 480px)"></div><div style="top:306px;height:3px;width:480px;background:linear-gradient(90deg,#0053ff 0px,#004fff 12px,#004cff 24px,#0048ff 36px,#0545ff 48px,#1341ff 60px,#253dff 72px,#3b39ff 84px,#5435ff 96px,#7030ff 108px,#8f2cff 120px,#b127ff 132px,#d823ff 144px,#ff1dfc 156px,#ff15d5 168px,#ff0eb7 180px,#ff099e 192px,#ff0589 204px,#ff0378 216px,#ff0169 228px,#ff005d 240px,#ff0052 252px,#ff0049 264px,#ff0041 276px,#ff003a 288px,#ff0033 300px,#ff002e 312px,#ff0029 324px,#ff0024 336px,#ff0020 348px,#ff001d 360px,#ff0019 372px,#ff0017 384px,#ff0014 396px,#ff0011 408px,#ff000f 420px,#ff000d 432px,#ff000b 444px,#ff000a 456px,#ff0008 468px,#ff0007 480px)"></div><div style="top:309px;height:3px;width:480px;background:linear-gradient(90deg,#004eff 0px,#004bff 12px,#0047ff 24px,#0044ff 36px,#0640ff 48px,#153cff 60px,#2738ff 72px,#3c34ff 84px,#5530ff 96px,#702cff 108px,#8f27ff 120px,#b223ff 132px,#d81eff 144px,#ff19fd 156px,#ff11d6 168px,#ff0cb8 180px,#ff079f 192px,#ff048a 204px,#ff0179 216px,#ff006b 228px,#ff005e 240px,#ff0053 252px,#ff004a 264px,#ff0042 276px,#ff003b 288px,#ff0034 300px,#ff002f 312px,#ff002a 324px,#ff0025 336px,#ff0021 348px,#ff001e 360px,#ff001a 372px,#ff0017 384px,#ff0015 396px,#ff0012 408px,#ff0010 420px,#ff000e 432px,#ff000c 444px,#ff000a 456px,#ff0009 468px,#ff0007 480px)"></div><div style="top:312px;height:3px;width:480px;background:linear-gradient(90deg,#004aff 0px,#0046ff 12px,#0043ff 24px,#003fff 36px,#073cff 48px,#1638ff 60px,#2834ff 72px,#3d30ff 84px,#562cff 96px,#7128ff 108px,#9023ff 120px,#b21fff 132px,#d71aff 144px,#ff15fd 156px,#ff0ed7 168px,#ff09b9 180px,#ff05a0 192px,#ff028c 204px,#ff007a 216px,#ff006c 228px,#ff005f 240px,#ff0055 252px,#ff004b 264px,#ff0043 276px,#ff003c 288px,#ff0035 300px,#ff0030 312px,#ff002b 324px,#ff0026 336px,#ff0022 348px,#ff001e 360px,#ff001b 372px,#ff0018 384px,#ff0015 396px,#ff0013 408px,#ff0010 420px,#ff000e 432px,#ff000d 444px,#ff000b 456px,#ff0009 468px,#ff0008 480px)"></div><div style="top:315px;height:3px;width:480px;background:linear-gradient(90deg,#0046ff 0px,#0042ff 12px,#003fff 24px,#003bff 36px,#0937ff 48px,#1734ff 60px,#2930ff 72px,#3f2cff 84px,#5728ff 96px,#7223ff 108px,#911fff 120px,#b21bff 132px,#d716ff 144px,#ff12fe 156px,#ff0bd8 168px,#ff07ba 180px,#ff03a1 192px,#ff018d 204px,#ff007c 216px,#ff006d 228px,#ff0060 240px,#ff0056 252px,#ff004c 264px,#ff0044 276px,#ff003d 288px,#ff0036 300px,#ff0031 312px,#ff002b 324px,#ff0027 336px,#ff0023 348px,#ff001f 360px,#ff001c 372px,#ff0019 384px,#ff0016 396px,#ff0013 408px,#ff0011 420px,#ff000f 432px,#ff000d 444px,#ff000b 456px,#ff000a 468px,#ff0008 480px)"></div><div style="top:318px;height:3px;width:480px;background:linear-gradient(90deg,#0041ff 0px,#003eff 12px,#003bff 24px,#0037ff 36px,#0a33ff 48px,#1830ff 60px,#2b2cff 72px,#4028ff 84px,#5824ff 96px,#7320ff 108px,#911bff 120px,#b217ff 132px,#d713ff 144px,#ff0eff 156px,#ff09d9 168px,#ff05bb 180px,#ff02a2 192px,#ff008e 204px,#ff007d 216px,#ff006e 228px,#ff0062 240px,#ff0057 252px,#ff004d 264px,#ff0045 276px,#ff003e 288px,#ff0037 300px,#ff0031 312px,#ff002c 324px,#ff0028 336px,#ff0024 348px,#ff0020 360px,#ff001c 372px,#ff0019 384px,#ff0017 396px,#ff0014 408px,#ff0012 420px,#ff0010 432px,#ff000e 444px,#ff000c 456px,#ff000a 468px,#ff0009 480px)"></div><div style="top:321px;height:3px;width:480px;background:linear-gradient(90deg,#003eff 0px,#003aff 12px,#0037ff 24px,#0033ff 36px,#0b2fff 48px,#1a2cff 60px,#2c28ff 72px,#4124ff 84px,#5920ff 96px,#741cff 108px,#9218ff 120px,#b314ff 132px,#d70fff 144px,#fe0bff 156px,#ff06da 168px,#ff03bc 180px,#ff00a4 192px,#ff008f 204px,#ff007e 216px,#ff006f 228px,#ff0063 240px,#ff0058 252px,#ff004e 264px,#ff0046 276px,#ff003f 288px,#ff0038 300px,#ff0032 312px,#ff002d 324px,#ff0029 336px,#ff0024 348px,#ff0021 360px,#ff001d 372px,#ff001a 384px,#ff0017 396px,#ff0015 408px,#ff0012 420px,#ff0010 432px,#ff000e 444px,#ff000c 456px,#ff000b 468px,#ff0009 480px)"></div><div style="top:324px;height:3px;width:480px;background:linear-gradient(90deg,#003aff 0px,#0036ff 12px,#0033ff 24px,#012fff 36px,#0c2cff 48px,#1b28ff 60px,#2d24ff 72px,#4220ff 84px,#5a1cff 96px,#7518ff 108px,#9214ff 120px,#b310ff 132px,#d70cff 144px,#fe08ff 156px,#ff04db 168px,#ff01bd 180px,#ff00a5 192px,#ff0090 204px,#ff007f 216px,#ff0070 228px,#ff0064 240px,#ff0059 252px,#ff004f 264px,#ff0047 276px,#ff0040 288px,#ff0039 300px,#ff0033 312px,#ff002e 324px,#ff0029 336px,#ff0025 348px,#ff0021 360px,#ff001e 372px,#ff001b 384px,#ff0018 396px,#ff0015 408px,#ff0013 420px,#ff0011 432px,#ff000f 444px,#ff000d 456px,#ff000b 468px,#ff000a 480px)"></div><div style="top:327px;height:3px;width:480px;background:linear-gradient(90deg,#0036ff 0px,#0033ff 12px,#002fff 24px,#022cff 36px,#0d28ff 48px,#1c24ff 60px,#2e21ff 72px,#431dff 84px,#5b19ff 96px,#7615ff 108px,#9311ff 120px,#b30dff 132px,#d609ff 144px,#fd06ff 156px,#ff02dc 168px,#ff00be 180px,#ff00a6 192px,#ff0091 204px,#ff0080 216px,#ff0072 228px,#ff0065 240px,#ff005a 252px,#ff0050 264px,#ff0048 276px,#ff0041 288px,#ff003a 300px,#ff0034 312px,#ff002f 324px,#ff002a 336px,#ff0026 348px,#ff0022 360px,#ff001f 372px,#ff001b 384px,#ff0019 396px,#ff0016 408px,#ff0013 420px,#ff0011 432px,#ff000f 444px,#ff000d 456px,#ff000c 468px,#ff000a 480px)"></div><div style="top:330px;height:3px;width:480px;background:linear-gradient(90deg,#0032ff 0px,#002fff 12px,#002cff 24px,#0328ff 36px,#0e25ff 48px,#1d21ff 60px,#301dff 72px,#4519ff 84px,#5c16ff 96px,#7612ff 108px,#930eff 120px,#b30aff 132px,#d607ff 144px,#fc03ff 156px,#ff01dd 168px,#ff00bf 180px,#ff00a7 192px,#ff0093 204px,#ff0081 216px,#ff0073 228px,#ff0066 240px,#ff005b 252px,#ff0052 264px,#ff0049 276px,#ff0042 288px,#ff003b 300px,#ff0035 312px,#ff0030 324px,#ff002b 336px,#ff0027 348px,#ff0023 360px,#ff001f 372px,#ff001c 384px,#ff0019 396px,#ff0017 408px,#ff0014 420px,#ff0012 432px,#ff0010 444px,#ff000e 456px,#ff000c 468px,#ff000b 480px)"></div><div style="top:333px;height:3px;width:480px;background:linear-gradient(90deg,#002fff 0px,#002cff 12px,#0028ff 24px,#0425ff 36px,#0f21ff 48px,#1f1eff 60px,#311aff 72px,#4616ff 84px,#5d13ff 96px,#770fff 108px,#940bff 120px,#b308ff 132px,#d604ff 144px,#fc01ff 156px,#ff00de 168px,#ff00c0 180px,#ff00a8 192px,#ff0094 204px,#ff0083 216px,#ff0074 228px,#ff0067 240px,#ff005c 252px,#ff0053 264px,#ff004a 276px,#ff0043 288px,#ff003c 300px,#ff0036 312px,#ff0031 324px,#ff002c 336px,#ff0028 348px,#ff0024 360px,#ff0020 372px,#ff001d 384px,#ff001a 396px,#ff0017 408px,#ff0015 420px,#ff0012 432px,#ff0010 444px,#ff000e 456px,#ff000d 468px,#ff000b 480px)"></div><div style="top:336px;height:3px;width:480px;background:linear-gradient(90deg,#002cff 0px,#0028ff 12px,#0025ff 24px,#0422ff 36px,#101eff 48px,#201aff 60px,#3217ff 72px,#4713ff 84px,#5e10ff 96px,#780cff 108px,#9409ff 120px,#b405ff 132px,#d602ff 144px,#fb00ff 156px,#ff00df 168px,#ff00c1 180px,#ff00a9 192px,#ff0095 204px,#ff0084 216px,#ff0075 228px,#ff0068 240px,#ff005d 252px,#ff0054 264px,#ff004b 276px,#ff0044 288px,#ff003d 300px,#ff0037 312px,#ff0031 324px,#ff002d 336px,#ff0028 348px,#ff0024 360px,#ff0021 372px,#ff001d 384px,#ff001a 396px,#ff0018 408px,#ff0015 420px,#ff0013 432px,#ff0011 444px,#ff000f 456px,#ff000d 468px,#ff000c 480px)"></div><div style="top:339px;height:3px;width:480px;background:linear-gradient(90deg,#0028ff 0px,#0025ff 12px,#0022ff 24px,#051eff 36px,#121bff 48px,#2117ff 60px,#3314ff 72px,#4810ff 84px,#5f0dff 96px,#790aff 108px,#9506ff 120px,#b403ff 132px,#d601ff 144px,#fb00ff 156px,#ff00e0 168px,#ff00c2 180px,#ff00aa 192px,#ff0096 204px,#ff0085 216px,#ff0076 228px,#ff0069 240px,#ff005e 252px,#ff0055 264px,#ff004c 276px,#ff0044 288px,#ff003e 300px,#ff0038 312px,#ff0032 324px,#ff002d 336px,#ff0029 348px,#ff0025 360px,#ff0021 372px,#ff001e 384px,#ff001b 396px,#ff0018 408px,#ff0016 420px,#ff0014 432px,#ff0011 444px,#ff0010 456px,#ff000e 468px,#ff000c 480px)"></div><div style="top:342px;height:3px;width:480px;background:linear-gradient(90deg,#0025ff 0px,#0022ff 12px,#001fff 24px,#061bff 36px,#1318ff 48px,#2215ff 60px,#3411ff 72px,#490eff 84px,#600aff 96px,#7907ff 108px,#9504ff 120px,#b401ff 132px,#d600ff 144px,#fa00ff 156px,#ff00e0 168px,#ff00c3 180px,#ff00ab 192px,#ff0097 204px,#ff0086 216px,#ff0077 228px,#ff006a 240px,#ff005f 252px,#ff0056 264px,#ff004d 276px,#ff0045 288px,#ff003f 300px,#ff0039 312px,#ff0033 324px,#ff002e 336px,#ff002a 348px,#ff0026 360px,#ff0022 372px,#ff001f 384px,#ff001c 396px,#ff0019 408px,#ff0016 420px,#ff0014 432px,#ff0012 444px,#ff0010 456px,#ff000e 468px,#ff000d 480px)"></div><div style="top:345px;height:3px;width:480px;background:linear-gradient(90deg,#0022ff 0px,#001fff 12px,#001cff 24px,#0719ff 36px,#1415ff 48px,#2312ff 60px,#350fff 72px,#4a0bff 84px,#6108ff 96px,#7a05ff 108px,#9602ff 120px,#b400ff 132px,#d500ff 144px,#f900ff 156px,#ff00e1 168px,#ff00c4 180px,#ff00ac 192px,#ff0098 204px,#ff0087 216px,#ff0078 228px,#ff006b 240px,#ff0060 252px,#ff0057 264px,#ff004e 276px,#ff0046 288px,#ff0040 300px,#ff0039 312px,#ff0034 324px,#ff002f 336px,#ff002b 348px,#ff0027 360px,#ff0023 372px,#ff0020 384px,#ff001c 396px,#ff001a 408px,#ff0017 420px,#ff0015 432px,#ff0013 444px,#ff0011 456px,#ff000f 468px,#ff000d 480px)"></div><div style="top:348px;height:3px;width:480px;background:linear-gradient(90deg,#001fff 0px,#001cff 12px,#0019ff 24px,#0816ff 36px,#1513ff 48px,#250fff 60px,#370cff 72px,#4b09ff 84px,#6206ff 96px,#7b03ff 108px,#9601ff 120px,#b400ff 132px,#d500ff 144px,#f900ff 156px,#ff00e2 168px,#ff00c5 180px,#ff00ad 192px,#ff0099 204px,#ff0088 216px,#ff0079 228px,#ff006c 240px,#ff0061 252px,#ff0058 264px,#ff004f 276px,#ff0047 288px,#ff0040 300px,#ff003a 312px,#ff0035 324px,#ff0030 336px,#ff002b 348px,#ff0027 360px,#ff0024 372px,#ff0020 384px,#ff001d 396px,#ff001a 408px,#ff0018 420px,#ff0015 432px,#ff0013 444px,#ff0011 456px,#ff000f 468px,#ff000e 480px)"></div><div style="top:351px;height:3px;width:480px;background:linear-gradient(90deg,#001dff 0px,#0019ff 12px,#0016ff 24px,#0913ff 36px,#1610ff 48px,#260dff 60px,#380aff 72px,#4c07ff 84px,#6304ff 96px,#7b01ff 108px,#9700ff 120px,#b500ff 132px,#d500ff 144px,#f800ff 156px,#ff00e3 168px,#ff00c6 180px,#ff00ae 192px,#ff009a 204px,#ff0089 216px,#ff007a 228px,#ff006e 240px,#ff0062 252px,#ff0059 264px,#ff0050 276px,#ff0048 288px,#ff0041 300px,#ff003b 312px,#ff0036 324px,#ff0031 336px,#ff002c 348px,#ff0028 360px,#ff0024 372px,#ff0021 384px,#ff001e 396px,#ff001b 408px,#ff0018 420px,#ff0016 432px,#ff0014 444px,#ff0012 456px,#ff0010 468px,#ff000e 480px)"></div><div style="top:354px;height:3px;width:480px;background:linear-gradient(90deg,#001aff 0px,#0017ff 12px,#0114ff 24px,#0a11ff 36px,#170eff 48px,#270bff 60px,#3908ff 72px,#4d05ff 84px,#6302ff 96px,#7c00ff 108px,#9700ff 120px,#b500ff 132px,#d500ff 144px,#f800ff 156px,#ff00e4 168px,#ff00c7 180px,#ff00af 192px,#ff009b 204px,#ff008a 216px,#ff007b 228px,#ff006f 240px,#ff0063 252px,#ff005a 264px,#ff0051 276px,#ff0049 288px,#ff0042 300px,#ff003c 312px,#ff0037 324px,#ff0031 336px,#ff002d 348px,#ff0029 360px,#ff0025 372px,#ff0022 384px,#ff001e 396px,#ff001c 408px,#ff0019 420px,#ff0016 432px,#ff0014 444px,#ff0012 456px,#ff0010 468px,#ff000e 480px)"></div><div style="top:357px;height:3px;width:480px;background:linear-gradient(90deg,#0017ff 0px,#0014ff 12px,#0211ff 24px,#0b0eff 36px,#180bff 48px,#2808ff 60px,#3a06ff 72px,#4e03ff 84px,#6401ff 96px,#7d00ff 108px,#9800ff 120px,#b500ff 132px,#d500ff 144px,#f700ff 156px,#ff00e4 168px,#ff00c8 180px,#ff00b0 192px,#ff009c 204px,#ff008b 216px,#ff007c 228px,#ff0070 240px,#ff0064 252px,#ff005b 264px,#ff0052 276px,#ff004a 288px,#ff0043 300px,#ff003d 312px,#ff0037 324px,#ff0032 336px,#ff002e 348px,#ff002a 360px,#ff0026 372px,#ff0022 384px,#ff001f 396px,#ff001c 408px,#ff001a 420px,#ff0017 432px,#ff0015 444px,#ff0013 456px,#ff0011 468px,#ff000f 480px)"></div><div style="top:360px;height:3px;width:480px;background:linear-gradient(90deg,#0015ff 0px,#0012ff 12px,#020fff 24px,#0c0cff 36px,#1909ff 48px,#2906ff 60px,#3b04ff 72px,#4f01ff 84px,#6500ff 96px,#7d00ff 108px,#9800ff 120px,#b500ff 132px,#d500ff 144px,#f700ff 156px,#ff00e5 168px,#ff00c9 180px,#ff00b1 192px,#ff009d 204px,#ff008c 216px,#ff007d 228px,#ff0071 240px,#ff0065 252px,#ff005c 264px,#ff0053 276px,#ff004b 288px,#ff0044 300px,#ff003e 312px,#ff0038 324px,#ff0033 336px,#ff002e 348px,#ff002a 360px,#ff0026 372px,#ff0023 384px,#ff0020 396px,#ff001d 408px,#ff001a 420px,#ff0018 432px,#ff0015 444px,#ff0013 456px,#ff0011 468px,#ff000f 480px)"></div><div style="top:363px;height:3px;width:480px;background:linear-gradient(90deg,#0012ff 0px,#0010ff 12px,#030dff 24px,#0d0aff 36px,#1a07ff 48px,#2a05ff 60px,#3c02ff 72px,#5000ff 84px,#6600ff 96px,#7e00ff 108px,#9900ff 120px,#b500ff 132px,#d400ff 144px,#f600ff 156px,#ff00e6 168px,#ff00ca 180px,#ff00b2 192px,#ff009e 204px,#ff008d 216px,#ff007e 228px,#ff0072 240px,#ff0066 252px,#ff005c 264px,#ff0054 276px,#ff004c 288px,#ff0045 300px,#ff003f 312px,#ff0039 324px,#ff0034 336px,#ff002f 348px,#ff002b 360px,#ff0027 372px,#ff0024 384px,#ff0020 396px,#ff001d 408px,#ff001b 420px,#ff0018 432px,#ff0016 444px,#ff0014 456px,#ff0012 468px,#ff0010 480px)"></div><div style="top:366px;height:3px;width:480px;background:linear-gradient(90deg,#0010ff 0px,#000dff 12px,#040bff 24px,#0e08ff 36px,#1c05ff 48px,#2b03ff 60px,#3d01ff 72px,#5100ff 84px,#6700ff 96px,#7f00ff 108px,#9900ff 120px,#b500ff 132px,#d400ff 144px,#f600ff 156px,#ff00e7 168px,#ff00cb 180px,#ff00b3 192px,#ff009f 204px,#ff008e 216px,#ff007f 228px,#ff0073 240px,#ff0067 252px,#ff005d 264px,#ff0055 276px,#ff004d 288px,#ff0046 300px,#ff003f 312px,#ff003a 324px,#ff0035 336px,#ff0030 348px,#ff002c 360px,#ff0028 372px,#ff0024 384px,#ff0021 396px,#ff001e 408px,#ff001b 420px,#ff0019 432px,#ff0016 444px,#ff0014 456px,#ff0012 468px,#ff0010 480px)"></div><div style="top:369px;height:3px;width:480px;background:linear-gradient(90deg,#000eff 0px,#000bff 12px,#0509ff 24px,#0f06ff 36px,#1d04ff 48px,#2c01ff 60px,#3e00ff 72px,#5200ff 84px,#6700ff 96px,#7f00ff 108px,#9900ff 120px,#b600ff 132px,#d400ff 144px,#f500ff 156px,#ff00e7 168px,#ff00cb 180px,#ff00b4 192px,#ff00a0 204px,#ff008f 216px,#ff0080 228px,#ff0074 240px,#ff0068 252px,#ff005e 264px,#ff0056 276px,#ff004e 288px,#ff0047 300px,#ff0040 312px,#ff003b 324px,#ff0035 336px,#ff0031 348px,#ff002c 360px,#ff0029 372px,#ff0025 384px,#ff0022 396px,#ff001f 408px,#ff001c 420px,#ff0019 432px,#ff0017 444px,#ff0015 456px,#ff0013 468px,#ff0011 480px)"></div><div style="top:372px;height:3px;width:480px;background:linear-gradient(90deg,#000cff 0px,#0009ff 12px,#0507ff 24px,#1004ff 36px,#1e02ff 48px,#2d00ff 60px,#3f00ff 72px,#5300ff 84px,#6800ff 96px,#8000ff 108px,#9a00ff 120px,#b600ff 132px,#d400ff 144px,#f500ff 156px,#ff00e8 168px,#ff00cc 180px,#ff00b5 192px,#ff00a1 204px,#ff0090 216px,#ff0081 228px,#ff0075 240px,#ff0069 252px,#ff005f 264px,#ff0056 276px,#ff004f 288px,#ff0048 300px,#ff0041 312px,#ff003b 324px,#ff0036 336px,#ff0032 348px,#ff002d 360px,#ff0029 372px,#ff0026 384px,#ff0022 396px,#ff001f 408px,#ff001d 420px,#ff001a 432px,#ff0018 444px,#ff0015 456px,#ff0013 468px,#ff0011 480px)"></div><div style="top:375px;height:3px;width:480px;background:linear-gradient(90deg,#000aff 0px,#0007ff 12px,#0605ff 24px,#1103ff 36px,#1f01ff 48px,#2e00ff 60px,#4000ff 72px,#5300ff 84px,#6900ff 96px,#8100ff 108px,#9a00ff 120px,#b600ff 132px,#d400ff 144px,#f400ff 156px,#ff00e9 168px,#ff00cd 180px,#ff00b6 192px,#ff00a2 204px,#ff0091 216px,#ff0082 228px,#ff0075 240px,#ff006a 252px,#ff0060 264px,#ff0057 276px,#ff004f 288px,#ff0048 300px,#ff0042 312px,#ff003c 324px,#ff0037 336px,#ff0032 348px,#ff002e 360px,#ff002a 372px,#ff0026 384px,#ff0023 396px,#ff0020 408px,#ff001d 420px,#ff001b 432px,#ff0018 444px,#ff0016 456px,#ff0014 468px,#ff0012 480px)"></div><div style="top:378px;height:3px;width:480px;background:linear-gradient(90deg,#0008ff 0px,#0006ff 12px,#0703ff 24px,#1201ff 36px,#2000ff 48px,#2f00ff 60px,#4100ff 72px,#5400ff 84px,#6a00ff 96px,#8100ff 108px,#9b00ff 120px,#b600ff 132px,#d400ff 144px,#f400ff 156px,#ff00ea 168px,#ff00ce 180px,#ff00b7 192px,#ff00a3 204px,#ff0092 216px,#ff0083 228px,#ff0076 240px,#ff006b 252px,#ff0061 264px,#ff0058 276px,#ff0050 288px,#ff0049 300px,#ff0043 312px,#ff003d 324px,#ff0038 336px,#ff0033 348px,#ff002f 360px,#ff002b 372px,#ff0027 384px,#ff0024 396px,#ff0021 408px,#ff001e 420px,#ff001b 432px,#ff0019 444px,#ff0016 456px,#ff0014 468px,#ff0012 480px)"></div><div style="top:381px;height:3px;width:480px;background:linear-gradient(90deg,#0006ff 0px,#0004ff 12px,#0802ff 24px,#1300ff 36px,#2100ff 48px,#3000ff 60px,#4200ff 72px,#5500ff 84px,#6a00ff 96px,#8200ff 108px,#9b00ff 120px,#b600ff 132px,#d400ff 144px,#f300ff 156px,#ff00ea 168px,#ff00cf 180px,#ff00b8 192px,#ff00a4 204px,#ff0093 216px,#ff0084 228px,#ff0077 240px,#ff006c 252px,#ff0062 264px,#ff0059 276px,#ff0051 288px,#ff004a 300px,#ff0044 312px,#ff003e 324px,#ff0039 336px,#ff0034 348px,#ff002f 360px,#ff002b 372px,#ff0028 384px,#ff0024 396px,#ff0021 408px,#ff001e 420px,#ff001c 432px,#ff0019 444px,#ff0017 456px,#ff0015 468px,#ff0013 480px)"></div><div style="top:384px;height:3px;width:480px;background:linear-gradient(90deg,#0005ff 0px,#0103ff 12px,#0901ff 24px,#1400ff 36px,#2200ff 48px,#3100ff 60px,#4300ff 72px,#5600ff 84px,#6b00ff 96px,#8200ff 108px,#9b00ff 120px,#b600ff 132px,#d400ff 144px,#f300ff 156px,#ff00eb 168px,#ff00d0 180px,#ff00b9 192px,#ff00a5 204px,#ff0094 216px,#ff0085 228px,#ff0078 240px,#ff006d 252px,#ff0063 264px,#ff005a 276px,#ff0052 288px,#ff004b 300px,#ff0044 312px,#ff003f 324px,#ff0039 336px,#ff0034 348px,#ff0030 360px,#ff002c 372px,#ff0028 384px,#ff0025 396px,#ff0022 408px,#ff001f 420px,#ff001c 432px,#ff001a 444px,#ff0018 456px,#ff0015 468px,#ff0013 480px)"></div><div style="top:387px;height:3px;width:480px;background:linear-gradient(90deg,#0003ff 0px,#0101ff 12px,#0a00ff 24px,#1500ff 36px,#2300ff 48px,#3200ff 60px,#4400ff 72px,#5700ff 84px,#6c00ff 96px,#8300ff 108px,#9c00ff 120px,#b600ff 132px,#d300ff 144px,#f300ff 156px,#ff00ec 168px,#ff00d0 180px,#ff00b9 192px,#ff00a6 204px,#ff0095 216px,#ff0086 228px,#ff0079 240px,#ff006e 252px,#ff0064 264px,#ff005b 276px,#ff0053 288px,#ff004c 300px,#ff0045 312px,#ff003f 324px,#ff003a 336px,#ff0035 348px,#ff0031 360px,#ff002d 372px,#ff0029 384px,#ff0026 396px,#ff0022 408px,#ff0020 420px,#ff001d 432px,#ff001a 444px,#ff0018 456px,#ff0016 468px,#ff0014 480px)"></div><div style="top:390px;height:3px;width:480px;background:linear-gradient(90deg,#0002ff 0px,#0200ff 12px,#0b00ff 24px,#1600ff 36px,#2400ff 48px,#3300ff 60px,#4500ff 72px,#5800ff 84px,#6d00ff 96px,#8300ff 108px,#9c00ff 120px,#b700ff 132px,#d300ff 144px,#f200ff 156px,#ff00ec 168px,#ff00d1 180px,#ff00ba 192px,#ff00a7 204px,#ff0096 216px,#ff0087 228px,#ff007a 240px,#ff006f 252px,#ff0065 264px,#ff005c 276px,#ff0054 288px,#ff004d 300px,#ff0046 312px,#ff0040 324px,#ff003b 336px,#ff0036 348px,#ff0032 360px,#ff002d 372px,#ff002a 384px,#ff0026 396px,#ff0023 408px,#ff0020 420px,#ff001d 432px,#ff001b 444px,#ff0019 456px,#ff0016 468px,#ff0014 480px)"></div><div style="top:393px;height:3px;width:480px;background:linear-gradient(90deg,#0001ff 0px,#0300ff 12px,#0c00ff 24px,#1700ff 36px,#2500ff 48px,#3400ff 60px,#4600ff 72px,#5900ff 84px,#6d00ff 96px,#8400ff 108px,#9c00ff 120px,#b700ff 132px,#d300ff 144px,#f200ff 156px,#ff00ed 168px,#ff00d2 180px,#ff00bb 192px,#ff00a8 204px,#ff0097 216px,#ff0088 228px,#ff007b 240px,#ff0070 252px,#ff0066 264px,#ff005d 276px,#ff0055 288px,#ff004d 300px,#ff0047 312px,#ff0041 324px,#ff003c 336px,#ff0037 348px,#ff0032 360px,#ff002e 372px,#ff002a 384px,#ff0027 396px,#ff0024 408px,#ff0021 420px,#ff001e 432px,#ff001b 444px,#ff0019 456px,#ff0017 468px,#ff0015 480px)"></div><div style="top:396px;height:3px;width:480px;background:linear-gradient(90deg,#0000ff 0px,#0300ff 12px,#0c00ff 24px,#1800ff 36px,#2600ff 48px,#3500ff 60px,#4600ff 72px,#5900ff 84px,#6e00ff 96px,#8400ff 108px,#9d00ff 120px,#b700ff 132px,#d300ff 144px,#f100ff 156px,#ff00ed 168px,#ff00d3 180px,#ff00bc 192px,#ff00a8 204px,#ff0098 216px,#ff0089 228px,#ff007c 240px,#ff0071 252px,#ff0067 264px,#ff005e 276px,#ff0056 288px,#ff004e 300px,#ff0048 312px,#ff0042 324px,#ff003c 336px,#ff0037 348px,#ff0033 360px,#ff002f 372px,#ff002b 384px,#ff0028 396px,#ff0024 408px,#ff0021 420px,#ff001f 432px,#ff001c 444px,#ff001a 456px,#ff0017 468px,#ff0015 480px)"></div><div style="top:399px;height:1px;width:480px;background:linear-gradient(90deg,#0000ff 0px,#0400ff 12px,#0d00ff 24px,#1900ff 36px,#2600ff 48px,#3600ff 60px,#4700ff 72px,#5a00ff 84px,#6e00ff 96px,#8500ff 108px,#9d00ff 120px,#b700ff 132px,#d300ff 144px,#f100ff 156px,#ff00ee 168px,#ff00d3 180px,#ff00bc 192px,#ff00a9 204px,#ff0098 216px,#ff008a 228px,#ff007d 240px,#ff0071 252px,#ff0067 264px,#ff005e 276px,#ff0056 288px,#ff004f 300px,#ff0048 312px,#ff0042 324px,#ff003d 336px,#ff0038 348px,#ff0033 360px,#ff002f 372px,#ff002b 384px,#ff0028 396px,#ff0025 408px,#ff0022 420px,#ff001f 432px,#ff001c 444px,#ff001a 456px,#ff0018 468px,#ff0016 480px)"></div></div></div>
<div class="t lb" style="left:1162.9px;top:677.5px;transform:translateX(-50%)">0</div>
<div class="ab" style="left:1162.4px;top:668px;width:1.5px;height:6px;background:#a0a0a0"></div>
<div class="t lb" style="left:1251.5px;top:677.5px;transform:translateX(-50%)">0.1</div>
<div class="ab" style="left:1251.0px;top:668px;width:1.5px;height:6px;background:#a0a0a0"></div>
<div class="t lb" style="left:1340.0px;top:677.5px;transform:translateX(-50%)">0.2</div>
<div class="ab" style="left:1339.5px;top:668px;width:1.5px;height:6px;background:#a0a0a0"></div>
<div class="t lb" style="left:1428.6px;top:677.5px;transform:translateX(-50%)">0.3</div>
<div class="ab" style="left:1428.1px;top:668px;width:1.5px;height:6px;background:#a0a0a0"></div>
<div class="t lb" style="left:1517.2px;top:677.5px;transform:translateX(-50%)">0.4</div>
<div class="ab" style="left:1516.7px;top:668px;width:1.5px;height:6px;background:#a0a0a0"></div>
<div class="t lb" style="left:1605.8px;top:677.5px;transform:translateX(-50%)">0.5</div>
<div class="ab" style="left:1605.2px;top:668px;width:1.5px;height:6px;background:#a0a0a0"></div>
<div class="t lb" style="left:1694.3px;top:677.5px;transform:translateX(-50%)">0.6</div>
<div class="ab" style="left:1693.8px;top:668px;width:1.5px;height:6px;background:#a0a0a0"></div>
<div class="t lb" style="left:1782.9px;top:677.5px;transform:translateX(-50%)">0.7</div>
<div class="ab" style="left:1782.4px;top:668px;width:1.5px;height:6px;background:#a0a0a0"></div>
<div class="t lb" style="left:1871.5px;top:677.5px;transform:translateX(-50%)">0.8</div>
<div class="ab" style="left:1871.0px;top:668px;width:1.5px;height:6px;background:#a0a0a0"></div>
<div class="t lb" style="right:765.0px;top:661.7px;">0</div>
<div class="ab" style="left:1155px;top:667.7px;width:8px;height:1.5px;background:#a0a0a0"></div>
<div class="t lb" style="right:765.0px;top:599.5px;">0.1</div>
<div class="ab" style="left:1155px;top:605.5px;width:8px;height:1.5px;background:#a0a0a0"></div>
<div class="t lb" style="right:765.0px;top:537.3px;">0.2</div>
<div class="ab" style="left:1155px;top:543.3px;width:8px;height:1.5px;background:#a0a0a0"></div>
<div class="t lb" style="right:765.0px;top:475.1px;">0.3</div>
<div class="ab" style="left:1155px;top:481.1px;width:8px;height:1.5px;background:#a0a0a0"></div>
<div class="t lb" style="right:765.0px;top:412.9px;">0.4</div>
<div class="ab" style="left:1155px;top:418.9px;width:8px;height:1.5px;background:#a0a0a0"></div>
<div class="t lb" style="right:765.0px;top:350.7px;">0.5</div>
<div class="ab" style="left:1155px;top:356.7px;width:8px;height:1.5px;background:#a0a0a0"></div>
<div class="t lb" style="right:765.0px;top:288.5px;">0.6</div>
<div class="ab" style="left:1155px;top:294.5px;width:8px;height:1.5px;background:#a0a0a0"></div>
<div class="t lb" style="right:765.0px;top:226.3px;">0.7</div>
<div class="ab" style="left:1155px;top:232.3px;width:8px;height:1.5px;background:#a0a0a0"></div>
<div class="t lb" style="right:765.0px;top:164.1px;">0.8</div>
<div class="ab" style="left:1155px;top:170.1px;width:8px;height:1.5px;background:#a0a0a0"></div>
<div class="ab" style="left:1649px;top:154px;width:251px;height:196px;overflow:hidden"><div class="ab" style="left:0;top:0;width:251px;height:196px;filter:blur(1px)"><div style="position:absolute;left:0;top:0px;width:251px;height:4px;background:linear-gradient(90deg,#44ff92 0px,#4dff91 16px,#56ff90 32px,#60ff8f 48px,#6aff8f 64px,#75ff8e 80px,#80ff8d 96px,#8cff8c 112px,#98ff8b 128px,#a4ff8a 144px,#b1ff89 160px,#beff88 176px,#ccff87 192px,#dbff86 208px,#eaff85 224px,#f9ff84 240px,#fffa81 251px)"></div><div style="position:absolute;left:0;top:4px;width:251px;height:4px;background:linear-gradient(90deg,#45ff94 0px,#4eff93 16px,#58ff92 32px,#62ff91 48px,#6cff90 64px,#77ff90 80px,#82ff8f 96px,#8dff8e 112px,#9aff8d 128px,#a6ff8c 144px,#b3ff8b 160px,#c1ff8a 176px,#cfff89 192px,#ddff88 208px,#ecff87 224px,#fcff86 240px,#fff781 251px)"></div><div style="position:absolute;left:0;top:8px;width:251px;height:4px;background:linear-gradient(90deg,#46ff96 0px,#4fff95 16px,#59ff94 32px,#63ff93 48px,#6dff92 64px,#78ff91 80px,#83ff91 96px,#8fff90 112px,#9bff8f 128px,#a8ff8e 144px,#b5ff8d 160px,#c3ff8c 176px,#d1ff8b 192px,#e0ff8a 208px,#efff89 224px,#ffff88 240px,#fff482 251px)"></div><div style="position:absolute;left:0;top:12px;width:251px;height:4px;background:linear-gradient(90deg,#47ff97 0px,#51ff97 16px,#5aff96 32px,#64ff95 48px,#6fff94 64px,#7aff93 80px,#85ff93 96px,#91ff92 112px,#9dff91 128px,#aaff90 144px,#b7ff8f 160px,#c5ff8e 176px,#d3ff8d 192px,#e2ff8c 208px,#f2ff8b 224px,#fffc89 240px,#fff282 251px)"></div><div style="position:absolute;left:0;top:16px;width:251px;height:4px;background:linear-gradient(90deg,#48ff99 0px,#52ff99 16px,#5bff98 32px,#66ff97 48px,#70ff96 64px,#7bff95 80px,#87ff95 96px,#93ff94 112px,#9fff93 128px,#acff92 144px,#baff91 160px,#c7ff90 176px,#d6ff8f 192px,#e5ff8e 208px,#f4ff8d 224px,#fffa89 240px,#ffef83 251px)"></div><div style="position:absolute;left:0;top:20px;width:251px;height:4px;background:linear-gradient(90deg,#4aff9b 0px,#53ff9b 16px,#5dff9a 32px,#67ff99 48px,#72ff98 64px,#7dff97 80px,#88ff96 96px,#95ff96 112px,#a1ff95 128px,#aeff94 144px,#bcff93 160px,#caff92 176px,#d8ff91 192px,#e8ff90 208px,#f7ff8f 224px,#fff78a 240px,#ffec83 251px)"></div><div style="position:absolute;left:0;top:24px;width:251px;height:4px;background:linear-gradient(90deg,#4bff9d 0px,#54ff9c 16px,#5eff9c 32px,#68ff9b 48px,#73ff9a 64px,#7eff99 80px,#8aff98 96px,#96ff98 112px,#a3ff97 128px,#b0ff96 144px,#beff95 160px,#ccff94 176px,#dbff93 192px,#eaff92 208px,#faff91 224px,#fff48a 240px,#ffea84 251px)"></div><div style="position:absolute;left:0;top:28px;width:251px;height:4px;background:linear-gradient(90deg,#4cff9f 0px,#55ff9e 16px,#5fff9e 32px,#6aff9d 48px,#75ff9c 64px,#80ff9b 80px,#8cff9b 96px,#98ff9a 112px,#a5ff99 128px,#b2ff98 144px,#c0ff97 160px,#ceff96 176px,#ddff95 192px,#edff94 208px,#fdff93 224px,#fff18b 240px,#ffe784 251px)"></div><div style="position:absolute;left:0;top:32px;width:251px;height:4px;background:linear-gradient(90deg,#4dffa1 0px,#57ffa0 16px,#61ffa0 32px,#6bff9f 48px,#76ff9e 64px,#82ff9d 80px,#8eff9d 96px,#9aff9c 112px,#a7ff9b 128px,#b4ff9a 144px,#c2ff99 160px,#d1ff98 176px,#e0ff98 192px,#f0ff97 208px,#fffe95 224px,#ffef8b 240px,#ffe585 251px)"></div><div style="position:absolute;left:0;top:36px;width:251px;height:4px;background:linear-gradient(90deg,#4effa3 0px,#58ffa2 16px,#62ffa2 32px,#6dffa1 48px,#78ffa0 64px,#83ff9f 80px,#8fff9f 96px,#9cff9e 112px,#a9ff9d 128px,#b7ff9c 144px,#c5ff9b 160px,#d3ff9b 176px,#e3ff9a 192px,#f2ff99 208px,#fffb96 224px,#ffec8c 240px,#ffe285 251px)"></div><div style="position:absolute;left:0;top:40px;width:251px;height:4px;background:linear-gradient(90deg,#4fffa5 0px,#59ffa4 16px,#63ffa4 32px,#6effa3 48px,#79ffa2 64px,#85ffa2 80px,#91ffa1 96px,#9effa0 112px,#abff9f 128px,#b9ff9e 144px,#c7ff9e 160px,#d6ff9d 176px,#e5ff9c 192px,#f5ff9b 208px,#fff996 224px,#ffe98c 240px,#ffe086 251px)"></div><div style="position:absolute;left:0;top:44px;width:251px;height:4px;background:linear-gradient(90deg,#51ffa7 0px,#5affa7 16px,#65ffa6 32px,#70ffa5 48px,#7bffa4 64px,#87ffa4 80px,#93ffa3 96px,#a0ffa2 112px,#adffa1 128px,#bbffa1 144px,#c9ffa0 160px,#d8ff9f 176px,#e8ff9e 192px,#f8ff9d 208px,#fff697 224px,#ffe78d 240px,#ffdd86 251px)"></div><div style="position:absolute;left:0;top:48px;width:251px;height:4px;background:linear-gradient(90deg,#52ffa9 0px,#5cffa9 16px,#66ffa8 32px,#71ffa7 48px,#7dffa7 64px,#89ffa6 80px,#95ffa5 96px,#a2ffa4 112px,#afffa4 128px,#bdffa3 144px,#ccffa2 160px,#dbffa1 176px,#ebffa0 192px,#fbffa0 208px,#fff397 224px,#ffe48d 240px,#ffdb87 251px)"></div><div style="position:absolute;left:0;top:52px;width:251px;height:4px;background:linear-gradient(90deg,#53ffab 0px,#5dffab 16px,#68ffaa 32px,#73ffa9 48px,#7effa9 64px,#8affa8 80px,#97ffa7 96px,#a4ffa7 112px,#b1ffa6 128px,#c0ffa5 144px,#ceffa4 160px,#ddffa4 176px,#edffa3 192px,#feffa2 208px,#fff098 224px,#ffe18e 240px,#ffd887 251px)"></div><div style="position:absolute;left:0;top:56px;width:251px;height:4px;background:linear-gradient(90deg,#54ffae 0px,#5effad 16px,#69ffac 32px,#74ffac 48px,#80ffab 64px,#8cffaa 80px,#99ffaa 96px,#a6ffa9 112px,#b4ffa8 128px,#c2ffa7 144px,#d1ffa7 160px,#e0ffa6 176px,#f0ffa5 192px,#fffda3 208px,#ffed98 224px,#ffdf8e 240px,#ffd688 251px)"></div><div style="position:absolute;left:0;top:60px;width:251px;height:4px;background:linear-gradient(90deg,#56ffb0 0px,#60ffaf 16px,#6bffae 32px,#76ffae 48px,#82ffad 64px,#8effad 80px,#9bffac 96px,#a8ffab 112px,#b6ffaa 128px,#c4ffaa 144px,#d3ffa9 160px,#e3ffa8 176px,#f3ffa7 192px,#fffaa4 208px,#ffeb99 224px,#ffdc8f 240px,#ffd388 251px)"></div><div style="position:absolute;left:0;top:64px;width:251px;height:4px;background:linear-gradient(90deg,#57ffb2 0px,#61ffb1 16px,#6cffb1 32px,#78ffb0 48px,#83ffaf 64px,#90ffaf 80px,#9dffae 96px,#aaffad 112px,#b8ffad 128px,#c7ffac 144px,#d6ffab 160px,#e5ffab 176px,#f6ffaa 192px,#fff8a4 208px,#ffe899 224px,#ffda8f 240px,#ffd189 251px)"></div><div style="position:absolute;left:0;top:68px;width:251px;height:4px;background:linear-gradient(90deg,#58ffb4 0px,#63ffb4 16px,#6effb3 32px,#79ffb2 48px,#85ffb2 64px,#92ffb1 80px,#9fffb0 96px,#acffb0 112px,#baffaf 128px,#c9ffae 144px,#d8ffae 160px,#e8ffad 176px,#f9ffac 192px,#fff5a5 208px,#ffe59a 224px,#ffd790 240px,#ffce89 251px)"></div><div style="position:absolute;left:0;top:72px;width:251px;height:4px;background:linear-gradient(90deg,#59ffb6 0px,#64ffb6 16px,#6fffb5 32px,#7bffb5 48px,#87ffb4 64px,#94ffb3 80px,#a1ffb3 96px,#aeffb2 112px,#bdffb2 128px,#cbffb1 144px,#dbffb0 160px,#ebffaf 176px,#fcffaf 192px,#fff2a5 208px,#ffe39a 224px,#ffd590 240px,#ffcc8a 251px)"></div><div style="position:absolute;left:0;top:76px;width:251px;height:4px;background:linear-gradient(90deg,#5bffb9 0px,#66ffb8 16px,#71ffb8 32px,#7cffb7 48px,#89ffb6 64px,#95ffb6 80px,#a3ffb5 96px,#b1ffb5 112px,#bfffb4 128px,#ceffb3 144px,#deffb3 160px,#eeffb2 176px,#ffffb1 192px,#ffefa6 208px,#ffe09b 224px,#ffd291 240px,#ffca8a 251px)"></div><div style="position:absolute;left:0;top:80px;width:251px;height:4px;background:linear-gradient(90deg,#5cffbb 0px,#67ffba 16px,#72ffba 32px,#7effb9 48px,#8affb9 64px,#97ffb8 80px,#a5ffb8 96px,#b3ffb7 112px,#c1ffb6 128px,#d0ffb6 144px,#e0ffb5 160px,#f1ffb5 176px,#fffcb2 192px,#ffeca6 208px,#ffdd9b 224px,#ffd091 240px,#ffc78b 251px)"></div><div style="position:absolute;left:0;top:84px;width:251px;height:4px;background:linear-gradient(90deg,#5effbd 0px,#68ffbd 16px,#74ffbc 32px,#80ffbc 48px,#8cffbb 64px,#99ffbb 80px,#a7ffba 96px,#b5ffba 112px,#c4ffb9 128px,#d3ffb8 144px,#e3ffb8 160px,#f3ffb7 176px,#fff9b3 192px,#ffe9a6 208px,#ffdb9b 224px,#ffce91 240px,#ffc58b 251px)"></div><div style="position:absolute;left:0;top:88px;width:251px;height:4px;background:linear-gradient(90deg,#5fffc0 0px,#6affbf 16px,#76ffbf 32px,#82ffbe 48px,#8effbe 64px,#9bffbd 80px,#a9ffbd 96px,#b7ffbc 112px,#c6ffbb 128px,#d6ffbb 144px,#e6ffba 160px,#f6ffba 176px,#fff7b3 192px,#ffe7a7 208px,#ffd89c 224px,#ffcb92 240px,#ffc38c 251px)"></div><div style="position:absolute;left:0;top:92px;width:251px;height:4px;background:linear-gradient(90deg,#60ffc2 0px,#6bffc2 16px,#77ffc1 32px,#83ffc1 48px,#90ffc0 64px,#9dffc0 80px,#abffbf 96px,#baffbf 112px,#c9ffbe 128px,#d8ffbe 144px,#e8ffbd 160px,#f9ffbc 176px,#fff4b3 192px,#ffe4a7 208px,#ffd69c 224px,#ffc992 240px,#ffc08c 251px)"></div><div style="position:absolute;left:0;top:96px;width:251px;height:4px;background:linear-gradient(90deg,#62ffc5 0px,#6dffc4 16px,#79ffc4 32px,#85ffc3 48px,#92ffc3 64px,#9fffc2 80px,#adffc2 96px,#bcffc1 112px,#cbffc1 128px,#dbffc0 144px,#ebffc0 160px,#fcffbf 176px,#fff1b4 192px,#ffe1a8 208px,#ffd39d 224px,#ffc693 240px,#ffbe8c 251px)"></div><div style="position:absolute;left:0;top:100px;width:251px;height:4px;background:linear-gradient(90deg,#63ffc7 0px,#6fffc7 16px,#7bffc6 32px,#87ffc6 48px,#94ffc5 64px,#a1ffc5 80px,#b0ffc4 96px,#beffc4 112px,#ceffc3 128px,#deffc3 144px,#eeffc2 160px,#ffffc1 176px,#ffeeb4 192px,#ffdfa8 208px,#ffd19d 224px,#ffc493 240px,#ffbc8d 251px)"></div><div style="position:absolute;left:0;top:104px;width:251px;height:4px;background:linear-gradient(90deg,#65ffca 0px,#70ffc9 16px,#7cffc9 32px,#89ffc8 48px,#96ffc8 64px,#a4ffc7 80px,#b2ffc7 96px,#c1ffc7 112px,#d0ffc6 128px,#e0ffc6 144px,#f1ffc5 160px,#fffbc2 176px,#ffebb5 192px,#ffdca9 208px,#ffce9e 224px,#ffc294 240px,#ffba8d 251px)"></div><div style="position:absolute;left:0;top:108px;width:251px;height:4px;background:linear-gradient(90deg,#66ffcc 0px,#72ffcc 16px,#7effcb 32px,#8bffcb 48px,#98ffca 64px,#a6ffca 80px,#b4ffca 96px,#c3ffc9 112px,#d3ffc9 128px,#e3ffc8 144px,#f4ffc8 160px,#fff8c2 176px,#ffe8b5 192px,#ffd9a9 208px,#ffcc9e 224px,#ffbf94 240px,#ffb88e 251px)"></div><div style="position:absolute;left:0;top:112px;width:251px;height:4px;background:linear-gradient(90deg,#68ffcf 0px,#73ffce 16px,#80ffce 32px,#8dffce 48px,#9affcd 64px,#a8ffcd 80px,#b7ffcc 96px,#c6ffcc 112px,#d5ffcc 128px,#e6ffcb 144px,#f7ffcb 160px,#fff5c3 176px,#ffe5b6 192px,#ffd7aa 208px,#ffc99f 224px,#ffbd95 240px,#ffb58e 251px)"></div><div style="position:absolute;left:0;top:116px;width:251px;height:4px;background:linear-gradient(90deg,#69ffd1 0px,#75ffd1 16px,#82ffd1 32px,#8effd0 48px,#9cffd0 64px,#aaffd0 80px,#b9ffcf 96px,#c8ffcf 112px,#d8ffce 128px,#e9ffce 144px,#faffce 160px,#fff2c3 176px,#ffe3b6 192px,#ffd4aa 208px,#ffc79f 224px,#ffbb95 240px,#ffb38f 251px)"></div><div style="position:absolute;left:0;top:120px;width:251px;height:4px;background:linear-gradient(90deg,#6bffd4 0px,#77ffd4 16px,#83ffd3 32px,#90ffd3 48px,#9effd3 64px,#acffd2 80px,#bbffd2 96px,#cbffd2 112px,#dbffd1 128px,#ecffd1 144px,#fdffd1 160px,#fff0c3 176px,#ffe0b6 192px,#ffd2aa 208px,#ffc5a0 224px,#ffb996 240px,#ffb18f 251px)"></div><div style="position:absolute;left:0;top:124px;width:251px;height:4px;background:linear-gradient(90deg,#6cffd7 0px,#78ffd6 16px,#85ffd6 32px,#92ffd6 48px,#a0ffd5 64px,#afffd5 80px,#beffd5 96px,#cdffd4 112px,#deffd4 128px,#efffd4 144px,#fffed2 160px,#ffedc4 176px,#ffddb7 192px,#ffcfab 208px,#ffc2a0 224px,#ffb696 240px,#ffaf90 251px)"></div><div style="position:absolute;left:0;top:128px;width:251px;height:4px;background:linear-gradient(90deg,#6effd9 0px,#7affd9 16px,#87ffd9 32px,#94ffd9 48px,#a2ffd8 64px,#b1ffd8 80px,#c0ffd8 96px,#d0ffd7 112px,#e1ffd7 128px,#f2ffd7 144px,#fffad3 160px,#ffeac4 176px,#ffdab7 192px,#ffcdab 208px,#ffc0a0 224px,#ffb496 240px,#ffad90 251px)"></div><div style="position:absolute;left:0;top:132px;width:251px;height:4px;background:linear-gradient(90deg,#70ffdc 0px,#7cffdc 16px,#89ffdc 32px,#96ffdb 48px,#a5ffdb 64px,#b3ffdb 80px,#c3ffdb 96px,#d3ffda 112px,#e3ffda 128px,#f5ffda 144px,#fff7d3 160px,#ffe7c5 176px,#ffd8b8 192px,#ffcaac 208px,#ffbea1 224px,#ffb297 240px,#ffab91 251px)"></div><div style="position:absolute;left:0;top:136px;width:251px;height:4px;background:linear-gradient(90deg,#71ffdf 0px,#7effdf 16px,#8bffde 32px,#99ffde 48px,#a7ffde 64px,#b6ffde 80px,#c5ffde 96px,#d5ffdd 112px,#e6ffdd 128px,#f8ffdd 144px,#fff4d3 160px,#ffe4c5 176px,#ffd5b8 192px,#ffc8ac 208px,#ffbba1 224px,#ffb097 240px,#ffa991 251px)"></div><div style="position:absolute;left:0;top:140px;width:251px;height:4px;background:linear-gradient(90deg,#73ffe2 0px,#80ffe2 16px,#8dffe1 32px,#9bffe1 48px,#a9ffe1 64px,#b8ffe1 80px,#c8ffe1 96px,#d8ffe0 112px,#e9ffe0 128px,#fbffe0 144px,#fff1d4 160px,#ffe1c5 176px,#ffd3b8 192px,#ffc5ad 208px,#ffb9a2 224px,#ffae98 240px,#ffa791 251px)"></div><div style="position:absolute;left:0;top:144px;width:251px;height:4px;background:linear-gradient(90deg,#75ffe5 0px,#81ffe4 16px,#8fffe4 32px,#9dffe4 48px,#abffe4 64px,#bbffe4 80px,#caffe4 96px,#dbffe4 112px,#ecffe3 128px,#feffe3 144px,#ffeed4 160px,#ffdec6 176px,#ffd0b9 192px,#ffc3ad 208px,#ffb7a2 224px,#ffac98 240px,#ffa592 251px)"></div><div style="position:absolute;left:0;top:148px;width:251px;height:4px;background:linear-gradient(90deg,#76ffe7 0px,#83ffe7 16px,#91ffe7 32px,#9fffe7 48px,#aeffe7 64px,#bdffe7 80px,#cdffe7 96px,#deffe7 112px,#efffe7 128px,#fffde4 144px,#ffebd5 160px,#ffdcc6 176px,#ffcdb9 192px,#ffc0ad 208px,#ffb4a3 224px,#ffaa99 240px,#ffa392 251px)"></div><div style="position:absolute;left:0;top:152px;width:251px;height:4px;background:linear-gradient(90deg,#78ffea 0px,#85ffea 16px,#93ffea 32px,#a1ffea 48px,#b0ffea 64px,#c0ffea 80px,#d0ffea 96px,#e1ffea 112px,#f2ffea 128px,#fff9e5 144px,#ffe8d5 160px,#ffd9c7 176px,#ffcbba 192px,#ffbeae 208px,#ffb2a3 224px,#ffa799 240px,#ffa193 251px)"></div><div style="position:absolute;left:0;top:156px;width:251px;height:4px;background:linear-gradient(90deg,#7affed 0px,#87ffed 16px,#95ffed 32px,#a3ffed 48px,#b2ffed 64px,#c2ffed 80px,#d2ffed 96px,#e4ffed 112px,#f5ffed 128px,#fff6e5 144px,#ffe5d5 160px,#ffd6c7 176px,#ffc8ba 192px,#ffbcae 208px,#ffb0a3 224px,#ffa59a 240px,#ff9f93 251px)"></div><div style="position:absolute;left:0;top:160px;width:251px;height:4px;background:linear-gradient(90deg,#7cfff1 0px,#89fff0 16px,#97fff0 32px,#a6fff0 48px,#b5fff0 64px,#c5fff0 80px,#d5fff0 96px,#e7fff0 112px,#f9fff0 128px,#fff3e5 144px,#ffe3d6 160px,#ffd3c7 176px,#ffc6ba 192px,#ffb9af 208px,#ffaea4 224px,#ffa39a 240px,#ff9d94 251px)"></div><div style="position:absolute;left:0;top:164px;width:251px;height:4px;background:linear-gradient(90deg,#7efff4 0px,#8bfff4 16px,#99fff4 32px,#a8fff4 48px,#b7fff4 64px,#c7fff4 80px,#d8fff4 96px,#eafff4 112px,#fcfff4 128px,#fff0e6 144px,#ffe0d6 160px,#ffd1c8 176px,#ffc3bb 192px,#ffb7af 208px,#ffaca4 224px,#ffa19a 240px,#ff9b94 251px)"></div><div style="position:absolute;left:0;top:168px;width:251px;height:4px;background:linear-gradient(90deg,#7ffff7 0px,#8dfff7 16px,#9bfff7 32px,#aafff7 48px,#bafff7 64px,#cafff7 80px,#dbfff7 96px,#edfff7 112px,#fffff7 128px,#ffede6 144px,#ffddd6 160px,#ffcec8 176px,#ffc1bb 192px,#ffb5b0 208px,#ffa9a5 224px,#ff9f9b 240px,#ff9994 251px)"></div><div style="position:absolute;left:0;top:172px;width:251px;height:4px;background:linear-gradient(90deg,#81fffa 0px,#8ffffa 16px,#9dfffa 32px,#adfffa 48px,#bcfffa 64px,#cdfffa 80px,#defffb 96px,#f0fffb 112px,#fffcf7 128px,#ffeae6 144px,#ffdad7 160px,#ffccc9 176px,#ffbebc 192px,#ffb2b0 208px,#ffa7a5 224px,#ff9d9b 240px,#ff9795 251px)"></div><div style="position:absolute;left:0;top:176px;width:251px;height:4px;background:linear-gradient(90deg,#83fffd 0px,#91fffd 16px,#a0fffd 32px,#affffe 48px,#bffffe 64px,#cffffe 80px,#e1fffe 96px,#f3fffe 112px,#fff8f8 128px,#ffe7e7 144px,#ffd7d7 160px,#ffc9c9 176px,#ffbcbc 192px,#ffb0b0 208px,#ffa5a6 224px,#ff9b9c 240px,#ff9595 251px)"></div><div style="position:absolute;left:0;top:180px;width:251px;height:4px;background:linear-gradient(90deg,#84feff 0px,#92fdff 16px,#a1fdff 32px,#b0fdff 48px,#c0fdff 64px,#d0fdff 80px,#e2fcff 96px,#f3fcff 112px,#fff5f8 128px,#ffe4e7 144px,#ffd4d7 160px,#ffc6c9 176px,#ffbabc 192px,#ffaeb1 208px,#ffa3a6 224px,#ff999c 240px,#ff9396 251px)"></div><div style="position:absolute;left:0;top:184px;width:251px;height:4px;background:linear-gradient(90deg,#85faff 0px,#93faff 16px,#a1faff 32px,#b0faff 48px,#c0f9ff 64px,#d0f9ff 80px,#e1f9ff 96px,#f3f9ff 112px,#fff2f8 128px,#ffe1e7 144px,#ffd2d8 160px,#ffc4ca 176px,#ffb7bd 192px,#ffacb1 208px,#ffa1a6 224px,#ff979c 240px,#ff9196 251px)"></div><div style="position:absolute;left:0;top:188px;width:251px;height:4px;background:linear-gradient(90deg,#85f7ff 0px,#93f7ff 16px,#a1f7ff 32px,#b0f6ff 48px,#c0f6ff 64px,#d0f6ff 80px,#e1f6ff 96px,#f3f5ff 112px,#ffeff9 128px,#ffdee7 144px,#ffcfd8 160px,#ffc1ca 176px,#ffb5bd 192px,#ffa9b2 208px,#ff9fa7 224px,#ff959d 240px,#ff8f97 251px)"></div><div style="position:absolute;left:0;top:192px;width:251px;height:4px;background:linear-gradient(90deg,#85f4ff 0px,#93f4ff 16px,#a1f3ff 32px,#b0f3ff 48px,#c0f3ff 64px,#d0f2ff 80px,#e1f2ff 96px,#f3f2ff 112px,#ffecf9 128px,#ffdbe8 144px,#ffccd8 160px,#ffbfca 176px,#ffb3be 192px,#ffa7b2 208px,#ff9da7 224px,#ff939d 240px,#ff8d97 251px)"></div></div></div>
<svg class="ab" style="left:0;top:0" width="1920" height="1035"><rect x="1390.0" y="231.5" width="15" height="15" fill="none" stroke="#e0e0e0" stroke-width="2.2"/><circle cx="1407.3" cy="247.2" r="4.5" fill="none" stroke="#153015" stroke-width="2"/><rect x="1531.0" y="319.5" width="15" height="15" fill="none" stroke="#e8e8c0" stroke-width="2.2"/><circle cx="1545.8" cy="335.7" r="4.5" fill="none" stroke="#333300" stroke-width="2"/><rect x="1336.5" y="436.0" width="15" height="15" fill="none" stroke="#c0f0f0" stroke-width="2.2"/><circle cx="1339.0" cy="469.2" r="4.5" fill="none" stroke="#104040" stroke-width="2"/><rect x="1432.3" y="441.8" width="15" height="15" fill="none" stroke="#303030" stroke-width="2.2"/><circle cx="1427.5" cy="470.0" r="4.5" fill="#fff" stroke="#303030" stroke-width="2"/><rect x="1457.5" y="564.5" width="15" height="15" fill="none" stroke="#f0c0f0" stroke-width="2.2"/><circle cx="1442.0" cy="580.9" r="4.5" fill="none" stroke="#500050" stroke-width="2"/><rect x="1758.0" y="460.3" width="15" height="15" fill="none" stroke="#e0e0e0" stroke-width="2.2"/><circle cx="1757.0" cy="472.0" r="4.5" fill="none" stroke="#600000" stroke-width="2"/><rect x="1285.6" y="621.6" width="15" height="15" fill="none" stroke="#e0e0ff" stroke-width="2.2"/><rect x="1766.0" y="243.0" width="15" height="15" fill="none" stroke="#333" stroke-width="2.2"/><circle cx="1727.0" cy="336.0" r="4.5" fill="#fff" stroke="#333" stroke-width="2"/></svg>
<div class="ab" style="left:1612px;top:633px;width:293px;height:30px;background:#2c2c2c"></div>
<div class="t" style="left:1613px;top:637px;font-size:22.5px;color:#eee">Gamut Coverage:&nbsp; 96.4%</div>
<div class="t tt" style="left:217px;top:200px;transform:translateX(-50%)">DeltaE 2000</div>
<div class="ab" style="left:23px;top:219px;width:387px;height:438px;background:#222;border:1.5px solid #a0a0a0;border-bottom-width:2px"></div>
<div class="ab" style="left:74.8px;top:220px;width:1.5px;height:437px;background:#8a8a8a"></div>
<div class="ab" style="left:126.1px;top:220px;width:1.5px;height:437px;background:#8a8a8a"></div>
<div class="ab" style="left:177.4px;top:220px;width:1.5px;height:437px;background:#8a8a8a"></div>
<div class="ab" style="left:228.7px;top:220px;width:1.5px;height:437px;background:#8a8a8a"></div>
<div class="ab" style="left:280.0px;top:220px;width:1.5px;height:437px;background:#8a8a8a"></div>
<div class="ab" style="left:331.3px;top:220px;width:1.5px;height:437px;background:#8a8a8a"></div>
<div class="ab" style="left:382.6px;top:220px;width:1.5px;height:437px;background:#8a8a8a"></div>
<div class="t lb" style="left:24.0px;top:667px;transform:translateX(-50%)">0</div>
<div class="ab" style="left:23.5px;top:656px;width:1.5px;height:6px;background:#a0a0a0"></div>
<div class="t lb" style="left:75.3px;top:667px;transform:translateX(-50%)">2</div>
<div class="ab" style="left:74.8px;top:656px;width:1.5px;height:6px;background:#a0a0a0"></div>
<div class="t lb" style="left:126.6px;top:667px;transform:translateX(-50%)">4</div>
<div class="ab" style="left:126.1px;top:656px;width:1.5px;height:6px;background:#a0a0a0"></div>
<div class="t lb" style="left:177.9px;top:667px;transform:translateX(-50%)">6</div>
<div class="ab" style="left:177.4px;top:656px;width:1.5px;height:6px;background:#a0a0a0"></div>
<div class="t lb" style="left:229.2px;top:667px;transform:translateX(-50%)">8</div>
<div class="ab" style="left:228.7px;top:656px;width:1.5px;height:6px;background:#a0a0a0"></div>
<div class="t lb" style="left:280.5px;top:667px;transform:translateX(-50%)">10</div>
<div class="ab" style="left:280.0px;top:656px;width:1.5px;height:6px;background:#a0a0a0"></div>
<div class="t lb" style="left:331.8px;top:667px;transform:translateX(-50%)">12</div>
<div class="ab" style="left:331.3px;top:656px;width:1.5px;height:6px;background:#a0a0a0"></div>
<div class="t lb" style="left:383.1px;top:667px;transform:translateX(-50%)">14</div>
<div class="ab" style="left:382.6px;top:656px;width:1.5px;height:6px;background:#a0a0a0"></div>
<div class="ab" style="left:24px;top:226px;width:362.5px;height:41px;background:linear-gradient(rgba(255,255,255,0.22),rgba(255,255,255,0) 14%),linear-gradient(90deg,#fff 0%,#fff 45%,#ddd 65%,#7a7a7a 100%);border:1px solid #111;border-left:none;box-shadow:0 0 4px 2px rgba(0,0,0,0.55)"></div>
<div class="ab" style="left:24px;top:281px;width:63.4px;height:41px;background:linear-gradient(rgba(255,255,255,0.22),rgba(255,255,255,0) 14%),linear-gradient(90deg,#e0e040 0%,#c8c800 7%,#c8c800 55%,#6a6a00 100%);border:1px solid #111;border-left:none;box-shadow:0 0 4px 2px rgba(0,0,0,0.55)"></div>
<div class="ab" style="left:24px;top:336px;width:77.6px;height:41px;background:linear-gradient(rgba(255,255,255,0.22),rgba(255,255,255,0) 14%),linear-gradient(90deg,#e060e0 0%,#c800c8 7%,#c800c8 55%,#6a006a 100%);border:1px solid #111;border-left:none;box-shadow:0 0 4px 2px rgba(0,0,0,0.55)"></div>
<div class="ab" style="left:24px;top:391px;width:225.8px;height:41px;background:linear-gradient(rgba(255,255,255,0.22),rgba(255,255,255,0) 14%),linear-gradient(90deg,#60e0e0 0%,#00c4c4 7%,#00c4c4 55%,#005e5e 100%);border:1px solid #111;border-left:none;box-shadow:0 0 4px 2px rgba(0,0,0,0.55)"></div>
<div class="ab" style="left:24px;top:446px;width:71.9px;height:41px;background:linear-gradient(rgba(255,255,255,0.22),rgba(255,255,255,0) 14%),linear-gradient(90deg,#5050e0 0%,#0000c8 7%,#0000c8 55%,#00006a 100%);border:1px solid #111;border-left:none;box-shadow:0 0 4px 2px rgba(0,0,0,0.55)"></div>
<div class="ab" style="left:24px;top:501px;width:32.4px;height:41px;background:linear-gradient(rgba(255,255,255,0.22),rgba(255,255,255,0) 14%),linear-gradient(90deg,#50d050 0%,#00c000 7%,#00c000 55%,#006000 100%);border:1px solid #111;border-left:none;box-shadow:0 0 4px 2px rgba(0,0,0,0.55)"></div>
<div class="ab" style="left:24px;top:556px;width:69.3px;height:41px;background:linear-gradient(rgba(255,255,255,0.22),rgba(255,255,255,0) 14%),linear-gradient(90deg,#e05050 0%,#c80000 7%,#c80000 55%,#6a0000 100%);border:1px solid #111;border-left:none;box-shadow:0 0 4px 2px rgba(0,0,0,0.55)"></div>
<div class="ab" style="left:24px;top:611px;width:315.2px;height:41px;background:linear-gradient(rgba(255,255,255,0.22),rgba(255,255,255,0) 14%),linear-gradient(90deg,#e4e4e4 0%,#d0d0d0 40%,#a8a8a8 75%,#707070 100%);border:1px solid #111;border-left:none;box-shadow:0 0 4px 2px rgba(0,0,0,0.55)"></div>
<div class="t tt" style="left:537.9px;top:129px;transform:translateX(-50%)">DeltaL</div>
<div class="ab" style="left:469.0px;top:148px;width:167.8px;height:337px;background:#222;border:1.5px solid #a0a0a0;border-bottom-width:2px"></div>
<div class="ab" style="left:463.5px;top:148.3px;width:6px;height:1.5px;background:#a0a0a0"></div>
<div class="t lb" style="right:1455.5px;top:140.5px;">15</div>
<div class="ab" style="left:469.5px;top:204.1px;width:166.8px;height:1.5px;background:#9a9a9a"></div>
<div class="ab" style="left:463.5px;top:204.1px;width:6px;height:1.5px;background:#a0a0a0"></div>
<div class="t lb" style="right:1455.5px;top:196.3px;">10</div>
<div class="ab" style="left:469.5px;top:259.9px;width:166.8px;height:1.5px;background:#9a9a9a"></div>
<div class="ab" style="left:463.5px;top:259.9px;width:6px;height:1.5px;background:#a0a0a0"></div>
<div class="t lb" style="right:1455.5px;top:252.1px;">5</div>
<div class="ab" style="left:469.5px;top:315.7px;width:16px;height:1.5px;background:#9a9a9a"></div>
<div class="ab" style="left:485.5px;top:315.7px;width:134.8px;height:2px;background:#181818"></div>
<div class="ab" style="left:620.3px;top:315.7px;width:16px;height:1.5px;background:#9a9a9a"></div>
<div class="ab" style="left:463.5px;top:315.7px;width:6px;height:1.5px;background:#a0a0a0"></div>
<div class="t lb" style="right:1455.5px;top:307.9px;">0</div>
<div class="ab" style="left:469.5px;top:371.5px;width:166.8px;height:1.5px;background:#9a9a9a"></div>
<div class="ab" style="left:463.5px;top:371.5px;width:6px;height:1.5px;background:#a0a0a0"></div>
<div class="t lb" style="right:1455.5px;top:363.7px;">-5</div>
<div class="ab" style="left:469.5px;top:427.3px;width:166.8px;height:1.5px;background:#9a9a9a"></div>
<div class="ab" style="left:463.5px;top:427.3px;width:6px;height:1.5px;background:#a0a0a0"></div>
<div class="t lb" style="right:1455.5px;top:419.5px;">-10</div>
<div class="ab" style="left:463.5px;top:483.1px;width:6px;height:1.5px;background:#a0a0a0"></div>
<div class="t lb" style="right:1455.5px;top:475.3px;">-15</div>
<div class="ab" style="left:635.3px;top:484px;width:1.5px;height:6px;background:#a0a0a0"></div>
<div class="ab" style="left:469.0px;top:484px;width:1.5px;height:6px;background:#a0a0a0"></div>
<div class="t tt" style="left:552.9px;top:489px;transform:translateX(-50%)">100W</div>
<div class="t tt" style="left:765.5px;top:129px;transform:translateX(-50%)">DeltaC</div>
<div class="ab" style="left:697.5px;top:148px;width:166.0px;height:337px;background:#222;border:1.5px solid #a0a0a0;border-bottom-width:2px"></div>
<div class="ab" style="left:692.0px;top:148.3px;width:6px;height:1.5px;background:#a0a0a0"></div>
<div class="t lb" style="right:1227.0px;top:140.5px;">15</div>
<div class="ab" style="left:698.0px;top:204.1px;width:165.0px;height:1.5px;background:#9a9a9a"></div>
<div class="ab" style="left:692.0px;top:204.1px;width:6px;height:1.5px;background:#a0a0a0"></div>
<div class="t lb" style="right:1227.0px;top:196.3px;">10</div>
<div class="ab" style="left:698.0px;top:259.9px;width:165.0px;height:1.5px;background:#9a9a9a"></div>
<div class="ab" style="left:692.0px;top:259.9px;width:6px;height:1.5px;background:#a0a0a0"></div>
<div class="t lb" style="right:1227.0px;top:252.1px;">5</div>
<div class="ab" style="left:698.0px;top:315.7px;width:16px;height:1.5px;background:#9a9a9a"></div>
<div class="ab" style="left:847.0px;top:315.7px;width:16px;height:1.5px;background:#9a9a9a"></div>
<div class="ab" style="left:692.0px;top:315.7px;width:6px;height:1.5px;background:#a0a0a0"></div>
<div class="t lb" style="right:1227.0px;top:307.9px;">0</div>
<div class="ab" style="left:698.0px;top:371.5px;width:165.0px;height:1.5px;background:#9a9a9a"></div>
<div class="ab" style="left:692.0px;top:371.5px;width:6px;height:1.5px;background:#a0a0a0"></div>
<div class="t lb" style="right:1227.0px;top:363.7px;">-5</div>
<div class="ab" style="left:698.0px;top:427.3px;width:165.0px;height:1.5px;background:#9a9a9a"></div>
<div class="ab" style="left:692.0px;top:427.3px;width:6px;height:1.5px;background:#a0a0a0"></div>
<div class="t lb" style="right:1227.0px;top:419.5px;">-10</div>
<div class="ab" style="left:692.0px;top:483.1px;width:6px;height:1.5px;background:#a0a0a0"></div>
<div class="t lb" style="right:1227.0px;top:475.3px;">-15</div>
<div class="ab" style="left:862.0px;top:484px;width:1.5px;height:6px;background:#a0a0a0"></div>
<div class="ab" style="left:697.5px;top:484px;width:1.5px;height:6px;background:#a0a0a0"></div>
<div class="t tt" style="left:780.5px;top:489px;transform:translateX(-50%)">100W</div>
<div class="ab" style="left:715px;top:148px;width:130px;height:168px;background:linear-gradient(#fff 0%,#fff 40%,#888 100%);border:1px solid #111;border-top:none;box-shadow:0 0 3px 1.5px rgba(0,0,0,0.55)"></div>
<div class="t tt" style="left:992.0px;top:129px;transform:translateX(-50%)">DeltaH</div>
<div class="ab" style="left:923.9px;top:148px;width:166.2px;height:337px;background:#222;border:1.5px solid #a0a0a0;border-bottom-width:2px"></div>
<div class="ab" style="left:918.4px;top:148.3px;width:6px;height:1.5px;background:#a0a0a0"></div>
<div class="t lb" style="right:1000.6px;top:140.5px;">15</div>
<div class="ab" style="left:924.4px;top:204.1px;width:165.2px;height:1.5px;background:#9a9a9a"></div>
<div class="ab" style="left:918.4px;top:204.1px;width:6px;height:1.5px;background:#a0a0a0"></div>
<div class="t lb" style="right:1000.6px;top:196.3px;">10</div>
<div class="ab" style="left:924.4px;top:259.9px;width:165.2px;height:1.5px;background:#9a9a9a"></div>
<div class="ab" style="left:918.4px;top:259.9px;width:6px;height:1.5px;background:#a0a0a0"></div>
<div class="t lb" style="right:1000.6px;top:252.1px;">5</div>
<div class="ab" style="left:924.4px;top:315.7px;width:16px;height:1.5px;background:#9a9a9a"></div>
<div class="ab" style="left:940.4px;top:315.7px;width:133.2px;height:2px;background:#181818"></div>
<div class="ab" style="left:1073.6px;top:315.7px;width:16px;height:1.5px;background:#9a9a9a"></div>
<div class="ab" style="left:918.4px;top:315.7px;width:6px;height:1.5px;background:#a0a0a0"></div>
<div class="t lb" style="right:1000.6px;top:307.9px;">0</div>
<div class="ab" style="left:924.4px;top:371.5px;width:165.2px;height:1.5px;background:#9a9a9a"></div>
<div class="ab" style="left:918.4px;top:371.5px;width:6px;height:1.5px;background:#a0a0a0"></div>
<div class="t lb" style="right:1000.6px;top:363.7px;">-5</div>
<div class="ab" style="left:924.4px;top:427.3px;width:165.2px;height:1.5px;background:#9a9a9a"></div>
<div class="ab" style="left:918.4px;top:427.3px;width:6px;height:1.5px;background:#a0a0a0"></div>
<div class="t lb" style="right:1000.6px;top:419.5px;">-10</div>
<div class="ab" style="left:918.4px;top:483.1px;width:6px;height:1.5px;background:#a0a0a0"></div>
<div class="t lb" style="right:1000.6px;top:475.3px;">-15</div>
<div class="ab" style="left:1088.6px;top:484px;width:1.5px;height:6px;background:#a0a0a0"></div>
<div class="ab" style="left:923.9px;top:484px;width:1.5px;height:6px;background:#a0a0a0"></div>
<div class="t tt" style="left:1007.0px;top:489px;transform:translateX(-50%)">100W</div>
<div class="ab" style="left:432px;top:518px;width:681px;height:173px;background:#0a0a0a"></div>
<div class="t" style="left:443px;top:557px;font-size:12.5px;font-weight:bold;color:#ddd;transform:translate(-50%,-50%) rotate(-90deg)">Actual</div>
<div class="t" style="left:443px;top:636px;font-size:12.5px;font-weight:bold;color:#ddd;transform:translate(-50%,-50%) rotate(-90deg)">Target</div>
<div class="ab" style="left:452.8px;top:526px;width:72px;height:141px;border:1.5px solid #ddd;background:linear-gradient(#bcc2cc 0,#bcc2cc 50%,#bac3b4 50%,#bac3b4 100%)"></div>
<div class="t" style="left:488.8px;top:671px;font-size:13.5px;font-weight:bold;color:#e0e0e0;transform:translateX(-50%)">White</div>
<div class="ab" style="left:536.0px;top:526px;width:72px;height:141px;border:1.5px solid #ddd;background:linear-gradient(#c70a26 0,#c70a26 50%,#c8001e 50%,#c8001e 100%)"></div>
<div class="t" style="left:572.0px;top:671px;font-size:13.5px;font-weight:bold;color:#e0e0e0;transform:translateX(-50%)">Red</div>
<div class="ab" style="left:619.2px;top:526px;width:72px;height:141px;border:1.5px solid #ddd;background:linear-gradient(#19cc58 0,#19cc58 50%,#00cc46 50%,#00cc46 100%)"></div>
<div class="t" style="left:655.2px;top:671px;font-size:13.5px;font-weight:bold;color:#e0e0e0;transform:translateX(-50%)">Green</div>
<div class="ab" style="left:702.4px;top:526px;width:72px;height:141px;border:1.5px solid #ddd;background:linear-gradient(#0a0acc 0,#0a0acc 50%,#0b0cbb 50%,#0b0cbb 100%)"></div>
<div class="t" style="left:738.4px;top:671px;font-size:13.5px;font-weight:bold;color:#e0e0e0;transform:translateX(-50%)">Blue</div>
<div class="ab" style="left:785.6px;top:526px;width:72px;height:141px;border:1.5px solid #ddd;background:linear-gradient(#6acca6 0,#6acca6 50%,#00ccc0 50%,#00ccc0 100%)"></div>
<div class="t" style="left:821.6px;top:671px;font-size:13.5px;font-weight:bold;color:#e0e0e0;transform:translateX(-50%)">Cyan</div>
<div class="ab" style="left:868.8px;top:526px;width:72px;height:141px;border:1.5px solid #ddd;background:linear-gradient(#c800cc 0,#c800cc 50%,#c50aba 50%,#c50aba 100%)"></div>
<div class="t" style="left:904.8px;top:671px;font-size:13.5px;font-weight:bold;color:#e0e0e0;transform:translateX(-50%)">Magenta</div>
<div class="ab" style="left:952.0px;top:526px;width:72px;height:141px;border:1.5px solid #ddd;background:linear-gradient(#c8c41e 0,#c8c41e 50%,#c0c400 50%,#c0c400 100%)"></div>
<div class="t" style="left:988.0px;top:671px;font-size:13.5px;font-weight:bold;color:#e0e0e0;transform:translateX(-50%)">Yellow</div>
<div class="ab" style="left:1035.2px;top:526px;width:72px;height:141px;border:1.5px solid #ddd;background:linear-gradient(#e6eefc 0,#e6eefc 50%,#e8f5e2 50%,#e8f5e2 100%)"></div>
<div class="t" style="left:1071.2px;top:671px;font-size:13.5px;font-weight:bold;color:#e0e0e0;transform:translateX(-50%)">100W</div>
<div class="t" style="left:17px;top:739px;font-size:34.6px;color:#f0f0f0">Current Reading</div>
<div class="t" style="left:17px;top:789px;font-size:28.5px;color:#f0f0f0;letter-spacing:0px">x: 0.3004</div>
<div class="t" style="left:17px;top:832px;font-size:28.5px;color:#f0f0f0;letter-spacing:0px">y: 0.3182</div>
<div class="t" style="left:17px;top:875px;font-size:28.5px;color:#f0f0f0;letter-spacing:0px">fL: 147.89</div>
<div class="t" style="left:17px;top:918px;font-size:28.5px;color:#f0f0f0;letter-spacing:0.5px">cd/m<span style="font-size:34px;vertical-align:-2px">&sup2;</span>: 506.7</div>
<div class="t tt" style="left:537px;top:727px;transform:translateX(-50%)">RGB Balance</div>
<div class="ab" style="left:407px;top:745px;width:292px;height:193px;background:#222;border:1.5px solid #a0a0a0;border-bottom-width:2px"></div>
<div class="ab" style="left:408px;top:778.9px;width:290px;height:1.5px;background:#9a9a9a"></div>
<div class="ab" style="left:401px;top:778.9px;width:7px;height:1.5px;background:#a0a0a0"></div>
<div class="t lb" style="right:1519px;top:771.4px;">20</div>
<div class="ab" style="left:408px;top:842.5px;width:290px;height:1.5px;background:#9a9a9a"></div>
<div class="ab" style="left:401px;top:842.5px;width:7px;height:1.5px;background:#a0a0a0"></div>
<div class="t lb" style="right:1519px;top:835.0px;">0</div>
<div class="ab" style="left:408px;top:906.0px;width:290px;height:1.5px;background:#9a9a9a"></div>
<div class="ab" style="left:401px;top:906.0px;width:7px;height:1.5px;background:#a0a0a0"></div>
<div class="t lb" style="right:1519px;top:898.5px;">-20</div>
<div class="ab" style="left:697px;top:936px;width:1.5px;height:6px;background:#a0a0a0"></div><div class="ab" style="left:407px;top:936px;width:1.5px;height:6px;background:#a0a0a0"></div>
<div class="t tt" style="left:553px;top:941px;transform:translateX(-50%)">100W</div>
<div class="ab" style="left:436px;top:832px;width:78px;height:11px;background:linear-gradient(#ff2020,#d00000);border:1px solid #111;box-shadow:0 0 3px 1.5px rgba(0,0,0,0.55)"></div>
<div class="ab" style="left:515px;top:843px;width:78px;height:13px;background:linear-gradient(#00a000,#007000);border:1px solid #111;box-shadow:0 0 3px 1.5px rgba(0,0,0,0.55)"></div>
<div class="ab" style="left:594px;top:751px;width:77px;height:92px;background:linear-gradient(#3030ff 0%,#0000ff 55%,#000080 100%);border:1px solid #111;box-shadow:0 0 3px 1.5px rgba(0,0,0,0.55)"></div>
<div class="ab" style="left:723px;top:722px;width:16px;height:233px;background:linear-gradient(#050505 0%,#050505 17%,#1c1c1c 18%,#1c1c1c 100%)"></div>
<div class="ab" style="left:739px;top:722px;width:781px;height:41px;background:linear-gradient(#2c2c2c 0%,#262626 52%,#0c0c0c 58%,#0c0c0c 100%)"></div>
<div class="ab" style="left:739px;top:762.5px;width:781px;height:39px;background:#3c3c3c"></div>
<div class="ab" style="left:739px;top:801.0px;width:781px;height:39px;background:#8e8e8e"></div>
<div class="ab" style="left:739px;top:839.5px;width:781px;height:39px;background:#3c3c3c"></div>
<div class="ab" style="left:739px;top:878.0px;width:781px;height:39px;background:#8a8a8a"></div>
<div class="ab" style="left:739px;top:916.5px;width:781px;height:39px;background:#3c3c3c"></div>
<div class="t" style="left:827.6px;top:734px;font-size:23px;color:#f0f0f0;transform-origin:0 0;transform:scaleX(0.83)">White</div>
<div class="t" style="left:918.3px;top:734px;font-size:23px;color:#f0f0f0;transform-origin:0 0;transform:scaleX(0.83)">Red</div>
<div class="t" style="left:999.3px;top:734px;font-size:23px;color:#f0f0f0;transform-origin:0 0;transform:scaleX(0.83)">Green</div>
<div class="t" style="left:1090.0px;top:734px;font-size:23px;color:#f0f0f0;transform-origin:0 0;transform:scaleX(0.83)">Blue</div>
<div class="t" style="left:1170.0px;top:734px;font-size:23px;color:#f0f0f0;transform-origin:0 0;transform:scaleX(0.83)">Cyan</div>
<div class="t" style="left:1261.0px;top:734px;font-size:23px;color:#f0f0f0;transform-origin:0 0;transform:scaleX(0.83)">Magenta</div>
<div class="t" style="left:1343.6px;top:734px;font-size:23px;color:#f0f0f0;transform-origin:0 0;transform:scaleX(0.83)">Yellow</div>
<div class="t" style="left:1434.0px;top:734px;font-size:23px;color:#f0f0f0;transform-origin:0 0;transform:scaleX(0.83)">100W</div>
<div class="t" style="left:744px;top:771.5px;font-size:25px;color:#f0f0f0;transform-origin:0 0;transform:scaleX(0.70)">x: CIE31</div>
<div class="t" style="left:827.6px;top:771.5px;font-size:25px;color:#f0f0f0;transform-origin:0 0;transform:scaleX(0.765)">0.2998</div>
<div class="t" style="left:918.3px;top:771.5px;font-size:25px;color:#f0f0f0;transform-origin:0 0;transform:scaleX(0.765)">0.6710</div>
<div class="t" style="left:999.3px;top:771.5px;font-size:25px;color:#f0f0f0;transform-origin:0 0;transform:scaleX(0.765)">0.2768</div>
<div class="t" style="left:1090.0px;top:771.5px;font-size:25px;color:#f0f0f0;transform-origin:0 0;transform:scaleX(0.765)">0.1504</div>
<div class="t" style="left:1170.0px;top:771.5px;font-size:25px;color:#f0f0f0;transform-origin:0 0;transform:scaleX(0.765)">0.2005</div>
<div class="t" style="left:1261.0px;top:771.5px;font-size:25px;color:#f0f0f0;transform-origin:0 0;transform:scaleX(0.765)">0.3149</div>
<div class="t" style="left:1343.6px;top:771.5px;font-size:25px;color:#f0f0f0;transform-origin:0 0;transform:scaleX(0.765)">0.4326</div>
<div class="t" style="left:1434.0px;top:771.5px;font-size:25px;color:#f0f0f0;transform-origin:0 0;transform:scaleX(0.765)">0.3004</div>
<div class="t" style="left:744px;top:810.0px;font-size:25px;color:#f0f0f0;transform-origin:0 0;transform:scaleX(0.70)">y: CIE31</div>
<div class="t" style="left:827.6px;top:810.0px;font-size:25px;color:#f0f0f0;transform-origin:0 0;transform:scaleX(0.765)">0.3175</div>
<div class="t" style="left:918.3px;top:810.0px;font-size:25px;color:#f0f0f0;transform-origin:0 0;transform:scaleX(0.765)">0.3165</div>
<div class="t" style="left:999.3px;top:810.0px;font-size:25px;color:#f0f0f0;transform-origin:0 0;transform:scaleX(0.765)">0.6752</div>
<div class="t" style="left:1090.0px;top:810.0px;font-size:25px;color:#f0f0f0;transform-origin:0 0;transform:scaleX(0.765)">0.0591</div>
<div class="t" style="left:1170.0px;top:810.0px;font-size:25px;color:#f0f0f0;transform-origin:0 0;transform:scaleX(0.765)">0.3187</div>
<div class="t" style="left:1261.0px;top:810.0px;font-size:25px;color:#f0f0f0;transform-origin:0 0;transform:scaleX(0.765)">0.1400</div>
<div class="t" style="left:1343.6px;top:810.0px;font-size:25px;color:#f0f0f0;transform-origin:0 0;transform:scaleX(0.765)">0.5348</div>
<div class="t" style="left:1434.0px;top:810.0px;font-size:25px;color:#f0f0f0;transform-origin:0 0;transform:scaleX(0.765)">0.3182</div>
<div class="t" style="left:744px;top:848.5px;font-size:25px;color:#f0f0f0;transform-origin:0 0;transform:scaleX(0.70)">Y</div>
<div class="t" style="left:827.6px;top:848.5px;font-size:25px;color:#f0f0f0;transform-origin:0 0;transform:scaleX(0.765)">261.5969</div>
<div class="t" style="left:918.3px;top:848.5px;font-size:25px;color:#f0f0f0;transform-origin:0 0;transform:scaleX(0.765)">54.4507</div>
<div class="t" style="left:999.3px;top:848.5px;font-size:25px;color:#f0f0f0;transform-origin:0 0;transform:scaleX(0.765)">188.4291</div>
<div class="t" style="left:1090.0px;top:848.5px;font-size:25px;color:#f0f0f0;transform-origin:0 0;transform:scaleX(0.765)">22.6640</div>
<div class="t" style="left:1170.0px;top:848.5px;font-size:25px;color:#f0f0f0;transform-origin:0 0;transform:scaleX(0.765)">211.6491</div>
<div class="t" style="left:1261.0px;top:848.5px;font-size:25px;color:#f0f0f0;transform-origin:0 0;transform:scaleX(0.765)">76.7894</div>
<div class="t" style="left:1343.6px;top:848.5px;font-size:25px;color:#f0f0f0;transform-origin:0 0;transform:scaleX(0.765)">241.0263</div>
<div class="t" style="left:1434.0px;top:848.5px;font-size:25px;color:#f0f0f0;transform-origin:0 0;transform:scaleX(0.765)">506.7045</div>
<div class="t" style="left:744px;top:887.0px;font-size:25px;color:#f0f0f0;transform-origin:0 0;transform:scaleX(0.70)">Target Y</div>
<div class="t" style="left:827.6px;top:887.0px;font-size:25px;color:#f0f0f0;transform-origin:0 0;transform:scaleX(0.765)">261.5969</div>
<div class="t" style="left:918.3px;top:887.0px;font-size:25px;color:#f0f0f0;transform-origin:0 0;transform:scaleX(0.765)">54.8149</div>
<div class="t" style="left:999.3px;top:887.0px;font-size:25px;color:#f0f0f0;transform-origin:0 0;transform:scaleX(0.765)">188.7465</div>
<div class="t" style="left:1090.0px;top:887.0px;font-size:25px;color:#f0f0f0;transform-origin:0 0;transform:scaleX(0.765)">18.0355</div>
<div class="t" style="left:1170.0px;top:887.0px;font-size:25px;color:#f0f0f0;transform-origin:0 0;transform:scaleX(0.765)">206.7820</div>
<div class="t" style="left:1261.0px;top:887.0px;font-size:25px;color:#f0f0f0;transform-origin:0 0;transform:scaleX(0.765)">72.8505</div>
<div class="t" style="left:1343.6px;top:887.0px;font-size:25px;color:#f0f0f0;transform-origin:0 0;transform:scaleX(0.765)">243.5614</div>
<div class="t" style="left:1434.0px;top:887.0px;font-size:25px;color:#f0f0f0;transform-origin:0 0;transform:scaleX(0.765)">506.7045</div>
<div class="t" style="left:744px;top:925.5px;font-size:25px;color:#f0f0f0;transform-origin:0 0;transform:scaleX(0.70)">&Delta;E 2000</div>
<div class="t" style="left:827.6px;top:925.5px;font-size:25px;color:#f0f0f0;transform-origin:0 0;transform:scaleX(0.765)">12.2503</div>
<div class="t" style="left:918.3px;top:925.5px;font-size:25px;color:#f0f0f0;transform-origin:0 0;transform:scaleX(0.765)">2.6632</div>
<div class="t" style="left:999.3px;top:925.5px;font-size:25px;color:#f0f0f0;transform-origin:0 0;transform:scaleX(0.765)">1.2247</div>
<div class="t" style="left:1090.0px;top:925.5px;font-size:25px;color:#f0f0f0;transform-origin:0 0;transform:scaleX(0.765)">2.7636</div>
<div class="t" style="left:1170.0px;top:925.5px;font-size:25px;color:#f0f0f0;transform-origin:0 0;transform:scaleX(0.765)">8.7659</div>
<div class="t" style="left:1261.0px;top:925.5px;font-size:25px;color:#f0f0f0;transform-origin:0 0;transform:scaleX(0.765)">2.9869</div>
<div class="t" style="left:1343.6px;top:925.5px;font-size:25px;color:#f0f0f0;transform-origin:0 0;transform:scaleX(0.765)">2.4340</div>
<div class="t" style="left:1434.0px;top:925.5px;font-size:25px;color:#f0f0f0;transform-origin:0 0;transform:scaleX(0.765)">14.0932</div>
<div class="ab" style="left:0;top:961px;width:1920px;height:74px;background:#222"></div>
<div class="ab" style="left:1367px;top:966px;width:190px;height:69px;background:linear-gradient(#2a2a2a,#333)"></div>
<div class="ab" style="left:2.0px;top:966px;width:168.5px;height:69px;border-radius:5px 5px 0 0;background:linear-gradient(#a8a8a8 0%,#8e8e8e 40%,#6a6a6a 65%,#4c4c4c 100%)"></div>
<div class="ab" style="left:8.0px;top:973px;width:157px;height:39px;border-radius:4px;background:#c3c3c3;border:1px solid rgba(255,255,255,0.45)"></div>
<div class="t" style="left:86.0px;top:1018.5px;font-size:11.5px;font-weight:bold;color:#2e2e2e;transform:translateX(-50%)">White</div>
<div class="ab" style="left:172.7px;top:966px;width:168.5px;height:69px;border-radius:5px 5px 0 0;background:linear-gradient(#a8a8a8 0%,#8e8e8e 40%,#6a6a6a 65%,#4c4c4c 100%)"></div>
<div class="ab" style="left:178.7px;top:973px;width:157px;height:39px;border-radius:4px;background:#c00000;border:1px solid rgba(0,0,0,0.15)"></div>
<div class="t" style="left:256.7px;top:1018.5px;font-size:11.5px;font-weight:bold;color:#2e2e2e;transform:translateX(-50%)">Red</div>
<div class="ab" style="left:343.4px;top:966px;width:168.5px;height:69px;border-radius:5px 5px 0 0;background:linear-gradient(#a8a8a8 0%,#8e8e8e 40%,#6a6a6a 65%,#4c4c4c 100%)"></div>
<div class="ab" style="left:349.4px;top:973px;width:157px;height:39px;border-radius:4px;background:#00c000;border:1px solid rgba(0,0,0,0.15)"></div>
<div class="t" style="left:427.4px;top:1018.5px;font-size:11.5px;font-weight:bold;color:#2e2e2e;transform:translateX(-50%)">Green</div>
<div class="ab" style="left:514.1px;top:966px;width:168.5px;height:69px;border-radius:5px 5px 0 0;background:linear-gradient(#a8a8a8 0%,#8e8e8e 40%,#6a6a6a 65%,#4c4c4c 100%)"></div>
<div class="ab" style="left:520.1px;top:973px;width:157px;height:39px;border-radius:4px;background:#0000c0;border:1px solid rgba(0,0,0,0.15)"></div>
<div class="t" style="left:598.1px;top:1018.5px;font-size:11.5px;font-weight:bold;color:#2e2e2e;transform:translateX(-50%)">Blue</div>
<div class="ab" style="left:684.8px;top:966px;width:168.5px;height:69px;border-radius:5px 5px 0 0;background:linear-gradient(#a8a8a8 0%,#8e8e8e 40%,#6a6a6a 65%,#4c4c4c 100%)"></div>
<div class="ab" style="left:690.8px;top:973px;width:157px;height:39px;border-radius:4px;background:#00c3c8;border:1px solid rgba(0,0,0,0.15)"></div>
<div class="t" style="left:768.8px;top:1018.5px;font-size:11.5px;font-weight:bold;color:#2e2e2e;transform:translateX(-50%)">Cyan</div>
<div class="ab" style="left:855.5px;top:966px;width:168.5px;height:69px;border-radius:5px 5px 0 0;background:linear-gradient(#a8a8a8 0%,#8e8e8e 40%,#6a6a6a 65%,#4c4c4c 100%)"></div>
<div class="ab" style="left:861.5px;top:973px;width:157px;height:39px;border-radius:4px;background:#c800c8;border:1px solid rgba(0,0,0,0.15)"></div>
<div class="t" style="left:939.5px;top:1018.5px;font-size:11.5px;font-weight:bold;color:#2e2e2e;transform:translateX(-50%)">Magenta</div>
<div class="ab" style="left:1026.2px;top:966px;width:168.5px;height:69px;border-radius:5px 5px 0 0;background:linear-gradient(#a8a8a8 0%,#8e8e8e 40%,#6a6a6a 65%,#4c4c4c 100%)"></div>
<div class="ab" style="left:1032.2px;top:973px;width:157px;height:39px;border-radius:4px;background:#c8c800;border:1px solid rgba(0,0,0,0.15)"></div>
<div class="t" style="left:1110.2px;top:1018.5px;font-size:11.5px;font-weight:bold;color:#2e2e2e;transform:translateX(-50%)">Yellow</div>
<div class="ab" style="left:1196.9px;top:966px;width:170px;height:69px;background:#2e2e2e"></div>
<div class="ab" style="left:1202.9px;top:970px;width:158px;height:42px;border-radius:5px;background:#fff"></div>
<div class="t" style="left:1280.9px;top:1019px;font-size:11px;font-weight:bold;color:#eee;transform:translateX(-50%)">100W</div>
<div class="ab" style="left:1557px;top:966px;width:54px;height:69px;background:linear-gradient(#b4b4b4,#8a8a8a 55%,#6e6e6e);border-radius:4px 4px 0 0"></div>
<div class="ab" style="left:1557px;top:985px;width:54px;height:1px;background:#666"></div>
<svg class="ab" style="left:1577px;top:970px" width="14" height="10"><path d="M1 8 L7 2 L13 8 Z" fill="#333"/></svg>
<div class="ab" style="left:1567px;top:993px;width:34px;height:34px;border:3px solid #333;border-radius:4px;background:#d0d0d0"></div>
<div class="ab" style="left:1576px;top:1003px;width:16px;height:13px;background:#000"></div>
<div class="ab" style="left:1612.0px;top:966px;width:50px;height:33px;background:linear-gradient(#b4b4b4,#8a8a8a 55%,#6e6e6e);border-right:1px solid #555"></div>
<div class="ab" style="left:1625.0px;top:970px;width:24px;height:24px;border-radius:50%;background:radial-gradient(#8a8a8a,#a0a0a0)"></div>
<div class="ab" style="left:1662.9px;top:966px;width:50px;height:33px;background:linear-gradient(#b4b4b4,#8a8a8a 55%,#6e6e6e);border-right:1px solid #555"></div>
<div class="ab" style="left:1675.9px;top:970px;width:24px;height:24px;border-radius:50%;background:radial-gradient(#8a8a8a,#a0a0a0)"></div>
<div class="ab" style="left:1713.8px;top:966px;width:50px;height:33px;background:linear-gradient(#b4b4b4,#8a8a8a 55%,#6e6e6e);border-right:1px solid #555"></div>
<div class="ab" style="left:1726.8px;top:970px;width:24px;height:24px;border-radius:50%;background:radial-gradient(#8a8a8a,#a0a0a0)"></div>
<div class="ab" style="left:1764.7px;top:966px;width:50px;height:33px;background:linear-gradient(#b4b4b4,#8a8a8a 55%,#6e6e6e);border-right:1px solid #555"></div>
<div class="ab" style="left:1777.7px;top:970px;width:24px;height:24px;border-radius:50%;background:radial-gradient(#8a8a8a,#a0a0a0)"></div>
<div class="ab" style="left:1815.6px;top:966px;width:50px;height:33px;background:linear-gradient(#b4b4b4,#8a8a8a 55%,#6e6e6e);border-right:1px solid #555"></div>
<div class="ab" style="left:1828.6px;top:970px;width:24px;height:24px;border-radius:50%;background:radial-gradient(#8a8a8a,#a0a0a0)"></div>
<div class="ab" style="left:1632px;top:977px;width:10px;height:10px;background:#333"></div>
<svg class="ab" style="left:1683px;top:975px" width="12" height="14"><path d="M1 1 L11 7 L1 13 Z" fill="#333"/></svg>
<div class="t" style="left:1731px;top:971px;font-size:19px;font-weight:bold;color:#444">H</div>
<div class="t" style="left:1780px;top:972px;font-size:17px;font-weight:bold;color:#444">&#8734;</div>
<div class="t" style="left:1832px;top:971px;font-size:18px;font-weight:bold;color:#444">&#8635;</div>
<div class="ab" style="left:1867px;top:966px;width:53px;height:33px;background:#3a3a3a"></div>
<div class="ab" style="left:1878px;top:970px;width:26px;height:26px;border-radius:50%;background:#2e2e2e"></div>
<div class="ab" style="left:1612px;top:1000px;width:153px;height:35px;background:linear-gradient(#b4b4b4,#8a8a8a 55%,#6e6e6e);border-right:1px solid #555;border-radius:4px 0 0 0"></div>
<div class="ab" style="left:1765px;top:1000px;width:154px;height:35px;background:linear-gradient(#b4b4b4,#8a8a8a 55%,#6e6e6e);border-radius:0 4px 0 0"></div>
<div class="ab" style="left:1635px;top:1006px;width:23px;height:23px;border-radius:50%;background:radial-gradient(#8a8a8a,#a8a8a8)"></div>
<div class="ab" style="left:1875px;top:1006px;width:23px;height:23px;border-radius:50%;background:radial-gradient(#8a8a8a,#a8a8a8)"></div>
<div class="t" style="left:1640px;top:1009px;font-size:14px;font-weight:bold;color:#444">&laquo;</div>
<div class="t" style="left:1880px;top:1009px;font-size:14px;font-weight:bold;color:#444">&raquo;</div>
<div class="t" style="left:1676px;top:1005px;font-size:24px;font-weight:bold;color:#383838">Back</div>
<div class="t" style="left:1797px;top:1005px;font-size:24px;font-weight:bold;color:#383838">Next</div>
</body></html>
